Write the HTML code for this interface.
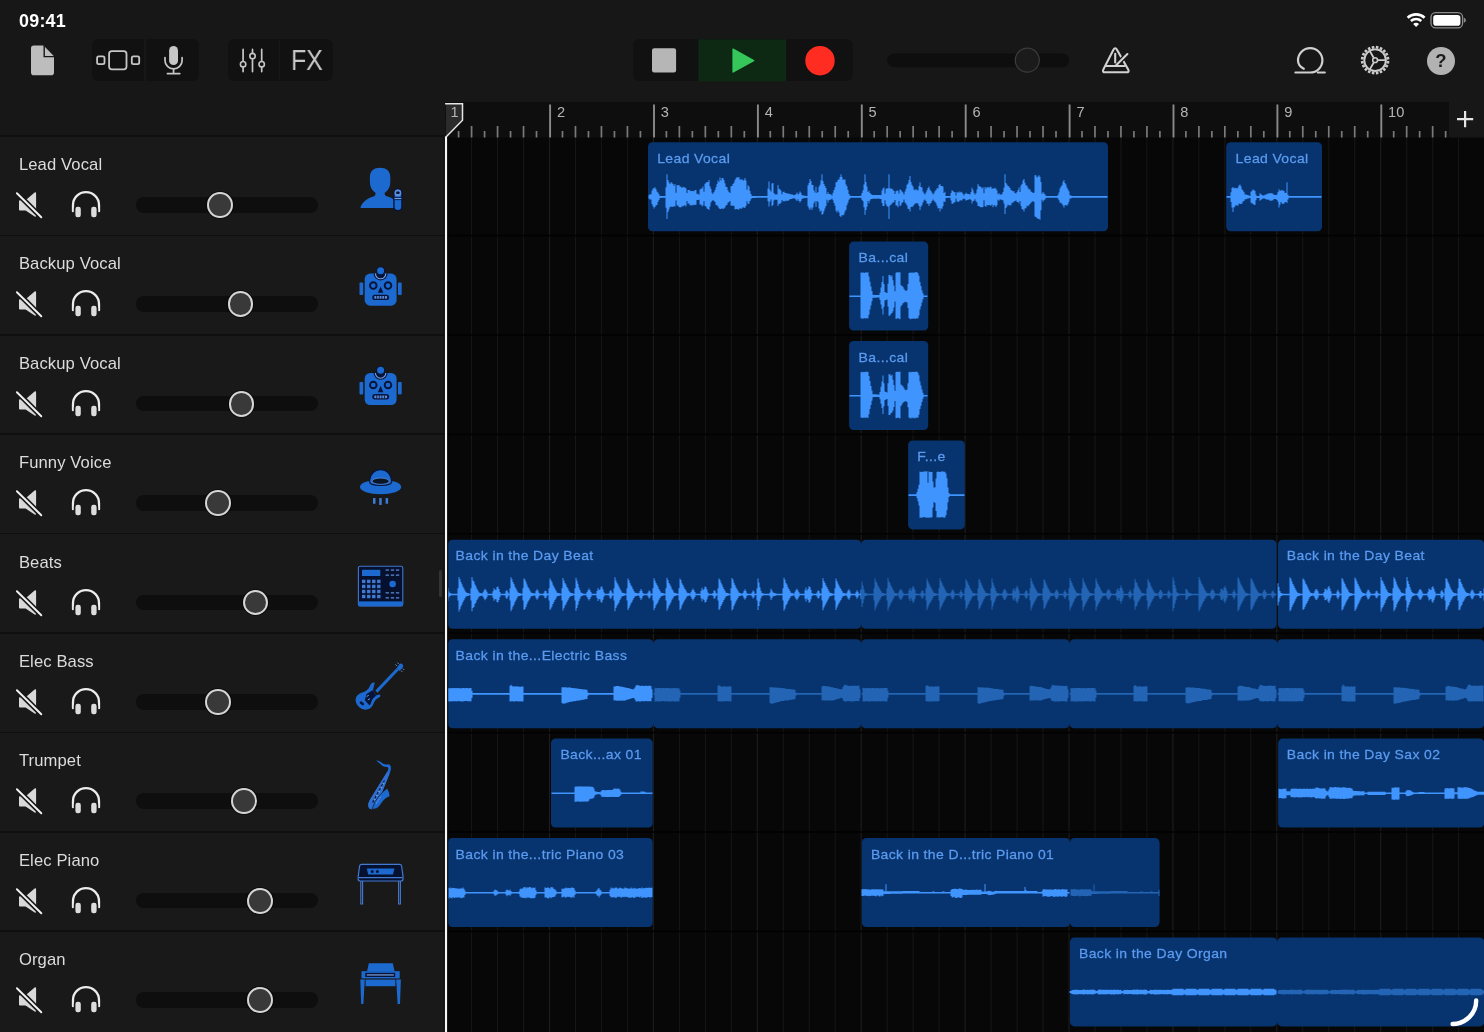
<!DOCTYPE html>
<html lang="en"><head><meta charset="utf-8"><title>GarageBand Tracks</title>
<style>
*{margin:0;padding:0;box-sizing:border-box}
html,body{width:1484px;height:1032px;overflow:hidden;background:#171717;font-family:"Liberation Sans",sans-serif;}
#app{position:relative;width:1484px;height:1032px;overflow:hidden;background:#171717}
.abs{position:absolute}
svg{position:absolute;left:0;top:0;overflow:visible}
#timeline,#chrome,#sidebar,#time,#fx,#help{will-change:transform}
#time{position:absolute;left:19.3px;top:11px;font-size:17.9px;line-height:20px;font-weight:bold;color:#fff;letter-spacing:.25px}
.grp{position:absolute;background:#111111;border-radius:6px;top:39.4px;height:42px}
.div{position:absolute;top:0;width:1.5px;height:42px;background:#171717}
#fx{position:absolute;left:290.6px;top:44.2px;font-size:28.6px;line-height:32px;color:#c6c6c6;transform:scaleX(.875);transform-origin:0 0;letter-spacing:-.3px}
#help{position:absolute;left:1427px;top:46.6px;width:27.8px;height:27.8px;border-radius:50%;background:#b2b2b2;color:#1b1b1b;font-weight:bold;font-size:18.5px;line-height:27.8px;text-align:center}
#sidebar{position:absolute;left:0;top:137.4px;width:444px;height:895px;background:#19191a}
.trk{position:absolute;left:0;width:444px;height:99.4px}
.sep{position:absolute;left:0;top:-1.75px;width:444px;height:1.5px;background:#0f0f10}
.nm{position:absolute;left:18.9px;top:18.1px;letter-spacing:.12px;font-size:16.6px;line-height:19px;color:#dcdcdc;white-space:nowrap}
.sl{position:absolute;left:136.4px;top:60px;width:181.4px;height:15.6px;border-radius:8px;background:#0e0e0f}
.th{position:absolute;top:55px;width:25.8px;height:25.8px;border-radius:50%;background:#393939;border:2px solid #d6d6d6;box-shadow:0 0 0 1px rgba(0,0,0,.45)}
.rl{font-family:"Liberation Sans",sans-serif;font-size:13.2px;fill:#5b9bf0;letter-spacing:.35px;stroke:#5b9bf0;stroke-width:.25px}
.rn{font-family:"Liberation Sans",sans-serif;font-size:14.6px;fill:#b4b4b4}
</style></head>
<body><div id="app">
<div id="time">09:41</div>
<div class="grp" style="left:92px;width:107.2px"><div class="div" style="left:52.4px"></div></div>
<div class="grp" style="left:227.6px;width:105.8px"><div class="div" style="left:51px"></div></div>
<div class="grp" style="left:633.1px;width:219.8px"></div>
<div id="sidebar">
<div class="trk" style="top:0px"><div class="sep"></div><div class="nm">Lead Vocal</div><svg width="444" height="99.5">
<path d="M19.9,63.2 H25.6 L34.6,55.6 Q36.1,54.6 36.1,56.4 V78.6 Q36.1,80.4 34.6,79.4 L25.6,73.4 H19.9 Q19,73.4 19,72.5 V64.1 Q19,63.2 19.9,63.2Z" fill="#d9d9d9"/>
<path d="M16.9,56.2 L41.3,80.3" stroke="#19191a" stroke-width="5.2"/>
<path d="M16.9,56.2 L41.3,80.3" stroke="#f2f2f2" stroke-width="1.9" stroke-linecap="round"/>
<path d="M73,74.2 V68.1 a13,13 0 0 1 26,0 V74.2" fill="none" stroke="#ececec" stroke-width="2.3" stroke-linecap="round"/>
<rect x="74.6" y="68.9" width="7" height="12.2" rx="3" fill="#dcdcdc" stroke="#19191a" stroke-width="1.6"/>
<rect x="90.4" y="68.9" width="7" height="12.2" rx="3" fill="#dcdcdc" stroke="#19191a" stroke-width="1.6"/>
</svg><div class="sl"></div><div class="th" style="left:207.1px"></div></div>
<div class="trk" style="top:99.4px"><div class="sep"></div><div class="nm">Backup Vocal</div><svg width="444" height="99.5">
<path d="M19.9,63.2 H25.6 L34.6,55.6 Q36.1,54.6 36.1,56.4 V78.6 Q36.1,80.4 34.6,79.4 L25.6,73.4 H19.9 Q19,73.4 19,72.5 V64.1 Q19,63.2 19.9,63.2Z" fill="#d9d9d9"/>
<path d="M16.9,56.2 L41.3,80.3" stroke="#19191a" stroke-width="5.2"/>
<path d="M16.9,56.2 L41.3,80.3" stroke="#f2f2f2" stroke-width="1.9" stroke-linecap="round"/>
<path d="M73,74.2 V68.1 a13,13 0 0 1 26,0 V74.2" fill="none" stroke="#ececec" stroke-width="2.3" stroke-linecap="round"/>
<rect x="74.6" y="68.9" width="7" height="12.2" rx="3" fill="#dcdcdc" stroke="#19191a" stroke-width="1.6"/>
<rect x="90.4" y="68.9" width="7" height="12.2" rx="3" fill="#dcdcdc" stroke="#19191a" stroke-width="1.6"/>
</svg><div class="sl"></div><div class="th" style="left:227.6px"></div></div>
<div class="trk" style="top:198.8px"><div class="sep"></div><div class="nm">Backup Vocal</div><svg width="444" height="99.5">
<path d="M19.9,63.2 H25.6 L34.6,55.6 Q36.1,54.6 36.1,56.4 V78.6 Q36.1,80.4 34.6,79.4 L25.6,73.4 H19.9 Q19,73.4 19,72.5 V64.1 Q19,63.2 19.9,63.2Z" fill="#d9d9d9"/>
<path d="M16.9,56.2 L41.3,80.3" stroke="#19191a" stroke-width="5.2"/>
<path d="M16.9,56.2 L41.3,80.3" stroke="#f2f2f2" stroke-width="1.9" stroke-linecap="round"/>
<path d="M73,74.2 V68.1 a13,13 0 0 1 26,0 V74.2" fill="none" stroke="#ececec" stroke-width="2.3" stroke-linecap="round"/>
<rect x="74.6" y="68.9" width="7" height="12.2" rx="3" fill="#dcdcdc" stroke="#19191a" stroke-width="1.6"/>
<rect x="90.4" y="68.9" width="7" height="12.2" rx="3" fill="#dcdcdc" stroke="#19191a" stroke-width="1.6"/>
</svg><div class="sl"></div><div class="th" style="left:228.5px"></div></div>
<div class="trk" style="top:298.2px"><div class="sep"></div><div class="nm">Funny Voice</div><svg width="444" height="99.5">
<path d="M19.9,63.2 H25.6 L34.6,55.6 Q36.1,54.6 36.1,56.4 V78.6 Q36.1,80.4 34.6,79.4 L25.6,73.4 H19.9 Q19,73.4 19,72.5 V64.1 Q19,63.2 19.9,63.2Z" fill="#d9d9d9"/>
<path d="M16.9,56.2 L41.3,80.3" stroke="#19191a" stroke-width="5.2"/>
<path d="M16.9,56.2 L41.3,80.3" stroke="#f2f2f2" stroke-width="1.9" stroke-linecap="round"/>
<path d="M73,74.2 V68.1 a13,13 0 0 1 26,0 V74.2" fill="none" stroke="#ececec" stroke-width="2.3" stroke-linecap="round"/>
<rect x="74.6" y="68.9" width="7" height="12.2" rx="3" fill="#dcdcdc" stroke="#19191a" stroke-width="1.6"/>
<rect x="90.4" y="68.9" width="7" height="12.2" rx="3" fill="#dcdcdc" stroke="#19191a" stroke-width="1.6"/>
</svg><div class="sl"></div><div class="th" style="left:204.8px"></div></div>
<div class="trk" style="top:397.6px"><div class="sep"></div><div class="nm">Beats</div><svg width="444" height="99.5">
<path d="M19.9,63.2 H25.6 L34.6,55.6 Q36.1,54.6 36.1,56.4 V78.6 Q36.1,80.4 34.6,79.4 L25.6,73.4 H19.9 Q19,73.4 19,72.5 V64.1 Q19,63.2 19.9,63.2Z" fill="#d9d9d9"/>
<path d="M16.9,56.2 L41.3,80.3" stroke="#19191a" stroke-width="5.2"/>
<path d="M16.9,56.2 L41.3,80.3" stroke="#f2f2f2" stroke-width="1.9" stroke-linecap="round"/>
<path d="M73,74.2 V68.1 a13,13 0 0 1 26,0 V74.2" fill="none" stroke="#ececec" stroke-width="2.3" stroke-linecap="round"/>
<rect x="74.6" y="68.9" width="7" height="12.2" rx="3" fill="#dcdcdc" stroke="#19191a" stroke-width="1.6"/>
<rect x="90.4" y="68.9" width="7" height="12.2" rx="3" fill="#dcdcdc" stroke="#19191a" stroke-width="1.6"/>
</svg><div class="sl"></div><div class="th" style="left:242.5px"></div></div>
<div class="trk" style="top:497px"><div class="sep"></div><div class="nm">Elec Bass</div><svg width="444" height="99.5">
<path d="M19.9,63.2 H25.6 L34.6,55.6 Q36.1,54.6 36.1,56.4 V78.6 Q36.1,80.4 34.6,79.4 L25.6,73.4 H19.9 Q19,73.4 19,72.5 V64.1 Q19,63.2 19.9,63.2Z" fill="#d9d9d9"/>
<path d="M16.9,56.2 L41.3,80.3" stroke="#19191a" stroke-width="5.2"/>
<path d="M16.9,56.2 L41.3,80.3" stroke="#f2f2f2" stroke-width="1.9" stroke-linecap="round"/>
<path d="M73,74.2 V68.1 a13,13 0 0 1 26,0 V74.2" fill="none" stroke="#ececec" stroke-width="2.3" stroke-linecap="round"/>
<rect x="74.6" y="68.9" width="7" height="12.2" rx="3" fill="#dcdcdc" stroke="#19191a" stroke-width="1.6"/>
<rect x="90.4" y="68.9" width="7" height="12.2" rx="3" fill="#dcdcdc" stroke="#19191a" stroke-width="1.6"/>
</svg><div class="sl"></div><div class="th" style="left:204.8px"></div></div>
<div class="trk" style="top:596.4px"><div class="sep"></div><div class="nm">Trumpet</div><svg width="444" height="99.5">
<path d="M19.9,63.2 H25.6 L34.6,55.6 Q36.1,54.6 36.1,56.4 V78.6 Q36.1,80.4 34.6,79.4 L25.6,73.4 H19.9 Q19,73.4 19,72.5 V64.1 Q19,63.2 19.9,63.2Z" fill="#d9d9d9"/>
<path d="M16.9,56.2 L41.3,80.3" stroke="#19191a" stroke-width="5.2"/>
<path d="M16.9,56.2 L41.3,80.3" stroke="#f2f2f2" stroke-width="1.9" stroke-linecap="round"/>
<path d="M73,74.2 V68.1 a13,13 0 0 1 26,0 V74.2" fill="none" stroke="#ececec" stroke-width="2.3" stroke-linecap="round"/>
<rect x="74.6" y="68.9" width="7" height="12.2" rx="3" fill="#dcdcdc" stroke="#19191a" stroke-width="1.6"/>
<rect x="90.4" y="68.9" width="7" height="12.2" rx="3" fill="#dcdcdc" stroke="#19191a" stroke-width="1.6"/>
</svg><div class="sl"></div><div class="th" style="left:231px"></div></div>
<div class="trk" style="top:695.8px"><div class="sep"></div><div class="nm">Elec Piano</div><svg width="444" height="99.5">
<path d="M19.9,63.2 H25.6 L34.6,55.6 Q36.1,54.6 36.1,56.4 V78.6 Q36.1,80.4 34.6,79.4 L25.6,73.4 H19.9 Q19,73.4 19,72.5 V64.1 Q19,63.2 19.9,63.2Z" fill="#d9d9d9"/>
<path d="M16.9,56.2 L41.3,80.3" stroke="#19191a" stroke-width="5.2"/>
<path d="M16.9,56.2 L41.3,80.3" stroke="#f2f2f2" stroke-width="1.9" stroke-linecap="round"/>
<path d="M73,74.2 V68.1 a13,13 0 0 1 26,0 V74.2" fill="none" stroke="#ececec" stroke-width="2.3" stroke-linecap="round"/>
<rect x="74.6" y="68.9" width="7" height="12.2" rx="3" fill="#dcdcdc" stroke="#19191a" stroke-width="1.6"/>
<rect x="90.4" y="68.9" width="7" height="12.2" rx="3" fill="#dcdcdc" stroke="#19191a" stroke-width="1.6"/>
</svg><div class="sl"></div><div class="th" style="left:247.4px"></div></div>
<div class="trk" style="top:795.2px"><div class="sep"></div><div class="nm">Organ</div><svg width="444" height="99.5">
<path d="M19.9,63.2 H25.6 L34.6,55.6 Q36.1,54.6 36.1,56.4 V78.6 Q36.1,80.4 34.6,79.4 L25.6,73.4 H19.9 Q19,73.4 19,72.5 V64.1 Q19,63.2 19.9,63.2Z" fill="#d9d9d9"/>
<path d="M16.9,56.2 L41.3,80.3" stroke="#19191a" stroke-width="5.2"/>
<path d="M16.9,56.2 L41.3,80.3" stroke="#f2f2f2" stroke-width="1.9" stroke-linecap="round"/>
<path d="M73,74.2 V68.1 a13,13 0 0 1 26,0 V74.2" fill="none" stroke="#ececec" stroke-width="2.3" stroke-linecap="round"/>
<rect x="74.6" y="68.9" width="7" height="12.2" rx="3" fill="#dcdcdc" stroke="#19191a" stroke-width="1.6"/>
<rect x="90.4" y="68.9" width="7" height="12.2" rx="3" fill="#dcdcdc" stroke="#19191a" stroke-width="1.6"/>
</svg><div class="sl"></div><div class="th" style="left:247.4px"></div></div>
<div class="abs" style="left:438.6px;top:432.6px;width:3.6px;height:27px;border-radius:2px;background:#343434"></div>
</div>
<svg id="timeline" width="1484" height="1032">
<rect x="445" y="102" width="1039" height="930" fill="#070707"/>
<rect x="445" y="102" width="1004" height="35.6" fill="#0e0e0e"/>
<rect x="1449" y="100" width="40" height="37.6" fill="#171717"/>
<path d="M471.6,138 V1032 M497.5,138 V1032 M523.5,138 V1032 M575.5,138 V1032 M601.4,138 V1032 M627.4,138 V1032 M679.4,138 V1032 M705.4,138 V1032 M731.3,138 V1032 M783.3,138 V1032 M809.2,138 V1032 M835.2,138 V1032 M887.2,138 V1032 M913.1,138 V1032 M939.1,138 V1032 M991.1,138 V1032 M1017.1,138 V1032 M1043.0,138 V1032 M1095.0,138 V1032 M1121.0,138 V1032 M1146.9,138 V1032 M1198.9,138 V1032 M1224.9,138 V1032 M1250.8,138 V1032 M1302.8,138 V1032 M1328.8,138 V1032 M1354.7,138 V1032 M1406.7,138 V1032 M1432.7,138 V1032 M1458.6,138 V1032" stroke="#161616" stroke-width="1.1" fill="none"/>
<path d="M549.5,138 V1032 M653.4,138 V1032 M757.3,138 V1032 M861.2,138 V1032 M965.1,138 V1032 M1069.0,138 V1032 M1172.9,138 V1032 M1276.8,138 V1032 M1380.7,138 V1032" stroke="#1c1c1c" stroke-width="1.2" fill="none"/>
<path d="M447,235.6 H1484 M447,335 H1484 M447,434.4 H1484 M447,533.8 H1484 M447,633.2 H1484 M447,732.6 H1484 M447,832 H1484 M447,931.4 H1484" stroke="#020202" stroke-width="1.6" fill="none"/>
<path d="M458.588,131 V137.4 M471.575,126 V137.4 M484.562,131 V137.4 M497.55,126 V137.4 M510.538,131 V137.4 M523.525,126 V137.4 M536.513,131 V137.4 M562.488,131 V137.4 M575.475,126 V137.4 M588.463,131 V137.4 M601.45,126 V137.4 M614.438,131 V137.4 M627.425,126 V137.4 M640.413,131 V137.4 M666.388,131 V137.4 M679.375,126 V137.4 M692.363,131 V137.4 M705.35,126 V137.4 M718.338,131 V137.4 M731.325,126 V137.4 M744.312,131 V137.4 M770.288,131 V137.4 M783.275,126 V137.4 M796.263,131 V137.4 M809.25,126 V137.4 M822.238,131 V137.4 M835.225,126 V137.4 M848.213,131 V137.4 M874.188,131 V137.4 M887.175,126 V137.4 M900.163,131 V137.4 M913.15,126 V137.4 M926.138,131 V137.4 M939.125,126 V137.4 M952.113,131 V137.4 M978.088,131 V137.4 M991.075,126 V137.4 M1004.06,131 V137.4 M1017.05,126 V137.4 M1030.04,131 V137.4 M1043.03,126 V137.4 M1056.01,131 V137.4 M1081.99,131 V137.4 M1094.97,126 V137.4 M1107.96,131 V137.4 M1120.95,126 V137.4 M1133.94,131 V137.4 M1146.93,126 V137.4 M1159.91,131 V137.4 M1185.89,131 V137.4 M1198.88,126 V137.4 M1211.86,131 V137.4 M1224.85,126 V137.4 M1237.84,131 V137.4 M1250.83,126 V137.4 M1263.81,131 V137.4 M1289.79,131 V137.4 M1302.78,126 V137.4 M1315.76,131 V137.4 M1328.75,126 V137.4 M1341.74,131 V137.4 M1354.72,126 V137.4 M1367.71,131 V137.4 M1393.69,131 V137.4 M1406.68,126 V137.4 M1419.66,131 V137.4 M1432.65,126 V137.4 M1445.64,131 V137.4" stroke="#7a7a7a" stroke-width="1.7" fill="none"/>
<path d="M550.1,104.6 V137.4 M654,104.6 V137.4 M757.9,104.6 V137.4 M861.8,104.6 V137.4 M965.7,104.6 V137.4 M1069.6,104.6 V137.4 M1173.5,104.6 V137.4 M1277.4,104.6 V137.4 M1381.3,104.6 V137.4" stroke="#8a8a8a" stroke-width="1.9" fill="none"/>
<text x="556.9" y="116.9" class="rn">2</text>
<text x="660.8" y="116.9" class="rn">3</text>
<text x="764.7" y="116.9" class="rn">4</text>
<text x="868.6" y="116.9" class="rn">5</text>
<text x="972.5" y="116.9" class="rn">6</text>
<text x="1076.4" y="116.9" class="rn">7</text>
<text x="1180.3" y="116.9" class="rn">8</text>
<text x="1284.2" y="116.9" class="rn">9</text>
<text x="1388.1" y="116.9" class="rn">10</text>
<rect x="648" y="142.2" width="460" height="89" rx="4.5" fill="#07346f"/>
<path d="M648.5,195.3 649.5,195.3 649.5,194.2 650.5,194.2 650.5,194.3 651.5,194.3 651.5,190.7 652.5,190.7 652.5,188.5 653.5,188.5 653.5,188.2 654.5,188.2 654.5,187.2 655.5,187.2 655.5,188.9 656.5,188.9 656.5,191.4 657.5,191.4 657.5,192.5 658.5,192.5 658.5,194.2 659.5,194.2 659.5,195.9 661.5,195.9 661.5,196 663.5,196 663.5,196.1 665.5,196.1 665.5,187.3 666.5,187.3 666.5,174.3 667.5,174.3 667.5,179.9 668.5,179.9 668.5,182.2 669.5,182.2 669.5,183.9 670.5,183.9 670.5,182.2 671.5,182.2 671.5,182.7 672.5,182.7 672.5,184.1 673.5,184.1 673.5,185.7 674.5,185.7 674.5,184.1 675.5,184.1 675.5,192.8 676.5,192.8 676.5,185.2 677.5,185.2 677.5,185.3 678.5,185.3 678.5,185.1 679.5,185.1 679.5,186.5 680.5,186.5 680.5,186.8 681.5,186.8 681.5,187.9 682.5,187.9 682.5,186.8 683.5,186.8 683.5,187.3 684.5,187.3 684.5,187.4 685.5,187.4 685.5,188.2 686.5,188.2 686.5,193 687.5,193 687.5,189.9 688.5,189.9 688.5,190.1 689.5,190.1 689.5,190.5 690.5,190.5 690.5,191.3 691.5,191.3 691.5,191.1 692.5,191.1 692.5,190.9 693.5,190.9 693.5,191.3 694.5,191.3 694.5,189.9 695.5,189.9 695.5,190 696.5,190 696.5,193.9 697.5,193.9 697.5,193.4 698.5,193.4 698.5,194.7 699.5,194.7 699.5,189.4 700.5,189.4 700.5,188.5 702.5,188.5 702.5,186.4 703.5,186.4 703.5,191.8 704.5,191.8 704.5,183.8 705.5,183.8 705.5,182.8 706.5,182.8 706.5,182 707.5,182 707.5,181.9 708.5,181.9 708.5,179.9 709.5,179.9 709.5,186.3 710.5,186.3 710.5,188.8 711.5,188.8 711.5,192.8 712.5,192.8 712.5,193.9 713.5,193.9 713.5,192.1 714.5,192.1 714.5,190.1 715.5,190.1 715.5,187.2 716.5,187.2 716.5,183.9 717.5,183.9 717.5,180.5 718.5,180.5 718.5,182.1 719.5,182.1 719.5,177.5 720.5,177.5 720.5,180.4 721.5,180.4 721.5,178 722.5,178 722.5,177.9 723.5,177.9 723.5,180 724.5,180 724.5,183.2 725.5,183.2 725.5,186.8 726.5,186.8 726.5,187.1 727.5,187.1 727.5,190.2 728.5,190.2 728.5,192 729.5,192 729.5,192.9 730.5,192.9 730.5,186.3 731.5,186.3 731.5,186 732.5,186 732.5,184.1 733.5,184.1 733.5,182.7 734.5,182.7 734.5,179.9 735.5,179.9 735.5,178.2 736.5,178.2 736.5,176.9 737.5,176.9 737.5,177.7 738.5,177.7 738.5,176.9 739.5,176.9 739.5,179.5 740.5,179.5 740.5,179.7 741.5,179.7 741.5,178.9 742.5,178.9 742.5,180.7 743.5,180.7 743.5,179.9 744.5,179.9 744.5,178 745.5,178 745.5,180.5 746.5,180.5 746.5,189.8 747.5,189.8 747.5,185.2 748.5,185.2 748.5,186.4 749.5,186.4 749.5,191 750.5,191 750.5,194 751.5,194 751.5,195.9 755.5,195.9 755.5,196 763.5,196 763.5,196.1 767.5,196.1 767.5,188.6 768.5,188.6 768.5,181.5 769.5,181.5 769.5,189.8 770.5,189.8 770.5,191.4 771.5,191.4 771.5,183.5 772.5,183.5 772.5,182.9 773.5,182.9 773.5,192.9 774.5,192.9 774.5,194.4 775.5,194.4 775.5,194.2 776.5,194.2 776.5,194.5 777.5,194.5 777.5,184.9 778.5,184.9 778.5,188.7 779.5,188.7 779.5,189.3 780.5,189.3 780.5,190.4 781.5,190.4 781.5,194.3 782.5,194.3 782.5,191.9 783.5,191.9 783.5,191.4 784.5,191.4 784.5,192.8 785.5,192.8 785.5,193 786.5,193 786.5,193.3 787.5,193.3 787.5,193.7 788.5,193.7 788.5,193.5 789.5,193.5 789.5,194.1 790.5,194.1 790.5,194.5 791.5,194.5 791.5,194.3 792.5,194.3 792.5,194.7 793.5,194.7 793.5,195.2 794.5,195.2 794.5,195.1 795.5,195.1 795.5,194.1 796.5,194.1 796.5,192.5 797.5,192.5 797.5,194.6 798.5,194.6 798.5,193.5 799.5,193.5 799.5,191.5 800.5,191.5 800.5,192.7 801.5,192.7 801.5,195 802.5,195 802.5,195.5 803.5,195.5 803.5,195.6 804.5,195.6 804.5,195.8 805.5,195.8 805.5,195.9 806.5,195.9 806.5,196.1 807.5,196.1 807.5,185.2 808.5,185.2 808.5,182.9 809.5,182.9 809.5,179.1 810.5,179.1 810.5,181.1 811.5,181.1 811.5,184.7 812.5,184.7 812.5,185 813.5,185 813.5,190.2 814.5,190.2 814.5,192.6 815.5,192.6 815.5,186.7 816.5,186.7 816.5,192.9 817.5,192.9 817.5,191.9 818.5,191.9 818.5,186.7 819.5,186.7 819.5,184.8 820.5,184.8 820.5,180.2 821.5,180.2 821.5,174.3 822.5,174.3 822.5,180.9 823.5,180.9 823.5,184.1 824.5,184.1 824.5,186.1 825.5,186.1 825.5,188 826.5,188 826.5,194 827.5,194 827.5,192.1 828.5,192.1 828.5,194.1 829.5,194.1 829.5,193.9 830.5,193.9 830.5,194.4 831.5,194.4 831.5,195.4 832.5,195.4 832.5,192.7 833.5,192.7 833.5,189.9 834.5,189.9 834.5,187.3 835.5,187.3 835.5,182.3 836.5,182.3 836.5,182.1 837.5,182.1 837.5,179.8 838.5,179.8 838.5,179.6 839.5,179.6 839.5,176.9 840.5,176.9 840.5,174.3 841.5,174.3 841.5,176.9 842.5,176.9 842.5,179.7 843.5,179.7 843.5,179.5 844.5,179.5 844.5,179.4 845.5,179.4 845.5,184.5 846.5,184.5 846.5,186.2 847.5,186.2 847.5,190.1 848.5,190.1 848.5,194 849.5,194 849.5,195.4 850.5,195.4 850.5,196.1 860.5,196.1 860.5,195.6 861.5,195.6 861.5,193 862.5,193 862.5,190.2 863.5,190.2 863.5,184.5 864.5,184.5 864.5,174.3 865.5,174.3 865.5,181.9 866.5,181.9 866.5,186.6 867.5,186.6 867.5,191.9 868.5,191.9 868.5,190.8 869.5,190.8 869.5,193.1 870.5,193.1 870.5,194.1 871.5,194.1 871.5,195 873.5,195 873.5,195.1 874.5,195.1 874.5,195 875.5,195 875.5,195.1 879.5,195.1 879.5,194.9 881.5,194.9 881.5,190.6 882.5,190.6 882.5,188.6 883.5,188.6 883.5,187.5 884.5,187.5 884.5,193.6 885.5,193.6 885.5,189.1 886.5,189.1 886.5,188.2 887.5,188.2 887.5,188.3 888.5,188.3 888.5,174.3 889.5,174.3 889.5,188.6 891.5,188.6 891.5,188.8 892.5,188.8 892.5,189.8 893.5,189.8 893.5,191.1 894.5,191.1 894.5,194.1 895.5,194.1 895.5,191.2 896.5,191.2 896.5,190.5 897.5,190.5 897.5,190.7 898.5,190.7 898.5,193.6 899.5,193.6 899.5,189.6 900.5,189.6 900.5,189.9 901.5,189.9 901.5,191.5 902.5,191.5 902.5,192.5 903.5,192.5 903.5,194.4 904.5,194.4 904.5,191.6 905.5,191.6 905.5,188.8 906.5,188.8 906.5,184.7 907.5,184.7 907.5,183.5 908.5,183.5 908.5,179.9 909.5,179.9 909.5,175.9 910.5,175.9 910.5,182.1 911.5,182.1 911.5,184.7 912.5,184.7 912.5,186.6 913.5,186.6 913.5,189.5 914.5,189.5 914.5,190.2 915.5,190.2 915.5,189 916.5,189 916.5,190.2 918.5,190.2 918.5,186.1 919.5,186.1 919.5,182.4 920.5,182.4 920.5,186.9 921.5,186.9 921.5,187.4 922.5,187.4 922.5,191.6 923.5,191.6 923.5,193.3 924.5,193.3 924.5,194.4 925.5,194.4 925.5,192.4 926.5,192.4 926.5,190.2 927.5,190.2 927.5,188 928.5,188 928.5,186.4 929.5,186.4 929.5,189.6 930.5,189.6 930.5,191.1 931.5,191.1 931.5,192.5 932.5,192.5 932.5,194.4 933.5,194.4 933.5,193.2 934.5,193.2 934.5,191.2 935.5,191.2 935.5,190 936.5,190 936.5,188.2 937.5,188.2 937.5,188.3 938.5,188.3 938.5,185.1 939.5,185.1 939.5,183.9 940.5,183.9 940.5,186 941.5,186 941.5,185.9 942.5,185.9 942.5,186.6 943.5,186.6 943.5,193 944.5,193 944.5,191.8 945.5,191.8 945.5,195.9 947.5,195.9 947.5,196 949.5,196 949.5,196.1 950.5,196.1 950.5,193 951.5,193 951.5,190.3 952.5,190.3 952.5,191.1 953.5,191.1 953.5,192 954.5,192 954.5,192.2 955.5,192.2 955.5,195.4 956.5,195.4 956.5,191.9 957.5,191.9 957.5,192.7 958.5,192.7 958.5,191.6 959.5,191.6 959.5,192.6 960.5,192.6 960.5,191.8 961.5,191.8 961.5,192.5 962.5,192.5 962.5,193.7 963.5,193.7 963.5,195.4 964.5,195.4 964.5,194.1 965.5,194.1 965.5,192.8 966.5,192.8 966.5,193.8 967.5,193.8 967.5,193.9 968.5,193.9 968.5,194 969.5,194 969.5,194.5 970.5,194.5 970.5,192 971.5,192 971.5,187.7 972.5,187.7 972.5,189.8 973.5,189.8 973.5,192.7 974.5,192.7 974.5,194.4 975.5,194.4 975.5,193.2 976.5,193.2 976.5,189.4 977.5,189.4 977.5,183.9 978.5,183.9 978.5,185.9 979.5,185.9 979.5,186.4 980.5,186.4 980.5,187 981.5,187 981.5,188.6 982.5,188.6 982.5,187.3 983.5,187.3 983.5,193.3 984.5,193.3 984.5,186.9 985.5,186.9 985.5,188.5 986.5,188.5 986.5,187.3 987.5,187.3 987.5,187 988.5,187 988.5,188.1 989.5,188.1 989.5,186.8 991.5,186.8 991.5,188.7 992.5,188.7 992.5,188.6 993.5,188.6 993.5,188.4 994.5,188.4 994.5,187.7 995.5,187.7 995.5,188.8 996.5,188.8 996.5,190.4 997.5,190.4 997.5,194.2 998.5,194.2 998.5,193 999.5,193 999.5,194.4 1001.5,194.4 1001.5,194.3 1002.5,194.3 1002.5,191.9 1003.5,191.9 1003.5,187.8 1004.5,187.8 1004.5,174.3 1005.5,174.3 1005.5,182.9 1006.5,182.9 1006.5,184.6 1007.5,184.6 1007.5,185.9 1008.5,185.9 1008.5,186.5 1009.5,186.5 1009.5,188 1010.5,188 1010.5,189.9 1011.5,189.9 1011.5,190.4 1012.5,190.4 1012.5,191.3 1013.5,191.3 1013.5,191.2 1014.5,191.2 1014.5,192.9 1015.5,192.9 1015.5,193.4 1016.5,193.4 1016.5,192 1017.5,192 1017.5,189.9 1018.5,189.9 1018.5,187.5 1019.5,187.5 1019.5,192.1 1020.5,192.1 1020.5,185.5 1021.5,185.5 1021.5,184 1022.5,184 1022.5,180.4 1023.5,180.4 1023.5,179.1 1024.5,179.1 1024.5,182.8 1025.5,182.8 1025.5,185.3 1026.5,185.3 1026.5,185.8 1027.5,185.8 1027.5,187.8 1028.5,187.8 1028.5,189.4 1029.5,189.4 1029.5,189.3 1030.5,189.3 1030.5,191.4 1031.5,191.4 1031.5,192.1 1032.5,192.1 1032.5,192.9 1033.5,192.9 1033.5,192.8 1034.5,192.8 1034.5,175.2 1036.5,175.2 1036.5,177.4 1037.5,177.4 1037.5,176.6 1038.5,176.6 1038.5,175.2 1039.5,175.2 1039.5,176.8 1040.5,176.8 1040.5,181.9 1041.5,181.9 1041.5,193.7 1042.5,193.7 1042.5,192.1 1043.5,192.1 1043.5,193.2 1044.5,193.2 1044.5,194.4 1045.5,194.4 1045.5,195.7 1046.5,195.7 1046.5,196.1 1057.5,196.1 1057.5,194.9 1058.5,194.9 1058.5,192.4 1059.5,192.4 1059.5,188.6 1060.5,188.6 1060.5,186.6 1061.5,186.6 1061.5,185.3 1062.5,185.3 1062.5,181.8 1063.5,181.8 1063.5,179.9 1064.5,179.9 1064.5,183.1 1065.5,183.1 1065.5,184.6 1066.5,184.6 1066.5,187.4 1067.5,187.4 1067.5,189.5 1068.5,189.5 1068.5,191.2 1069.5,191.2 1069.5,195.3 1070.5,195.3 1070.5,195.4 1071.5,195.4 1071.5,196.1 1107.5,196.1 L1107.5,197.7 1071.5,197.7 1071.5,198.5 1069.5,198.5 1069.5,201.8 1068.5,201.8 1068.5,204.3 1067.5,204.3 1067.5,205.8 1066.5,205.8 1066.5,204.9 1065.5,204.9 1065.5,205.3 1064.5,205.3 1064.5,207.4 1063.5,207.4 1063.5,205.5 1062.5,205.5 1062.5,203.9 1061.5,203.9 1061.5,202.8 1060.5,202.8 1060.5,202.7 1059.5,202.7 1059.5,200.2 1058.5,200.2 1058.5,198.4 1057.5,198.4 1057.5,197.7 1046.5,197.7 1046.5,198.1 1045.5,198.1 1045.5,199.5 1044.5,199.5 1044.5,200.2 1043.5,200.2 1043.5,201.7 1042.5,201.7 1042.5,199.7 1041.5,199.7 1041.5,210.3 1040.5,210.3 1040.5,219.8 1039.5,219.8 1039.5,218.8 1038.5,218.8 1038.5,218.9 1037.5,218.9 1037.5,218.1 1036.5,218.1 1036.5,217.1 1035.5,217.1 1035.5,216.5 1034.5,216.5 1034.5,202.1 1033.5,202.1 1033.5,200.9 1032.5,200.9 1032.5,201.7 1031.5,201.7 1031.5,202.8 1030.5,202.8 1030.5,204.1 1029.5,204.1 1029.5,205.2 1028.5,205.2 1028.5,206.3 1027.5,206.3 1027.5,205.7 1026.5,205.7 1026.5,208.2 1025.5,208.2 1025.5,208.4 1024.5,208.4 1024.5,211.4 1023.5,211.4 1023.5,209.4 1022.5,209.4 1022.5,209.1 1021.5,209.1 1021.5,205.9 1020.5,205.9 1020.5,201.1 1019.5,201.1 1019.5,203.4 1018.5,203.4 1018.5,202.1 1017.5,202.1 1017.5,202 1016.5,202 1016.5,200.4 1015.5,200.4 1015.5,201 1014.5,201 1014.5,201.6 1013.5,201.6 1013.5,202.8 1012.5,202.8 1012.5,202.7 1011.5,202.7 1011.5,205.3 1009.5,205.3 1009.5,205.5 1008.5,205.5 1008.5,204.6 1007.5,204.6 1007.5,206.6 1006.5,206.6 1006.5,207.9 1005.5,207.9 1005.5,213.9 1004.5,213.9 1004.5,203.6 1003.5,203.6 1003.5,200.6 1002.5,200.6 1002.5,199.9 1001.5,199.9 1001.5,199.4 1000.5,199.4 1000.5,199.5 999.5,199.5 999.5,200.8 998.5,200.8 998.5,199.7 997.5,199.7 997.5,205.2 996.5,205.2 996.5,207 995.5,207 995.5,205.4 994.5,205.4 994.5,205.2 993.5,205.2 993.5,207.2 992.5,207.2 992.5,204.6 991.5,204.6 991.5,205.8 990.5,205.8 990.5,205.3 989.5,205.3 989.5,204.9 988.5,204.9 988.5,205.5 987.5,205.5 987.5,205.1 986.5,205.1 986.5,206.9 985.5,206.9 985.5,206.1 984.5,206.1 984.5,200.2 983.5,200.2 983.5,207.1 982.5,207.1 982.5,207.2 980.5,207.2 980.5,206.9 979.5,206.9 979.5,205.9 977.5,205.9 977.5,202.6 976.5,202.6 976.5,201.3 975.5,201.3 975.5,199.3 974.5,199.3 974.5,200.7 973.5,200.7 973.5,201.3 972.5,201.3 972.5,203.4 971.5,203.4 971.5,200.1 970.5,200.1 970.5,199 969.5,199 969.5,199.4 968.5,199.4 968.5,199.8 967.5,199.8 967.5,200.1 966.5,200.1 966.5,200.8 965.5,200.8 965.5,199.2 964.5,199.2 964.5,198.4 963.5,198.4 963.5,199.1 962.5,199.1 962.5,200.5 961.5,200.5 961.5,200.3 960.5,200.3 960.5,200.6 959.5,200.6 959.5,201.5 958.5,201.5 958.5,201.9 957.5,201.9 957.5,201.2 956.5,201.2 956.5,198.4 955.5,198.4 955.5,202 954.5,202 954.5,202.7 953.5,202.7 953.5,203.4 952.5,203.4 952.5,204.1 951.5,204.1 951.5,200.6 950.5,200.6 950.5,197.7 949.5,197.7 949.5,197.8 947.5,197.8 947.5,197.9 945.5,197.9 945.5,201.9 944.5,201.9 944.5,201.4 943.5,201.4 943.5,206.3 942.5,206.3 942.5,209 941.5,209 941.5,208.2 940.5,208.2 940.5,211.4 939.5,211.4 939.5,208.1 938.5,208.1 938.5,208.6 937.5,208.6 937.5,205.7 936.5,205.7 936.5,203.3 935.5,203.3 935.5,201.8 934.5,201.8 934.5,200.8 933.5,200.8 933.5,199.4 932.5,199.4 932.5,200.9 931.5,200.9 931.5,202.9 930.5,202.9 930.5,203.7 929.5,203.7 929.5,205.9 928.5,205.9 928.5,203.7 927.5,203.7 927.5,203.5 926.5,203.5 926.5,201 925.5,201 925.5,199.4 924.5,199.4 924.5,200.4 923.5,200.4 923.5,202.6 922.5,202.6 922.5,205.3 921.5,205.3 921.5,206.7 920.5,206.7 920.5,209.9 919.5,209.9 919.5,206 918.5,206 918.5,203.7 917.5,203.7 917.5,202.9 916.5,202.9 916.5,203.5 915.5,203.5 915.5,203.4 914.5,203.4 914.5,204.9 913.5,204.9 913.5,206.4 912.5,206.4 912.5,206.8 911.5,206.8 911.5,207 910.5,207 910.5,211.4 909.5,211.4 909.5,208.9 908.5,208.9 908.5,208.8 907.5,208.8 907.5,205.5 906.5,205.5 906.5,203.7 905.5,203.7 905.5,202.5 904.5,202.5 904.5,199.4 903.5,199.4 903.5,201.9 902.5,201.9 902.5,203.1 901.5,203.1 901.5,205.2 900.5,205.2 900.5,206.1 899.5,206.1 899.5,201 898.5,201 898.5,207.2 897.5,207.2 897.5,205.5 895.5,205.5 895.5,199.9 894.5,199.9 894.5,202.3 893.5,202.3 893.5,202.6 892.5,202.6 892.5,203.5 891.5,203.5 891.5,204.7 890.5,204.7 890.5,205.6 889.5,205.6 889.5,218.9 888.5,218.9 888.5,206.7 887.5,206.7 887.5,206.2 886.5,206.2 886.5,204.2 885.5,204.2 885.5,200.2 884.5,200.2 884.5,205.9 883.5,205.9 883.5,206 882.5,206 882.5,202.9 881.5,202.9 881.5,198.9 880.5,198.9 880.5,199 879.5,199 879.5,198.6 878.5,198.6 878.5,198.8 877.5,198.8 877.5,198.6 876.5,198.6 876.5,198.9 875.5,198.9 875.5,198.6 874.5,198.6 874.5,198.7 873.5,198.7 873.5,198.8 872.5,198.8 872.5,199 871.5,199 871.5,199.1 870.5,199.1 870.5,200.5 869.5,200.5 869.5,203.3 868.5,203.3 868.5,201.1 867.5,201.1 867.5,206.8 866.5,206.8 866.5,209.9 865.5,209.9 865.5,214.7 864.5,214.7 864.5,207.3 863.5,207.3 863.5,201.3 862.5,201.3 862.5,199.9 861.5,199.9 861.5,198.1 860.5,198.1 860.5,197.7 850.5,197.7 850.5,198.4 849.5,198.4 849.5,199.8 848.5,199.8 848.5,202.8 847.5,202.8 847.5,205.3 846.5,205.3 846.5,209.8 845.5,209.8 845.5,211.4 844.5,211.4 844.5,214.5 843.5,214.5 843.5,215.4 842.5,215.4 842.5,214.9 841.5,214.9 841.5,216.9 840.5,216.9 840.5,215.9 839.5,215.9 839.5,212.6 838.5,212.6 838.5,210.5 837.5,210.5 837.5,212.4 836.5,212.4 836.5,210.8 835.5,210.8 835.5,205.7 834.5,205.7 834.5,203.1 833.5,203.1 833.5,200.2 832.5,200.2 832.5,198.4 831.5,198.4 831.5,199.4 830.5,199.4 830.5,199.7 829.5,199.7 829.5,200.2 828.5,200.2 828.5,202.4 827.5,202.4 827.5,199.8 826.5,199.8 826.5,206.1 825.5,206.1 825.5,208.5 824.5,208.5 824.5,211.2 823.5,211.2 823.5,213.9 822.5,213.9 822.5,214.7 821.5,214.7 821.5,210.5 820.5,210.5 820.5,211.6 819.5,211.6 819.5,208.6 818.5,208.6 818.5,201.9 817.5,201.9 817.5,200.9 816.5,200.9 816.5,206.8 815.5,206.8 815.5,201.2 814.5,201.2 814.5,203.2 813.5,203.2 813.5,207.6 812.5,207.6 812.5,209.7 811.5,209.7 811.5,207.5 810.5,207.5 810.5,209.9 809.5,209.9 809.5,208.4 808.5,208.4 808.5,206.2 807.5,206.2 807.5,197.7 806.5,197.7 806.5,197.9 805.5,197.9 805.5,198 804.5,198 804.5,198.2 803.5,198.2 803.5,198.3 802.5,198.3 802.5,199 801.5,199 801.5,201.1 800.5,201.1 800.5,202.5 799.5,202.5 799.5,201.1 798.5,201.1 798.5,199.2 797.5,199.2 797.5,200.9 796.5,200.9 796.5,199.7 795.5,199.7 795.5,198.7 794.5,198.7 794.5,198.3 792.5,198.3 792.5,199 790.5,199 790.5,199.3 789.5,199.3 789.5,200.2 788.5,200.2 788.5,200.7 787.5,200.7 787.5,200.9 786.5,200.9 786.5,200.6 785.5,200.6 785.5,201.6 784.5,201.6 784.5,201 783.5,201 783.5,201.6 782.5,201.6 782.5,199.9 781.5,199.9 781.5,202.7 780.5,202.7 780.5,203.9 779.5,203.9 779.5,203.7 778.5,203.7 778.5,205.9 777.5,205.9 777.5,199.7 776.5,199.7 776.5,200 775.5,200 775.5,199.4 774.5,199.4 774.5,200.5 773.5,200.5 773.5,205 772.5,205 772.5,206.3 771.5,206.3 771.5,199.6 770.5,199.6 770.5,201.8 769.5,201.8 769.5,206.6 768.5,206.6 768.5,201.2 767.5,201.2 767.5,197.7 763.5,197.7 763.5,197.8 755.5,197.8 755.5,197.9 751.5,197.9 751.5,199.2 750.5,199.2 750.5,201.1 749.5,201.1 749.5,203.5 748.5,203.5 748.5,204 747.5,204 747.5,201.3 746.5,201.3 746.5,206 745.5,206 745.5,207.8 744.5,207.8 744.5,207.9 743.5,207.9 743.5,207.1 742.5,207.1 742.5,208.3 741.5,208.3 741.5,209.1 740.5,209.1 740.5,208 739.5,208 739.5,209.4 738.5,209.4 738.5,209.5 737.5,209.5 737.5,208.9 735.5,208.9 735.5,209.6 734.5,209.6 734.5,206 733.5,206 733.5,205.6 732.5,205.6 732.5,205.7 730.5,205.7 730.5,200.9 729.5,200.9 729.5,201.9 728.5,201.9 728.5,202.8 727.5,202.8 727.5,205.1 726.5,205.1 726.5,205.6 725.5,205.6 725.5,207.6 724.5,207.6 724.5,208.5 723.5,208.5 723.5,208.9 722.5,208.9 722.5,208.3 721.5,208.3 721.5,209.1 720.5,209.1 720.5,208.9 719.5,208.9 719.5,208.3 718.5,208.3 718.5,206.5 717.5,206.5 717.5,205.3 716.5,205.3 716.5,205.1 715.5,205.1 715.5,202 714.5,202 714.5,200.9 713.5,200.9 713.5,199.9 712.5,199.9 712.5,200.9 711.5,200.9 711.5,202.4 710.5,202.4 710.5,206.4 709.5,206.4 709.5,209.9 708.5,209.9 708.5,208.9 707.5,208.9 707.5,208.5 706.5,208.5 706.5,206.5 705.5,206.5 705.5,206.1 704.5,206.1 704.5,201.3 703.5,201.3 703.5,205.4 702.5,205.4 702.5,206.3 701.5,206.3 701.5,204.6 700.5,204.6 700.5,204.4 699.5,204.4 699.5,199.8 698.5,199.8 698.5,199.9 696.5,199.9 696.5,204.7 695.5,204.7 695.5,204.8 694.5,204.8 694.5,205.3 693.5,205.3 693.5,204.8 692.5,204.8 692.5,205.4 691.5,205.4 691.5,205.3 689.5,205.3 689.5,203.5 688.5,203.5 688.5,203.7 687.5,203.7 687.5,201 686.5,201 686.5,206.5 685.5,206.5 685.5,205.2 684.5,205.2 684.5,205.5 683.5,205.5 683.5,206.5 682.5,206.5 682.5,206.3 681.5,206.3 681.5,207.2 680.5,207.2 680.5,207.5 679.5,207.5 679.5,206.9 678.5,206.9 678.5,205.8 677.5,205.8 677.5,205.3 676.5,205.3 676.5,200.5 675.5,200.5 675.5,206.7 674.5,206.7 674.5,206.1 673.5,206.1 673.5,207 672.5,207 672.5,206.7 671.5,206.7 671.5,206.5 670.5,206.5 670.5,207.2 669.5,207.2 669.5,209.4 668.5,209.4 668.5,211.9 667.5,211.9 667.5,218.9 666.5,218.9 666.5,207.7 665.5,207.7 665.5,197.7 663.5,197.7 663.5,197.8 661.5,197.8 661.5,197.9 659.5,197.9 659.5,200.1 658.5,200.1 658.5,202 657.5,202 657.5,205 656.5,205 656.5,205.6 655.5,205.6 655.5,207 654.5,207 654.5,208.6 653.5,208.6 653.5,206.2 652.5,206.2 652.5,204.1 651.5,204.1 651.5,199.6 649.5,199.6 649.5,198.5 648.5,198.5Z" fill="#4094fd"/>
<text transform="translate(657.2,162.7) scale(1.06,1)" class="rl">Lead Vocal</text>
<rect x="1226.2" y="142.2" width="95.8" height="89" rx="4.5" fill="#07346f"/>
<path d="M1226.5,196.1 1230.5,196.1 1230.5,192.3 1231.5,192.3 1231.5,187.9 1232.5,187.9 1232.5,186.9 1233.5,186.9 1233.5,188.4 1234.5,188.4 1234.5,187.8 1235.5,187.8 1235.5,188.1 1236.5,188.1 1236.5,188.4 1237.5,188.4 1237.5,187.4 1238.5,187.4 1238.5,185.4 1239.5,185.4 1239.5,184.4 1240.5,184.4 1240.5,186.2 1241.5,186.2 1241.5,189.2 1242.5,189.2 1242.5,190.5 1243.5,190.5 1243.5,191.9 1244.5,191.9 1244.5,194.5 1245.5,194.5 1245.5,194.2 1246.5,194.2 1246.5,194.9 1247.5,194.9 1247.5,195 1248.5,195 1248.5,195.5 1249.5,195.5 1249.5,195.9 1250.5,195.9 1250.5,191.8 1251.5,191.8 1251.5,190.7 1252.5,190.7 1252.5,189.4 1253.5,189.4 1253.5,189.9 1254.5,189.9 1254.5,190.9 1255.5,190.9 1255.5,194.4 1256.5,194.4 1256.5,195.9 1259.5,195.9 1259.5,193.2 1260.5,193.2 1260.5,194.2 1261.5,194.2 1261.5,195 1262.5,195 1262.5,195.5 1263.5,195.5 1263.5,195.4 1264.5,195.4 1264.5,194.8 1265.5,194.8 1265.5,194.6 1266.5,194.6 1266.5,194.3 1267.5,194.3 1267.5,193.3 1268.5,193.3 1268.5,193.7 1269.5,193.7 1269.5,193.1 1270.5,193.1 1270.5,193.3 1271.5,193.3 1271.5,193.2 1272.5,193.2 1272.5,193.8 1273.5,193.8 1273.5,194.7 1274.5,194.7 1274.5,195.1 1275.5,195.1 1275.5,195 1276.5,195 1276.5,194.4 1277.5,194.4 1277.5,192.1 1278.5,192.1 1278.5,189.3 1279.5,189.3 1279.5,190.9 1280.5,190.9 1280.5,190.3 1281.5,190.3 1281.5,189.9 1282.5,189.9 1282.5,190.7 1284.5,190.7 1284.5,192.7 1285.5,192.7 1285.5,193.1 1286.5,193.1 1286.5,182.3 1287.5,182.3 1287.5,194.7 1288.5,194.7 1288.5,196.1 1321.5,196.1 L1321.5,197.7 1288.5,197.7 1288.5,199.6 1287.5,199.6 1287.5,203.1 1286.5,203.1 1286.5,202.1 1285.5,202.1 1285.5,202.2 1284.5,202.2 1284.5,203.6 1283.5,203.6 1283.5,203.9 1282.5,203.9 1282.5,203.4 1281.5,203.4 1281.5,202 1280.5,202 1280.5,204.8 1279.5,204.8 1279.5,207.4 1278.5,207.4 1278.5,201.8 1277.5,201.8 1277.5,200 1276.5,200 1276.5,199.2 1275.5,199.2 1275.5,198.9 1274.5,198.9 1274.5,199 1273.5,199 1273.5,200.3 1272.5,200.3 1272.5,200.4 1271.5,200.4 1271.5,200.7 1270.5,200.7 1270.5,200.8 1269.5,200.8 1269.5,199.7 1267.5,199.7 1267.5,199.6 1266.5,199.6 1266.5,199.2 1265.5,199.2 1265.5,198.8 1264.5,198.8 1264.5,198.4 1263.5,198.4 1263.5,198.6 1262.5,198.6 1262.5,199 1261.5,199 1261.5,199.9 1260.5,199.9 1260.5,200.8 1259.5,200.8 1259.5,197.9 1256.5,197.9 1256.5,200.3 1255.5,200.3 1255.5,204.9 1254.5,204.9 1254.5,204.8 1253.5,204.8 1253.5,203.7 1252.5,203.7 1252.5,203.5 1251.5,203.5 1251.5,202.4 1250.5,202.4 1250.5,197.9 1249.5,197.9 1249.5,198.3 1248.5,198.3 1248.5,198.5 1247.5,198.5 1247.5,198.7 1246.5,198.7 1246.5,199.2 1245.5,199.2 1245.5,199.6 1244.5,199.6 1244.5,201.1 1243.5,201.1 1243.5,201.6 1242.5,201.6 1242.5,203.4 1241.5,203.4 1241.5,203.9 1240.5,203.9 1240.5,204 1239.5,204 1239.5,203.6 1238.5,203.6 1238.5,205.8 1237.5,205.8 1237.5,205.4 1236.5,205.4 1236.5,205.1 1235.5,205.1 1235.5,206.6 1234.5,206.6 1234.5,207.6 1233.5,207.6 1233.5,211.9 1232.5,211.9 1232.5,207.6 1231.5,207.6 1231.5,202 1230.5,202 1230.5,197.7 1226.5,197.7Z" fill="#4094fd"/>
<text transform="translate(1235.6,162.7) scale(1.06,1)" class="rl">Lead Vocal</text>
<rect x="849.1" y="241.6" width="79.1" height="89" rx="4.5" fill="#07346f"/>
<path d="M849.5,295.5 860.5,295.5 860.5,272.6 861.5,272.6 861.5,272.8 862.5,272.8 862.5,272.3 863.5,272.3 863.5,272.9 864.5,272.9 864.5,272.7 865.5,272.7 865.5,272 866.5,272 866.5,272.7 867.5,272.7 867.5,272.3 868.5,272.3 868.5,276.6 869.5,276.6 869.5,281.7 870.5,281.7 870.5,286.6 871.5,286.6 871.5,291.1 872.5,291.1 872.5,294.8 873.5,294.8 873.5,294.9 876.5,294.9 876.5,295 878.5,295 878.5,295.1 879.5,295.1 879.5,292.7 880.5,292.7 880.5,287.4 881.5,287.4 881.5,282 882.5,282 882.5,276 883.5,276 883.5,283.9 884.5,283.9 884.5,292.1 885.5,292.1 885.5,292.6 886.5,292.6 886.5,293 887.5,293 887.5,283.8 888.5,283.8 888.5,274.9 890.5,274.9 890.5,276.4 891.5,276.4 891.5,275.4 892.5,275.4 892.5,280.3 893.5,280.3 893.5,285.6 894.5,285.6 894.5,291.3 895.5,291.3 895.5,272.7 896.5,272.7 896.5,272.3 898.5,272.3 898.5,272.5 899.5,272.5 899.5,272.2 900.5,272.2 900.5,285 901.5,285 901.5,286.1 902.5,286.1 902.5,286.8 903.5,286.8 903.5,288.7 904.5,288.7 904.5,290.3 905.5,290.3 905.5,290.9 906.5,290.9 906.5,290.2 907.5,290.2 907.5,283.9 908.5,283.9 908.5,272.9 909.5,272.9 909.5,272.4 910.5,272.4 910.5,272.8 911.5,272.8 911.5,272.4 912.5,272.4 912.5,272.7 913.5,272.7 913.5,272.4 914.5,272.4 914.5,272.5 915.5,272.5 915.5,272 916.5,272 916.5,272.3 917.5,272.3 917.5,273.3 918.5,273.3 918.5,275.8 919.5,275.8 919.5,282 920.5,282 920.5,286.1 921.5,286.1 921.5,290.2 922.5,290.2 922.5,293.3 923.5,293.3 923.5,295.5 927.5,295.5 L927.5,297.1 923.5,297.1 923.5,299.3 922.5,299.3 922.5,302.5 921.5,302.5 921.5,306.3 920.5,306.3 920.5,309.5 919.5,309.5 919.5,315.4 918.5,315.4 918.5,318.4 917.5,318.4 917.5,318.2 916.5,318.2 916.5,318.4 915.5,318.4 915.5,319.1 914.5,319.1 914.5,318.3 913.5,318.3 913.5,318.9 912.5,318.9 912.5,318.2 911.5,318.2 911.5,319.2 910.5,319.2 910.5,318.9 909.5,318.9 909.5,318.1 908.5,318.1 908.5,307.9 907.5,307.9 907.5,302.6 906.5,302.6 906.5,301.9 905.5,301.9 905.5,301.8 904.5,301.8 904.5,302.7 903.5,302.7 903.5,303.3 902.5,303.3 902.5,305.1 901.5,305.1 901.5,306.6 900.5,306.6 900.5,319.2 899.5,319.2 899.5,318.7 898.5,318.7 898.5,318.1 897.5,318.1 897.5,318.5 896.5,318.5 896.5,318.9 895.5,318.9 895.5,301.5 894.5,301.5 894.5,307.5 893.5,307.5 893.5,311.2 892.5,311.2 892.5,313.1 891.5,313.1 891.5,313.9 890.5,313.9 890.5,315.6 889.5,315.6 889.5,315.7 888.5,315.7 888.5,306.5 887.5,306.5 887.5,299.5 886.5,299.5 886.5,300.1 885.5,300.1 885.5,300.5 884.5,300.5 884.5,306.8 883.5,306.8 883.5,314.6 882.5,314.6 882.5,308.7 881.5,308.7 881.5,304.4 880.5,304.4 880.5,299.9 879.5,299.9 879.5,297.5 878.5,297.5 878.5,297.6 876.5,297.6 876.5,297.7 873.5,297.7 873.5,297.8 872.5,297.8 872.5,301.3 871.5,301.3 871.5,305.6 870.5,305.6 870.5,309.6 869.5,309.6 869.5,314.8 868.5,314.8 868.5,318.5 867.5,318.5 867.5,318.1 866.5,318.1 866.5,318.4 865.5,318.4 865.5,318.3 864.5,318.3 864.5,318.2 863.5,318.2 863.5,318.7 862.5,318.7 862.5,318.4 861.5,318.4 861.5,318.2 860.5,318.2 860.5,297.1 849.5,297.1Z" fill="#4094fd"/>
<text transform="translate(858.6,262.1) scale(1.06,1)" class="rl">Ba...cal</text>
<rect x="849.1" y="341" width="79.1" height="89" rx="4.5" fill="#07346f"/>
<path d="M849.5,394.9 860.5,394.9 860.5,372 861.5,372 861.5,372.2 862.5,372.2 862.5,371.7 863.5,371.7 863.5,372.3 864.5,372.3 864.5,372.1 865.5,372.1 865.5,371.4 866.5,371.4 866.5,372.1 867.5,372.1 867.5,371.7 868.5,371.7 868.5,376 869.5,376 869.5,381.1 870.5,381.1 870.5,386 871.5,386 871.5,390.5 872.5,390.5 872.5,394.2 873.5,394.2 873.5,394.3 876.5,394.3 876.5,394.4 878.5,394.4 878.5,394.5 879.5,394.5 879.5,392.1 880.5,392.1 880.5,386.8 881.5,386.8 881.5,381.4 882.5,381.4 882.5,375.4 883.5,375.4 883.5,383.3 884.5,383.3 884.5,391.5 885.5,391.5 885.5,392 886.5,392 886.5,392.4 887.5,392.4 887.5,383.2 888.5,383.2 888.5,374.3 890.5,374.3 890.5,375.8 891.5,375.8 891.5,374.8 892.5,374.8 892.5,379.7 893.5,379.7 893.5,385 894.5,385 894.5,390.7 895.5,390.7 895.5,372.1 896.5,372.1 896.5,371.7 898.5,371.7 898.5,371.9 899.5,371.9 899.5,371.6 900.5,371.6 900.5,384.4 901.5,384.4 901.5,385.5 902.5,385.5 902.5,386.2 903.5,386.2 903.5,388.1 904.5,388.1 904.5,389.7 905.5,389.7 905.5,390.3 906.5,390.3 906.5,389.6 907.5,389.6 907.5,383.3 908.5,383.3 908.5,372.3 909.5,372.3 909.5,371.8 910.5,371.8 910.5,372.2 911.5,372.2 911.5,371.8 912.5,371.8 912.5,372.1 913.5,372.1 913.5,371.8 914.5,371.8 914.5,371.9 915.5,371.9 915.5,371.4 916.5,371.4 916.5,371.7 917.5,371.7 917.5,372.7 918.5,372.7 918.5,375.2 919.5,375.2 919.5,381.4 920.5,381.4 920.5,385.5 921.5,385.5 921.5,389.6 922.5,389.6 922.5,392.7 923.5,392.7 923.5,394.9 927.5,394.9 L927.5,396.5 923.5,396.5 923.5,398.7 922.5,398.7 922.5,401.9 921.5,401.9 921.5,405.7 920.5,405.7 920.5,408.9 919.5,408.9 919.5,414.8 918.5,414.8 918.5,417.8 917.5,417.8 917.5,417.6 916.5,417.6 916.5,417.8 915.5,417.8 915.5,418.5 914.5,418.5 914.5,417.7 913.5,417.7 913.5,418.3 912.5,418.3 912.5,417.6 911.5,417.6 911.5,418.6 910.5,418.6 910.5,418.3 909.5,418.3 909.5,417.5 908.5,417.5 908.5,407.3 907.5,407.3 907.5,402 906.5,402 906.5,401.3 905.5,401.3 905.5,401.2 904.5,401.2 904.5,402.1 903.5,402.1 903.5,402.7 902.5,402.7 902.5,404.5 901.5,404.5 901.5,406 900.5,406 900.5,418.6 899.5,418.6 899.5,418.1 898.5,418.1 898.5,417.5 897.5,417.5 897.5,417.9 896.5,417.9 896.5,418.3 895.5,418.3 895.5,400.9 894.5,400.9 894.5,406.9 893.5,406.9 893.5,410.6 892.5,410.6 892.5,412.5 891.5,412.5 891.5,413.3 890.5,413.3 890.5,415 889.5,415 889.5,415.1 888.5,415.1 888.5,405.9 887.5,405.9 887.5,398.9 886.5,398.9 886.5,399.5 885.5,399.5 885.5,399.9 884.5,399.9 884.5,406.2 883.5,406.2 883.5,414 882.5,414 882.5,408.1 881.5,408.1 881.5,403.8 880.5,403.8 880.5,399.3 879.5,399.3 879.5,396.9 878.5,396.9 878.5,397 876.5,397 876.5,397.1 873.5,397.1 873.5,397.2 872.5,397.2 872.5,400.7 871.5,400.7 871.5,405 870.5,405 870.5,409 869.5,409 869.5,414.2 868.5,414.2 868.5,417.9 867.5,417.9 867.5,417.5 866.5,417.5 866.5,417.8 865.5,417.8 865.5,417.7 864.5,417.7 864.5,417.6 863.5,417.6 863.5,418.1 862.5,418.1 862.5,417.8 861.5,417.8 861.5,417.6 860.5,417.6 860.5,396.5 849.5,396.5Z" fill="#4094fd"/>
<text transform="translate(858.6,361.5) scale(1.06,1)" class="rl">Ba...cal</text>
<rect x="908.1" y="440.4" width="56.7" height="89" rx="4.5" fill="#07346f"/>
<path d="M908.5,494.3 916.5,494.3 916.5,492 917.5,492 917.5,488.8 918.5,488.8 918.5,484.8 919.5,484.8 919.5,471.4 920.5,471.4 920.5,472 921.5,472 921.5,472.1 922.5,472.1 922.5,471.4 923.5,471.4 923.5,471.8 924.5,471.8 924.5,471.3 925.5,471.3 925.5,471.6 926.5,471.6 926.5,471.3 927.5,471.3 927.5,482.8 928.5,482.8 928.5,471.6 929.5,471.6 929.5,472.1 930.5,472.1 930.5,472 932.5,472 932.5,481.6 933.5,481.6 933.5,487.5 934.5,487.5 934.5,487.2 935.5,487.2 935.5,478.4 936.5,478.4 936.5,471.9 937.5,471.9 937.5,471.6 938.5,471.6 938.5,471.7 939.5,471.7 939.5,472.1 940.5,472.1 940.5,471.7 941.5,471.7 941.5,471.3 942.5,471.3 942.5,471.4 943.5,471.4 943.5,471.7 945.5,471.7 945.5,473.4 946.5,473.4 946.5,478.2 947.5,478.2 947.5,487.4 948.5,487.4 948.5,493.1 949.5,493.1 949.5,494.2 957.5,494.2 957.5,494.3 964.5,494.3 L964.5,495.9 957.5,495.9 957.5,496 949.5,496 949.5,497.1 948.5,497.1 948.5,502.3 947.5,502.3 947.5,510.2 946.5,510.2 946.5,515.3 945.5,515.3 945.5,517.6 944.5,517.6 944.5,517.8 943.5,517.8 943.5,517.3 942.5,517.3 942.5,517.1 941.5,517.1 941.5,517.5 940.5,517.5 940.5,517.2 939.5,517.2 939.5,517.5 938.5,517.5 938.5,517.2 937.5,517.2 937.5,517.4 936.5,517.4 936.5,511 935.5,511 935.5,502.9 934.5,502.9 934.5,502.1 933.5,502.1 933.5,507.6 932.5,507.6 932.5,517.2 931.5,517.2 931.5,517.6 930.5,517.6 930.5,517.4 929.5,517.4 929.5,517.8 928.5,517.8 928.5,517.4 927.5,517.4 927.5,517.8 926.5,517.8 926.5,517.4 924.5,517.4 924.5,517.1 923.5,517.1 923.5,517.3 922.5,517.3 922.5,517.7 921.5,517.7 921.5,517.4 920.5,517.4 920.5,517.8 919.5,517.8 919.5,505.5 918.5,505.5 918.5,501.3 917.5,501.3 917.5,498.1 916.5,498.1 916.5,495.9 908.5,495.9Z" fill="#4094fd"/>
<text transform="translate(917.3,460.9) scale(1.06,1)" class="rl">F...e</text>
<rect x="448" y="544.3" width="828.4" height="80" fill="#07346f"/>
<rect x="448" y="539.8" width="413.2" height="89" rx="4.5" fill="#07346f"/>
<rect x="861.2" y="539.8" width="415.2" height="89" rx="4.5" fill="#07346f"/>
<rect x="1278" y="539.8" width="206.3" height="89" rx="4.5" fill="#07346f"/>
<path d="M447.5,588 448.5,588 448.5,591.4 449.5,591.4 449.5,592.9 450.5,592.9 450.5,593.3 451.5,593.3 451.5,593.7 457.5,593.7 457.5,588.3 458.5,588.3 458.5,577.1 459.5,577.1 459.5,579.3 460.5,579.3 460.5,582 461.5,582 461.5,584.3 462.5,584.3 462.5,586.8 463.5,586.8 463.5,588.5 464.5,588.5 464.5,590.5 465.5,590.5 465.5,592.1 466.5,592.1 466.5,592.9 467.5,592.9 467.5,593 468.5,593 468.5,593.5 469.5,593.5 469.5,593.7 470.5,593.7 470.5,588.3 471.5,588.3 471.5,577.1 472.5,577.1 472.5,580.5 473.5,580.5 473.5,581.6 474.5,581.6 474.5,584.6 475.5,584.6 475.5,586.2 476.5,586.2 476.5,588.8 477.5,588.8 477.5,590.5 478.5,590.5 478.5,592.3 479.5,592.3 479.5,592.9 480.5,592.9 480.5,593 481.5,593 481.5,593.6 482.5,593.6 482.5,592.3 483.5,592.3 483.5,590.4 484.5,590.4 484.5,588.8 485.5,588.8 485.5,589.9 486.5,589.9 486.5,591.7 487.5,591.7 487.5,593.7 492.5,593.7 492.5,591.3 493.5,591.3 493.5,588.2 494.5,588.2 494.5,589.7 496.5,589.7 496.5,587 497.5,587 497.5,586.4 498.5,586.4 498.5,589 499.5,589 499.5,591.9 500.5,591.9 500.5,593.7 504.5,593.7 504.5,593.5 505.5,593.5 505.5,591 506.5,591 506.5,590.1 507.5,590.1 507.5,592.3 508.5,592.3 508.5,593.7 509.5,593.7 509.5,588.3 510.5,588.3 510.5,577.3 511.5,577.3 511.5,579.3 512.5,579.3 512.5,582.1 513.5,582.1 513.5,583.9 514.5,583.9 514.5,586.8 515.5,586.8 515.5,588.6 516.5,588.6 516.5,590.6 517.5,590.6 517.5,592.3 518.5,592.3 518.5,592.9 519.5,592.9 519.5,593 520.5,593 520.5,593.6 521.5,593.6 521.5,593.7 522.5,593.7 522.5,588.3 523.5,588.3 523.5,578.6 524.5,578.6 524.5,579.5 525.5,579.5 525.5,581.7 526.5,581.7 526.5,584.5 527.5,584.5 527.5,586.9 528.5,586.9 528.5,588.6 529.5,588.6 529.5,590.5 530.5,590.5 530.5,592.3 531.5,592.3 531.5,592.9 532.5,592.9 532.5,593 533.5,593 533.5,593.6 534.5,593.6 534.5,593.3 535.5,593.3 535.5,591.1 536.5,591.1 536.5,589.2 537.5,589.2 537.5,590.6 538.5,590.6 538.5,592.7 539.5,592.7 539.5,593.7 543.5,593.7 543.5,592.8 544.5,592.8 544.5,590.8 545.5,590.8 545.5,591.1 546.5,591.1 546.5,593.2 547.5,593.2 547.5,593.7 548.5,593.7 548.5,588.3 549.5,588.3 549.5,578.4 550.5,578.4 550.5,580.2 551.5,580.2 551.5,582 552.5,582 552.5,584.8 553.5,584.8 553.5,586.7 554.5,586.7 554.5,588.7 555.5,588.7 555.5,590.5 556.5,590.5 556.5,592.4 557.5,592.4 557.5,592.9 558.5,592.9 558.5,593.1 559.5,593.1 559.5,593.6 560.5,593.6 560.5,593.7 561.5,593.7 561.5,588.3 562.5,588.3 562.5,578 563.5,578 563.5,580.4 564.5,580.4 564.5,582.9 565.5,582.9 565.5,584.5 566.5,584.5 566.5,586.9 567.5,586.9 567.5,588.5 568.5,588.5 568.5,590.7 569.5,590.7 569.5,592.2 570.5,592.2 570.5,592.9 571.5,592.9 571.5,593.1 572.5,593.1 572.5,593.6 573.5,593.6 573.5,593.7 574.5,593.7 574.5,588.3 575.5,588.3 575.5,577.8 576.5,577.8 576.5,580.6 577.5,580.6 577.5,583.8 578.5,583.8 578.5,587.6 579.5,587.6 579.5,590.1 580.5,590.1 580.5,592.5 581.5,592.5 581.5,592.9 582.5,592.9 582.5,593.4 583.5,593.4 583.5,593.7 586.5,593.7 586.5,592.1 587.5,592.1 587.5,590.3 588.5,590.3 588.5,588.6 589.5,588.6 589.5,590.1 590.5,590.1 590.5,591.9 591.5,591.9 591.5,593.7 596.5,593.7 596.5,591 597.5,591 597.5,587.9 598.5,587.9 598.5,590 599.5,590 599.5,589.4 600.5,589.4 600.5,586.8 601.5,586.8 601.5,586.6 602.5,586.6 602.5,589.2 603.5,589.2 603.5,592.2 604.5,592.2 604.5,593.7 608.5,593.7 608.5,593.2 609.5,593.2 609.5,590.8 610.5,590.8 610.5,590.3 611.5,590.3 611.5,592.5 612.5,592.5 612.5,593.7 613.5,593.7 613.5,588.3 614.5,588.3 614.5,577.3 615.5,577.3 615.5,580.4 616.5,580.4 616.5,582.8 617.5,582.8 617.5,584.5 618.5,584.5 618.5,586.4 619.5,586.4 619.5,588.8 620.5,588.8 620.5,590.6 621.5,590.6 621.5,592.4 622.5,592.4 622.5,592.9 623.5,592.9 623.5,593.1 624.5,593.1 624.5,593.6 625.5,593.6 625.5,593.7 626.5,593.7 626.5,588.3 627.5,588.3 627.5,578.5 628.5,578.5 628.5,580.3 629.5,580.3 629.5,583 630.5,583 630.5,585.2 631.5,585.2 631.5,586.8 632.5,586.8 632.5,589.1 633.5,589.1 633.5,590.9 634.5,590.9 634.5,592.5 635.5,592.5 635.5,592.9 636.5,592.9 636.5,593.1 637.5,593.1 637.5,593.6 638.5,593.6 638.5,593 639.5,593 639.5,590.9 640.5,590.9 640.5,589 641.5,589 641.5,590.8 642.5,590.8 642.5,593 643.5,593 643.5,593.7 647.5,593.7 647.5,592.6 648.5,592.6 648.5,590.6 649.5,590.6 649.5,591.3 650.5,591.3 650.5,593.4 651.5,593.4 651.5,593.7 652.5,593.7 652.5,588.3 653.5,588.3 653.5,578.2 654.5,578.2 654.5,580.5 655.5,580.5 655.5,583.1 656.5,583.1 656.5,584.8 657.5,584.8 657.5,586.5 658.5,586.5 658.5,589.1 659.5,589.1 659.5,590.8 660.5,590.8 660.5,592.4 661.5,592.4 661.5,592.9 662.5,592.9 662.5,593.1 663.5,593.1 663.5,593.6 664.5,593.6 664.5,593.7 665.5,593.7 665.5,588.3 666.5,588.3 666.5,577.8 667.5,577.8 667.5,580 668.5,580 668.5,583 669.5,583 669.5,584.4 670.5,584.4 670.5,586.5 671.5,586.5 671.5,589.1 672.5,589.1 672.5,590.6 673.5,590.6 673.5,592.6 674.5,592.6 674.5,592.9 675.5,592.9 675.5,593.1 676.5,593.1 676.5,593.7 678.5,593.7 678.5,588.3 679.5,588.3 679.5,578.4 680.5,578.4 680.5,580.1 681.5,580.1 681.5,583.2 682.5,583.2 682.5,585.1 683.5,585.1 683.5,587.2 684.5,587.2 684.5,589 685.5,589 685.5,590.6 686.5,590.6 686.5,592.5 687.5,592.5 687.5,592.9 688.5,592.9 688.5,593.1 689.5,593.1 689.5,593.7 690.5,593.7 690.5,591.9 691.5,591.9 691.5,590.1 692.5,590.1 692.5,588.6 693.5,588.6 693.5,590.2 694.5,590.2 694.5,592.1 695.5,592.1 695.5,593.7 700.5,593.7 700.5,590.7 701.5,590.7 701.5,587.7 702.5,587.7 702.5,590.3 703.5,590.3 703.5,589.1 704.5,589.1 704.5,586.5 705.5,586.5 705.5,586.9 706.5,586.9 706.5,589.5 707.5,589.5 707.5,592.6 708.5,592.6 708.5,593.7 712.5,593.7 712.5,592.9 713.5,592.9 713.5,590.6 714.5,590.6 714.5,590.5 715.5,590.5 715.5,592.8 716.5,592.8 716.5,593.7 717.5,593.7 717.5,588.3 718.5,588.3 718.5,578.5 719.5,578.5 719.5,579.8 720.5,579.8 720.5,582.6 721.5,582.6 721.5,584.4 722.5,584.4 722.5,586.9 723.5,586.9 723.5,588.9 724.5,588.9 724.5,590.7 725.5,590.7 725.5,592.5 726.5,592.5 726.5,592.9 727.5,592.9 727.5,593.1 728.5,593.1 728.5,593.7 730.5,593.7 730.5,588.3 731.5,588.3 731.5,577.9 732.5,577.9 732.5,579.6 733.5,579.6 733.5,582.8 734.5,582.8 734.5,584.9 735.5,584.9 735.5,587.3 736.5,587.3 736.5,589 737.5,589 737.5,590.8 738.5,590.8 738.5,592.6 739.5,592.6 739.5,592.9 740.5,592.9 740.5,593.2 741.5,593.2 741.5,593.7 742.5,593.7 742.5,592.8 743.5,592.8 743.5,590.7 744.5,590.7 744.5,589.2 745.5,589.2 745.5,591 746.5,591 746.5,593.2 747.5,593.2 747.5,593.7 751.5,593.7 751.5,592.4 752.5,592.4 752.5,590.4 753.5,590.4 753.5,591.5 754.5,591.5 754.5,593.7 756.5,593.7 756.5,588.3 757.5,588.3 757.5,578.6 758.5,578.6 758.5,582.6 759.5,582.6 759.5,587.3 760.5,587.3 760.5,590.7 761.5,590.7 761.5,592.9 762.5,592.9 762.5,593.3 763.5,593.3 763.5,593.7 769.5,593.7 769.5,592.4 770.5,592.4 770.5,588.7 771.5,588.7 771.5,590.6 772.5,590.6 772.5,592.3 773.5,592.3 773.5,592.9 774.5,592.9 774.5,593 775.5,593 775.5,593.5 776.5,593.5 776.5,593.7 782.5,593.7 782.5,588.3 783.5,588.3 783.5,577.7 784.5,577.7 784.5,579.8 785.5,579.8 785.5,583 786.5,583 786.5,584.6 787.5,584.6 787.5,587.3 788.5,587.3 788.5,589.1 789.5,589.1 789.5,590.9 790.5,590.9 790.5,592.7 791.5,592.7 791.5,592.9 792.5,592.9 792.5,593.2 793.5,593.2 793.5,593.7 794.5,593.7 794.5,591.7 795.5,591.7 795.5,589.9 796.5,589.9 796.5,588.7 797.5,588.7 797.5,590.4 798.5,590.4 798.5,592.3 799.5,592.3 799.5,593.7 804.5,593.7 804.5,590.3 805.5,590.3 805.5,587.6 806.5,587.6 806.5,590.6 807.5,590.6 807.5,588.9 808.5,588.9 808.5,586.3 809.5,586.3 809.5,587.1 810.5,587.1 810.5,589.8 811.5,589.8 811.5,593 812.5,593 812.5,593.7 816.5,593.7 816.5,592.6 817.5,592.6 817.5,590.4 818.5,590.4 818.5,590.7 819.5,590.7 819.5,593.1 820.5,593.1 820.5,593.7 821.5,593.7 821.5,588.3 822.5,588.3 822.5,578.2 823.5,578.2 823.5,581.1 824.5,581.1 824.5,583.1 825.5,583.1 825.5,585.2 826.5,585.2 826.5,587 827.5,587 827.5,589.1 828.5,589.1 828.5,591.2 829.5,591.2 829.5,592.8 830.5,592.8 830.5,592.9 831.5,592.9 831.5,593.2 832.5,593.2 832.5,593.7 834.5,593.7 834.5,588.3 835.5,588.3 835.5,578.6 836.5,578.6 836.5,581.1 837.5,581.1 837.5,583.4 838.5,583.4 838.5,585.5 839.5,585.5 839.5,587.4 840.5,587.4 840.5,589 841.5,589 841.5,591.1 842.5,591.1 842.5,592.7 843.5,592.7 843.5,592.9 844.5,592.9 844.5,593.2 845.5,593.2 845.5,593.7 846.5,593.7 846.5,592.5 847.5,592.5 847.5,590.5 848.5,590.5 848.5,589.3 849.5,589.3 849.5,591.2 850.5,591.2 850.5,593.5 851.5,593.5 851.5,593.7 855.5,593.7 855.5,592.2 856.5,592.2 856.5,590.2 857.5,590.2 857.5,591.7 858.5,591.7 858.5,593.7 860.5,593.7 860.5,589.6 861.5,589.6 L861.5,599.3 860.5,599.3 860.5,595.3 858.5,595.3 858.5,597.3 857.5,597.3 857.5,598.8 856.5,598.8 856.5,596.8 855.5,596.8 855.5,595.3 851.5,595.3 851.5,595.5 850.5,595.5 850.5,597.8 849.5,597.8 849.5,599.7 848.5,599.7 848.5,598.5 847.5,598.5 847.5,596.5 846.5,596.5 846.5,595.3 845.5,595.3 845.5,595.8 844.5,595.8 844.5,596.1 843.5,596.1 843.5,596.2 842.5,596.2 842.5,597.8 841.5,597.8 841.5,599.9 840.5,599.9 840.5,601.4 839.5,601.4 839.5,603.3 838.5,603.3 838.5,605.3 837.5,605.3 837.5,607.5 836.5,607.5 836.5,609.9 835.5,609.9 835.5,600.5 834.5,600.5 834.5,595.3 832.5,595.3 832.5,595.8 831.5,595.8 831.5,596.1 830.5,596.1 830.5,596.2 829.5,596.2 829.5,597.7 828.5,597.7 828.5,599.7 827.5,599.7 827.5,601.8 826.5,601.8 826.5,603.5 825.5,603.5 825.5,605.6 824.5,605.6 824.5,607.5 823.5,607.5 823.5,610.3 822.5,610.3 822.5,600.5 821.5,600.5 821.5,595.3 820.5,595.3 820.5,595.9 819.5,595.9 819.5,598.3 818.5,598.3 818.5,598.6 817.5,598.6 817.5,596.4 816.5,596.4 816.5,595.3 812.5,595.3 812.5,596 811.5,596 811.5,599.2 810.5,599.2 810.5,601.9 809.5,601.9 809.5,602.7 808.5,602.7 808.5,600.1 807.5,600.1 807.5,598.4 806.5,598.4 806.5,601.4 805.5,601.4 805.5,598.7 804.5,598.7 804.5,595.3 799.5,595.3 799.5,596.7 798.5,596.7 798.5,598.6 797.5,598.6 797.5,600.3 796.5,600.3 796.5,599.1 795.5,599.1 795.5,597.3 794.5,597.3 794.5,595.3 793.5,595.3 793.5,595.8 792.5,595.8 792.5,596.1 791.5,596.1 791.5,596.2 790.5,596.2 790.5,598 789.5,598 789.5,599.7 788.5,599.7 788.5,601.5 787.5,601.5 787.5,604.1 786.5,604.1 786.5,605.6 785.5,605.6 785.5,608.7 784.5,608.7 784.5,610.8 783.5,610.8 783.5,600.5 782.5,600.5 782.5,595.3 776.5,595.3 776.5,595.5 775.5,595.5 775.5,596 774.5,596 774.5,596.1 773.5,596.1 773.5,596.6 772.5,596.6 772.5,598.2 771.5,598.2 771.5,600.1 770.5,600.1 770.5,596.5 769.5,596.5 769.5,595.3 763.5,595.3 763.5,595.7 762.5,595.7 762.5,596.1 761.5,596.1 761.5,598.2 760.5,598.2 760.5,601.5 759.5,601.5 759.5,606 758.5,606 758.5,609.9 757.5,609.9 757.5,600.5 756.5,600.5 756.5,595.3 754.5,595.3 754.5,597.5 753.5,597.5 753.5,598.6 752.5,598.6 752.5,596.6 751.5,596.6 751.5,595.3 747.5,595.3 747.5,595.8 746.5,595.8 746.5,598 745.5,598 745.5,599.8 744.5,599.8 744.5,598.3 743.5,598.3 743.5,596.2 742.5,596.2 742.5,595.3 741.5,595.3 741.5,595.8 740.5,595.8 740.5,596.1 739.5,596.1 739.5,596.3 738.5,596.3 738.5,598.1 737.5,598.1 737.5,599.8 736.5,599.8 736.5,601.5 735.5,601.5 735.5,603.8 734.5,603.8 734.5,605.9 733.5,605.9 733.5,608.9 732.5,608.9 732.5,610.6 731.5,610.6 731.5,600.5 730.5,600.5 730.5,595.3 728.5,595.3 728.5,595.8 727.5,595.8 727.5,596.1 726.5,596.1 726.5,596.4 725.5,596.4 725.5,598.2 724.5,598.2 724.5,599.9 723.5,599.9 723.5,601.9 722.5,601.9 722.5,604.3 721.5,604.3 721.5,606 720.5,606 720.5,608.7 719.5,608.7 719.5,610 718.5,610 718.5,600.5 717.5,600.5 717.5,595.3 716.5,595.3 716.5,596.2 715.5,596.2 715.5,598.5 714.5,598.5 714.5,598.4 713.5,598.4 713.5,596.1 712.5,596.1 712.5,595.3 708.5,595.3 708.5,596.4 707.5,596.4 707.5,599.5 706.5,599.5 706.5,602.1 705.5,602.1 705.5,602.5 704.5,602.5 704.5,599.9 703.5,599.9 703.5,598.7 702.5,598.7 702.5,601.3 701.5,601.3 701.5,598.3 700.5,598.3 700.5,595.3 695.5,595.3 695.5,596.9 694.5,596.9 694.5,598.8 693.5,598.8 693.5,600.4 692.5,600.4 692.5,598.9 691.5,598.9 691.5,597.1 690.5,597.1 690.5,595.3 689.5,595.3 689.5,595.8 688.5,595.8 688.5,596.1 687.5,596.1 687.5,596.5 686.5,596.5 686.5,598.3 685.5,598.3 685.5,599.8 684.5,599.8 684.5,601.6 683.5,601.6 683.5,603.6 682.5,603.6 682.5,605.5 681.5,605.5 681.5,608.4 680.5,608.4 680.5,610.1 679.5,610.1 679.5,600.5 678.5,600.5 678.5,595.3 676.5,595.3 676.5,595.8 675.5,595.8 675.5,596.1 674.5,596.1 674.5,596.4 673.5,596.4 673.5,598.3 672.5,598.3 672.5,599.7 671.5,599.7 671.5,602.3 670.5,602.3 670.5,604.3 669.5,604.3 669.5,605.7 668.5,605.7 668.5,608.6 667.5,608.6 667.5,610.7 666.5,610.7 666.5,600.5 665.5,600.5 665.5,595.3 663.5,595.3 663.5,595.8 662.5,595.8 662.5,596.1 661.5,596.1 661.5,596.6 660.5,596.6 660.5,598.1 659.5,598.1 659.5,599.7 658.5,599.7 658.5,602.3 657.5,602.3 657.5,603.9 656.5,603.9 656.5,605.6 655.5,605.6 655.5,608 654.5,608 654.5,610.3 653.5,610.3 653.5,600.5 652.5,600.5 652.5,595.3 651.5,595.3 651.5,595.6 650.5,595.6 650.5,597.7 649.5,597.7 649.5,598.4 648.5,598.4 648.5,596.4 647.5,596.4 647.5,595.3 643.5,595.3 643.5,596 642.5,596 642.5,598.2 641.5,598.2 641.5,600 640.5,600 640.5,598.1 639.5,598.1 639.5,596 638.5,596 638.5,595.3 637.5,595.3 637.5,595.9 636.5,595.9 636.5,596.1 635.5,596.1 635.5,596.5 634.5,596.5 634.5,598 633.5,598 633.5,599.7 632.5,599.7 632.5,602 631.5,602 631.5,603.5 630.5,603.5 630.5,605.7 629.5,605.7 629.5,608.3 628.5,608.3 628.5,610.1 627.5,610.1 627.5,600.5 626.5,600.5 626.5,595.3 624.5,595.3 624.5,595.9 623.5,595.9 623.5,596.1 622.5,596.1 622.5,596.6 621.5,596.6 621.5,598.2 620.5,598.2 620.5,600 619.5,600 619.5,602.4 618.5,602.4 618.5,604.2 617.5,604.2 617.5,605.8 616.5,605.8 616.5,608.1 615.5,608.1 615.5,611.2 614.5,611.2 614.5,600.5 613.5,600.5 613.5,595.3 612.5,595.3 612.5,596.5 611.5,596.5 611.5,598.7 610.5,598.7 610.5,598.2 609.5,598.2 609.5,595.8 608.5,595.8 608.5,595.3 604.5,595.3 604.5,596.8 603.5,596.8 603.5,599.8 602.5,599.8 602.5,602.4 601.5,602.4 601.5,602.2 600.5,602.2 600.5,599.6 599.5,599.6 599.5,599 598.5,599 598.5,601.1 597.5,601.1 597.5,598 596.5,598 596.5,595.3 591.5,595.3 591.5,597.1 590.5,597.1 590.5,598.9 589.5,598.9 589.5,600.4 588.5,600.4 588.5,598.7 587.5,598.7 587.5,596.9 586.5,596.9 586.5,595.3 583.5,595.3 583.5,595.6 582.5,595.6 582.5,596.1 581.5,596.1 581.5,596.4 580.5,596.4 580.5,598.7 579.5,598.7 579.5,601.2 578.5,601.2 578.5,604.8 577.5,604.8 577.5,608 576.5,608 576.5,610.7 575.5,610.7 575.5,600.5 574.5,600.5 574.5,595.3 573.5,595.3 573.5,595.4 572.5,595.4 572.5,595.9 571.5,595.9 571.5,596.1 570.5,596.1 570.5,596.7 569.5,596.7 569.5,598.2 568.5,598.2 568.5,600.3 567.5,600.3 567.5,601.9 566.5,601.9 566.5,604.2 565.5,604.2 565.5,605.8 564.5,605.8 564.5,608.2 563.5,608.2 563.5,610.5 562.5,610.5 562.5,600.5 561.5,600.5 561.5,595.3 560.5,595.3 560.5,595.4 559.5,595.4 559.5,595.9 558.5,595.9 558.5,596.1 557.5,596.1 557.5,596.6 556.5,596.6 556.5,598.4 555.5,598.4 555.5,600.1 554.5,600.1 554.5,602.1 553.5,602.1 553.5,603.9 552.5,603.9 552.5,606.6 551.5,606.6 551.5,608.4 550.5,608.4 550.5,610.1 549.5,610.1 549.5,600.5 548.5,600.5 548.5,595.3 547.5,595.3 547.5,595.8 546.5,595.8 546.5,597.9 545.5,597.9 545.5,598.2 544.5,598.2 544.5,596.2 543.5,596.2 543.5,595.3 539.5,595.3 539.5,596.3 538.5,596.3 538.5,598.4 537.5,598.4 537.5,599.8 536.5,599.8 536.5,597.9 535.5,597.9 535.5,595.7 534.5,595.7 534.5,595.4 533.5,595.4 533.5,595.9 532.5,595.9 532.5,596.1 531.5,596.1 531.5,596.6 530.5,596.6 530.5,598.4 529.5,598.4 529.5,600.2 528.5,600.2 528.5,601.8 527.5,601.8 527.5,604.2 526.5,604.2 526.5,606.9 525.5,606.9 525.5,609 524.5,609 524.5,609.9 523.5,609.9 523.5,600.5 522.5,600.5 522.5,595.3 521.5,595.3 521.5,595.4 520.5,595.4 520.5,595.9 519.5,595.9 519.5,596.1 518.5,596.1 518.5,596.6 517.5,596.6 517.5,598.3 516.5,598.3 516.5,600.2 515.5,600.2 515.5,602 514.5,602 514.5,604.8 513.5,604.8 513.5,606.6 512.5,606.6 512.5,609.3 511.5,609.3 511.5,611.2 510.5,611.2 510.5,600.5 509.5,600.5 509.5,595.3 508.5,595.3 508.5,596.7 507.5,596.7 507.5,598.9 506.5,598.9 506.5,598 505.5,598 505.5,595.5 504.5,595.5 504.5,595.3 500.5,595.3 500.5,597.1 499.5,597.1 499.5,600 498.5,600 498.5,602.6 497.5,602.6 497.5,602 496.5,602 496.5,599.3 494.5,599.3 494.5,600.8 493.5,600.8 493.5,597.7 492.5,597.7 492.5,595.3 487.5,595.3 487.5,597.3 486.5,597.3 486.5,599.1 485.5,599.1 485.5,600.2 484.5,600.2 484.5,598.6 483.5,598.6 483.5,596.7 482.5,596.7 482.5,595.4 481.5,595.4 481.5,595.9 480.5,595.9 480.5,596.1 479.5,596.1 479.5,596.7 478.5,596.7 478.5,598.4 477.5,598.4 477.5,600.1 476.5,600.1 476.5,602.5 475.5,602.5 475.5,604.1 474.5,604.1 474.5,607 473.5,607 473.5,608.1 472.5,608.1 472.5,611.3 471.5,611.3 471.5,600.5 470.5,600.5 470.5,595.3 469.5,595.3 469.5,595.4 468.5,595.4 468.5,595.9 467.5,595.9 467.5,596.1 466.5,596.1 466.5,596.8 465.5,596.8 465.5,598.3 464.5,598.3 464.5,600.3 463.5,600.3 463.5,602 462.5,602 462.5,604.4 461.5,604.4 461.5,606.6 460.5,606.6 460.5,609.3 459.5,609.3 459.5,611.4 458.5,611.4 458.5,600.5 457.5,600.5 457.5,595.3 451.5,595.3 451.5,595.6 450.5,595.6 450.5,596.1 449.5,596.1 449.5,597.5 448.5,597.5 448.5,600.8 447.5,600.8Z" fill="#4094fd"/>
<path d="M861.5,581.6 862.5,581.6 862.5,585.6 863.5,585.6 863.5,589.6 864.5,589.6 864.5,592.8 865.5,592.8 865.5,593 866.5,593 866.5,593.5 867.5,593.5 867.5,593.7 873.5,593.7 873.5,588.3 874.5,588.3 874.5,578.3 875.5,578.3 875.5,581.2 876.5,581.2 876.5,583.1 877.5,583.1 877.5,585.5 878.5,585.5 878.5,587.2 879.5,587.2 879.5,589.1 880.5,589.1 880.5,591.1 881.5,591.1 881.5,592.7 882.5,592.7 882.5,592.9 883.5,592.9 883.5,593.2 884.5,593.2 884.5,593.7 886.5,593.7 886.5,588.3 887.5,588.3 887.5,577.8 888.5,577.8 888.5,581.2 889.5,581.2 889.5,583.1 890.5,583.1 890.5,585.6 891.5,585.6 891.5,587.4 892.5,587.4 892.5,589.5 893.5,589.5 893.5,591.2 894.5,591.2 894.5,592.9 896.5,592.9 896.5,593.2 897.5,593.2 897.5,593.7 898.5,593.7 898.5,591.5 899.5,591.5 899.5,589.8 900.5,589.8 900.5,588.9 901.5,588.9 901.5,590.6 902.5,590.6 902.5,592.5 903.5,592.5 903.5,593.7 907.5,593.7 907.5,593.6 908.5,593.6 908.5,590 909.5,590 909.5,587.9 910.5,587.9 910.5,591 911.5,591 911.5,588.6 912.5,588.6 912.5,586.1 913.5,586.1 913.5,587.4 914.5,587.4 914.5,590.1 915.5,590.1 915.5,593.3 916.5,593.3 916.5,593.7 920.5,593.7 920.5,592.4 921.5,592.4 921.5,590.2 922.5,590.2 922.5,590.9 923.5,590.9 923.5,593.3 924.5,593.3 924.5,593.7 925.5,593.7 925.5,588.3 926.5,588.3 926.5,578.5 927.5,578.5 927.5,581.2 928.5,581.2 928.5,583.6 929.5,583.6 929.5,585.7 930.5,585.7 930.5,587.2 931.5,587.2 931.5,589.2 932.5,589.2 932.5,591.2 933.5,591.2 933.5,592.9 935.5,592.9 935.5,593.3 936.5,593.3 936.5,593.7 938.5,593.7 938.5,588.3 939.5,588.3 939.5,578.3 940.5,578.3 940.5,581 941.5,581 941.5,583 942.5,583 942.5,585.4 943.5,585.4 943.5,587.3 944.5,587.3 944.5,589.2 945.5,589.2 945.5,591.3 946.5,591.3 946.5,592.9 948.5,592.9 948.5,593.3 949.5,593.3 949.5,593.7 950.5,593.7 950.5,592.3 951.5,592.3 951.5,590.3 952.5,590.3 952.5,589.5 953.5,589.5 953.5,591.4 954.5,591.4 954.5,593.7 959.5,593.7 959.5,592 960.5,592 960.5,590 961.5,590 961.5,591.9 962.5,591.9 962.5,593.7 964.5,593.7 964.5,588.3 965.5,588.3 965.5,578.9 966.5,578.9 966.5,580.9 967.5,580.9 967.5,583.3 968.5,583.3 968.5,585.3 969.5,585.3 969.5,587.7 970.5,587.7 970.5,589.5 971.5,589.5 971.5,591.3 972.5,591.3 972.5,592.9 974.5,592.9 974.5,593.3 975.5,593.3 975.5,593.7 977.5,593.7 977.5,588.3 978.5,588.3 978.5,579 979.5,579 979.5,580.4 980.5,580.4 980.5,582.9 981.5,582.9 981.5,585.2 982.5,585.2 982.5,587.6 983.5,587.6 983.5,589.6 984.5,589.6 984.5,591.3 985.5,591.3 985.5,592.9 987.5,592.9 987.5,593.3 988.5,593.3 988.5,593.7 990.5,593.7 990.5,588.3 991.5,588.3 991.5,578.5 992.5,578.5 992.5,582.4 993.5,582.4 993.5,585.6 994.5,585.6 994.5,588.1 995.5,588.1 995.5,590.9 996.5,590.9 996.5,592.9 997.5,592.9 997.5,593.1 998.5,593.1 998.5,593.6 999.5,593.6 999.5,593.7 1001.5,593.7 1001.5,593.5 1002.5,593.5 1002.5,591.4 1003.5,591.4 1003.5,589.6 1004.5,589.6 1004.5,589 1005.5,589 1005.5,590.8 1006.5,590.8 1006.5,592.7 1007.5,592.7 1007.5,593.7 1011.5,593.7 1011.5,593.2 1012.5,593.2 1012.5,589.7 1013.5,589.7 1013.5,588.2 1014.5,588.2 1014.5,591.2 1015.5,591.2 1015.5,588.3 1016.5,588.3 1016.5,585.8 1017.5,585.8 1017.5,587.7 1018.5,587.7 1018.5,590.4 1019.5,590.4 1019.5,593.7 1024.5,593.7 1024.5,592.2 1025.5,592.2 1025.5,589.9 1026.5,589.9 1026.5,591.1 1027.5,591.1 1027.5,593.6 1028.5,593.6 1028.5,593.7 1029.5,593.7 1029.5,588.3 1030.5,588.3 1030.5,577.9 1031.5,577.9 1031.5,581.1 1032.5,581.1 1032.5,583.6 1033.5,583.6 1033.5,585.6 1034.5,585.6 1034.5,587.7 1035.5,587.7 1035.5,589.4 1036.5,589.4 1036.5,591.5 1037.5,591.5 1037.5,592.9 1039.5,592.9 1039.5,593.3 1040.5,593.3 1040.5,593.7 1042.5,593.7 1042.5,588.3 1043.5,588.3 1043.5,579.3 1044.5,579.3 1044.5,580.6 1045.5,580.6 1045.5,583.3 1046.5,583.3 1046.5,585.6 1047.5,585.6 1047.5,588 1048.5,588 1048.5,589.4 1049.5,589.4 1049.5,591.4 1050.5,591.4 1050.5,592.9 1052.5,592.9 1052.5,593.3 1053.5,593.3 1053.5,593.7 1054.5,593.7 1054.5,592.1 1055.5,592.1 1055.5,590.1 1056.5,590.1 1056.5,589.7 1057.5,589.7 1057.5,591.6 1058.5,591.6 1058.5,593.7 1063.5,593.7 1063.5,591.8 1064.5,591.8 1064.5,590.1 1065.5,590.1 1065.5,592.1 1066.5,592.1 1066.5,593.7 1068.5,593.7 1068.5,588.3 1069.5,588.3 1069.5,578.1 1070.5,578.1 1070.5,581 1071.5,581 1071.5,583 1072.5,583 1072.5,585.6 1073.5,585.6 1073.5,587.8 1074.5,587.8 1074.5,589.8 1075.5,589.8 1075.5,591.5 1076.5,591.5 1076.5,592.9 1078.5,592.9 1078.5,593.3 1079.5,593.3 1079.5,593.7 1081.5,593.7 1081.5,588.3 1082.5,588.3 1082.5,578 1083.5,578 1083.5,581.6 1084.5,581.6 1084.5,583.6 1085.5,583.6 1085.5,585.7 1086.5,585.7 1086.5,587.9 1087.5,587.9 1087.5,589.7 1088.5,589.7 1088.5,591.4 1089.5,591.4 1089.5,592.9 1091.5,592.9 1091.5,593.3 1092.5,593.3 1092.5,593.7 1094.5,593.7 1094.5,588.3 1095.5,588.3 1095.5,578.2 1096.5,578.2 1096.5,581.6 1097.5,581.6 1097.5,584 1098.5,584 1098.5,585.8 1099.5,585.8 1099.5,587.6 1100.5,587.6 1100.5,589.9 1101.5,589.9 1101.5,591.5 1102.5,591.5 1102.5,592.9 1104.5,592.9 1104.5,593.3 1105.5,593.3 1105.5,593.2 1106.5,593.2 1106.5,591.2 1107.5,591.2 1107.5,589.4 1108.5,589.4 1108.5,589.2 1109.5,589.2 1109.5,590.9 1110.5,590.9 1110.5,592.9 1111.5,592.9 1111.5,593.7 1115.5,593.7 1115.5,592.8 1116.5,592.8 1116.5,589.4 1117.5,589.4 1117.5,588.5 1118.5,588.5 1118.5,590.9 1119.5,590.9 1119.5,588.1 1120.5,588.1 1120.5,585.6 1121.5,585.6 1121.5,587.9 1122.5,587.9 1122.5,590.7 1123.5,590.7 1123.5,593.7 1128.5,593.7 1128.5,591.9 1129.5,591.9 1129.5,589.7 1130.5,589.7 1130.5,591.4 1131.5,591.4 1131.5,593.7 1133.5,593.7 1133.5,588.3 1134.5,588.3 1134.5,578.7 1135.5,578.7 1135.5,581.9 1136.5,581.9 1136.5,583.1 1137.5,583.1 1137.5,586.1 1138.5,586.1 1138.5,588 1139.5,588 1139.5,589.6 1140.5,589.6 1140.5,591.6 1141.5,591.6 1141.5,592.9 1143.5,592.9 1143.5,593.4 1144.5,593.4 1144.5,593.7 1146.5,593.7 1146.5,588.3 1147.5,588.3 1147.5,578.9 1148.5,578.9 1148.5,581.3 1149.5,581.3 1149.5,583 1150.5,583 1150.5,585.7 1151.5,585.7 1151.5,587.8 1152.5,587.8 1152.5,589.7 1153.5,589.7 1153.5,591.5 1154.5,591.5 1154.5,592.9 1156.5,592.9 1156.5,593.4 1157.5,593.4 1157.5,593.7 1158.5,593.7 1158.5,591.9 1159.5,591.9 1159.5,589.9 1161.5,589.9 1161.5,591.8 1162.5,591.8 1162.5,593.7 1167.5,593.7 1167.5,591.6 1168.5,591.6 1168.5,590.3 1169.5,590.3 1169.5,592.3 1170.5,592.3 1170.5,593.7 1172.5,593.7 1172.5,577.2 1173.5,577.2 1173.5,580.6 1174.5,580.6 1174.5,585 1175.5,585 1175.5,588.6 1176.5,588.6 1176.5,592.2 1177.5,592.2 1177.5,593 1178.5,593 1178.5,593.5 1179.5,593.5 1179.5,593.7 1185.5,593.7 1185.5,588.8 1186.5,588.8 1186.5,589.6 1187.5,589.6 1187.5,591.5 1188.5,591.5 1188.5,592.9 1190.5,592.9 1190.5,593.2 1191.5,593.2 1191.5,593.7 1198.5,593.7 1198.5,577 1199.5,577 1199.5,579.2 1200.5,579.2 1200.5,581.7 1201.5,581.7 1201.5,583.9 1202.5,583.9 1202.5,586.1 1203.5,586.1 1203.5,587.8 1204.5,587.8 1204.5,589.9 1205.5,589.9 1205.5,591.5 1206.5,591.5 1206.5,592.9 1208.5,592.9 1208.5,593.4 1209.5,593.4 1209.5,593 1210.5,593 1210.5,591 1211.5,591 1211.5,589.3 1212.5,589.3 1212.5,589.4 1213.5,589.4 1213.5,591.1 1214.5,591.1 1214.5,593.2 1215.5,593.2 1215.5,593.7 1219.5,593.7 1219.5,592.4 1220.5,592.4 1220.5,589.1 1221.5,589.1 1221.5,588.8 1222.5,588.8 1222.5,590.6 1223.5,590.6 1223.5,587.8 1224.5,587.8 1224.5,585.7 1225.5,585.7 1225.5,588.2 1226.5,588.2 1226.5,591 1227.5,591 1227.5,593.7 1232.5,593.7 1232.5,591.7 1233.5,591.7 1233.5,589.5 1234.5,589.5 1234.5,591.6 1235.5,591.6 1235.5,593.7 1237.5,593.7 1237.5,577.3 1238.5,577.3 1238.5,578.8 1239.5,578.8 1239.5,581.7 1240.5,581.7 1240.5,584.3 1241.5,584.3 1241.5,586 1242.5,586 1242.5,588.1 1243.5,588.1 1243.5,590.1 1244.5,590.1 1244.5,591.6 1245.5,591.6 1245.5,592.9 1247.5,592.9 1247.5,593.4 1248.5,593.4 1248.5,593.7 1250.5,593.7 1250.5,578.3 1251.5,578.3 1251.5,579.3 1252.5,579.3 1252.5,581.4 1253.5,581.4 1253.5,583.5 1254.5,583.5 1254.5,586.3 1255.5,586.3 1255.5,588.2 1256.5,588.2 1256.5,589.9 1257.5,589.9 1257.5,591.8 1258.5,591.8 1258.5,592.9 1260.5,592.9 1260.5,593.4 1261.5,593.4 1261.5,593.7 1262.5,593.7 1262.5,591.7 1263.5,591.7 1263.5,589.7 1264.5,589.7 1264.5,590.1 1265.5,590.1 1265.5,592 1266.5,592 1266.5,593.7 1270.5,593.7 1270.5,593.6 1271.5,593.6 1271.5,591.4 1272.5,591.4 1272.5,590.5 1273.5,590.5 1273.5,592.5 1274.5,592.5 1274.5,593.7 1276.5,593.7 L1276.5,595.3 1274.5,595.3 1274.5,596.5 1273.5,596.5 1273.5,598.5 1272.5,598.5 1272.5,597.6 1271.5,597.6 1271.5,595.4 1270.5,595.4 1270.5,595.3 1266.5,595.3 1266.5,597 1265.5,597 1265.5,598.9 1264.5,598.9 1264.5,599.3 1263.5,599.3 1263.5,597.3 1262.5,597.3 1262.5,595.3 1261.5,595.3 1261.5,595.5 1260.5,595.5 1260.5,596.1 1258.5,596.1 1258.5,597.2 1257.5,597.2 1257.5,599 1256.5,599 1256.5,600.7 1255.5,600.7 1255.5,602.4 1254.5,602.4 1254.5,605.1 1253.5,605.1 1253.5,607.2 1252.5,607.2 1252.5,609.2 1251.5,609.2 1251.5,610.2 1250.5,610.2 1250.5,595.3 1248.5,595.3 1248.5,595.6 1247.5,595.6 1247.5,596.1 1245.5,596.1 1245.5,597.3 1244.5,597.3 1244.5,598.7 1243.5,598.7 1243.5,600.7 1242.5,600.7 1242.5,602.8 1241.5,602.8 1241.5,604.4 1240.5,604.4 1240.5,606.9 1239.5,606.9 1239.5,609.8 1238.5,609.8 1238.5,611.2 1237.5,611.2 1237.5,595.3 1235.5,595.3 1235.5,597.4 1234.5,597.4 1234.5,599.5 1233.5,599.5 1233.5,597.3 1232.5,597.3 1232.5,595.3 1227.5,595.3 1227.5,598 1226.5,598 1226.5,600.8 1225.5,600.8 1225.5,603.3 1224.5,603.3 1224.5,601.2 1223.5,601.2 1223.5,598.4 1222.5,598.4 1222.5,600.2 1221.5,600.2 1221.5,599.9 1220.5,599.9 1220.5,596.6 1219.5,596.6 1219.5,595.3 1215.5,595.3 1215.5,595.8 1214.5,595.8 1214.5,597.9 1213.5,597.9 1213.5,599.6 1212.5,599.6 1212.5,599.7 1211.5,599.7 1211.5,598 1210.5,598 1210.5,596 1209.5,596 1209.5,595.6 1208.5,595.6 1208.5,596.1 1206.5,596.1 1206.5,597.4 1205.5,597.4 1205.5,598.9 1204.5,598.9 1204.5,601 1203.5,601 1203.5,602.6 1202.5,602.6 1202.5,604.8 1201.5,604.8 1201.5,606.9 1200.5,606.9 1200.5,609.3 1199.5,609.3 1199.5,611.4 1198.5,611.4 1198.5,595.3 1191.5,595.3 1191.5,595.8 1190.5,595.8 1190.5,596.1 1188.5,596.1 1188.5,597.4 1187.5,597.4 1187.5,599.3 1186.5,599.3 1186.5,600.1 1185.5,600.1 1185.5,595.3 1179.5,595.3 1179.5,595.5 1178.5,595.5 1178.5,596 1177.5,596 1177.5,596.7 1176.5,596.7 1176.5,600.3 1175.5,600.3 1175.5,603.7 1174.5,603.7 1174.5,607.9 1173.5,607.9 1173.5,611.3 1172.5,611.3 1172.5,595.3 1170.5,595.3 1170.5,596.7 1169.5,596.7 1169.5,598.7 1168.5,598.7 1168.5,597.4 1167.5,597.4 1167.5,595.3 1162.5,595.3 1162.5,597.2 1161.5,597.2 1161.5,599.1 1159.5,599.1 1159.5,597.1 1158.5,597.1 1158.5,595.3 1157.5,595.3 1157.5,595.6 1156.5,595.6 1156.5,596.1 1154.5,596.1 1154.5,597.4 1153.5,597.4 1153.5,599.2 1152.5,599.2 1152.5,601 1151.5,601 1151.5,603.1 1150.5,603.1 1150.5,605.6 1149.5,605.6 1149.5,607.3 1148.5,607.3 1148.5,609.6 1147.5,609.6 1147.5,600.5 1146.5,600.5 1146.5,595.3 1144.5,595.3 1144.5,595.6 1143.5,595.6 1143.5,596.1 1141.5,596.1 1141.5,597.3 1140.5,597.3 1140.5,599.2 1139.5,599.2 1139.5,600.8 1138.5,600.8 1138.5,602.6 1137.5,602.6 1137.5,605.6 1136.5,605.6 1136.5,606.7 1135.5,606.7 1135.5,609.8 1134.5,609.8 1134.5,600.5 1133.5,600.5 1133.5,595.3 1131.5,595.3 1131.5,597.6 1130.5,597.6 1130.5,599.3 1129.5,599.3 1129.5,597.1 1128.5,597.1 1128.5,595.3 1123.5,595.3 1123.5,598.3 1122.5,598.3 1122.5,601.1 1121.5,601.1 1121.5,603.4 1120.5,603.4 1120.5,600.9 1119.5,600.9 1119.5,598.1 1118.5,598.1 1118.5,600.5 1117.5,600.5 1117.5,599.6 1116.5,599.6 1116.5,596.2 1115.5,596.2 1115.5,595.3 1111.5,595.3 1111.5,596.1 1110.5,596.1 1110.5,598.1 1109.5,598.1 1109.5,599.8 1108.5,599.8 1108.5,599.6 1107.5,599.6 1107.5,597.8 1106.5,597.8 1106.5,595.8 1105.5,595.8 1105.5,595.6 1104.5,595.6 1104.5,596.1 1102.5,596.1 1102.5,597.5 1101.5,597.5 1101.5,599 1100.5,599 1100.5,601.2 1099.5,601.2 1099.5,603 1098.5,603 1098.5,604.7 1097.5,604.7 1097.5,607 1096.5,607 1096.5,610.4 1095.5,610.4 1095.5,600.5 1094.5,600.5 1094.5,595.3 1092.5,595.3 1092.5,595.6 1091.5,595.6 1091.5,596.1 1089.5,596.1 1089.5,597.5 1088.5,597.5 1088.5,599.2 1087.5,599.2 1087.5,600.9 1086.5,600.9 1086.5,603 1085.5,603 1085.5,605 1084.5,605 1084.5,607 1083.5,607 1083.5,610.5 1082.5,610.5 1082.5,600.5 1081.5,600.5 1081.5,595.3 1079.5,595.3 1079.5,595.6 1078.5,595.6 1078.5,596.1 1076.5,596.1 1076.5,597.4 1075.5,597.4 1075.5,599.1 1074.5,599.1 1074.5,601 1073.5,601 1073.5,603.2 1072.5,603.2 1072.5,605.7 1071.5,605.7 1071.5,607.5 1070.5,607.5 1070.5,610.4 1069.5,610.4 1069.5,600.5 1068.5,600.5 1068.5,595.3 1066.5,595.3 1066.5,596.9 1065.5,596.9 1065.5,598.9 1064.5,598.9 1064.5,597.2 1063.5,597.2 1063.5,595.3 1058.5,595.3 1058.5,597.4 1057.5,597.4 1057.5,599.3 1056.5,599.3 1056.5,598.9 1055.5,598.9 1055.5,596.9 1054.5,596.9 1054.5,595.3 1053.5,595.3 1053.5,595.7 1052.5,595.7 1052.5,596.1 1050.5,596.1 1050.5,597.5 1049.5,597.5 1049.5,599.5 1048.5,599.5 1048.5,600.8 1047.5,600.8 1047.5,603.1 1046.5,603.1 1046.5,605.4 1045.5,605.4 1045.5,608 1044.5,608 1044.5,609.2 1043.5,609.2 1043.5,600.5 1042.5,600.5 1042.5,595.3 1040.5,595.3 1040.5,595.7 1039.5,595.7 1039.5,596.1 1037.5,596.1 1037.5,597.4 1036.5,597.4 1036.5,599.4 1035.5,599.4 1035.5,601.1 1034.5,601.1 1034.5,603.1 1033.5,603.1 1033.5,605 1032.5,605 1032.5,607.5 1031.5,607.5 1031.5,610.6 1030.5,610.6 1030.5,600.5 1029.5,600.5 1029.5,595.3 1028.5,595.3 1028.5,595.4 1027.5,595.4 1027.5,597.9 1026.5,597.9 1026.5,599.1 1025.5,599.1 1025.5,596.8 1024.5,596.8 1024.5,595.3 1019.5,595.3 1019.5,598.6 1018.5,598.6 1018.5,601.3 1017.5,601.3 1017.5,603.2 1016.5,603.2 1016.5,600.7 1015.5,600.7 1015.5,597.8 1014.5,597.8 1014.5,600.8 1013.5,600.8 1013.5,599.3 1012.5,599.3 1012.5,595.8 1011.5,595.8 1011.5,595.3 1007.5,595.3 1007.5,596.3 1006.5,596.3 1006.5,598.2 1005.5,598.2 1005.5,600 1004.5,600 1004.5,599.4 1003.5,599.4 1003.5,597.6 1002.5,597.6 1002.5,595.5 1001.5,595.5 1001.5,595.3 999.5,595.3 999.5,595.4 998.5,595.4 998.5,595.9 997.5,595.9 997.5,596.1 996.5,596.1 996.5,597.9 995.5,597.9 995.5,600.7 994.5,600.7 994.5,603.1 993.5,603.1 993.5,606.2 992.5,606.2 992.5,610 991.5,610 991.5,600.5 990.5,600.5 990.5,595.3 988.5,595.3 988.5,595.7 987.5,595.7 987.5,596.1 985.5,596.1 985.5,597.6 984.5,597.6 984.5,599.2 983.5,599.2 983.5,601.2 982.5,601.2 982.5,603.6 981.5,603.6 981.5,605.8 980.5,605.8 980.5,608.1 979.5,608.1 979.5,609.5 978.5,609.5 978.5,600.5 977.5,600.5 977.5,595.3 975.5,595.3 975.5,595.7 974.5,595.7 974.5,596.1 972.5,596.1 972.5,597.6 971.5,597.6 971.5,599.4 970.5,599.4 970.5,601.1 969.5,601.1 969.5,603.4 968.5,603.4 968.5,605.3 967.5,605.3 967.5,607.7 966.5,607.7 966.5,609.6 965.5,609.6 965.5,600.5 964.5,600.5 964.5,595.3 962.5,595.3 962.5,597.1 961.5,597.1 961.5,599 960.5,599 960.5,597 959.5,597 959.5,595.3 954.5,595.3 954.5,597.6 953.5,597.6 953.5,599.5 952.5,599.5 952.5,598.7 951.5,598.7 951.5,596.7 950.5,596.7 950.5,595.3 949.5,595.3 949.5,595.7 948.5,595.7 948.5,596.1 946.5,596.1 946.5,597.6 945.5,597.6 945.5,599.6 944.5,599.6 944.5,601.5 943.5,601.5 943.5,603.3 942.5,603.3 942.5,605.7 941.5,605.7 941.5,607.6 940.5,607.6 940.5,610.2 939.5,610.2 939.5,600.5 938.5,600.5 938.5,595.3 936.5,595.3 936.5,595.7 935.5,595.7 935.5,596.1 933.5,596.1 933.5,597.7 932.5,597.7 932.5,599.7 931.5,599.7 931.5,601.5 930.5,601.5 930.5,603.1 929.5,603.1 929.5,605.1 928.5,605.1 928.5,607.4 927.5,607.4 927.5,610 926.5,610 926.5,600.5 925.5,600.5 925.5,595.3 924.5,595.3 924.5,595.7 923.5,595.7 923.5,598.1 922.5,598.1 922.5,598.8 921.5,598.8 921.5,596.6 920.5,596.6 920.5,595.3 916.5,595.3 916.5,595.7 915.5,595.7 915.5,598.9 914.5,598.9 914.5,601.6 913.5,601.6 913.5,602.9 912.5,602.9 912.5,600.4 911.5,600.4 911.5,598 910.5,598 910.5,601.1 909.5,601.1 909.5,599 908.5,599 908.5,595.4 907.5,595.4 907.5,595.3 903.5,595.3 903.5,596.5 902.5,596.5 902.5,598.4 901.5,598.4 901.5,600.1 900.5,600.1 900.5,599.2 899.5,599.2 899.5,597.5 898.5,597.5 898.5,595.3 897.5,595.3 897.5,595.7 896.5,595.7 896.5,596.1 894.5,596.1 894.5,597.7 893.5,597.7 893.5,599.4 892.5,599.4 892.5,601.4 891.5,601.4 891.5,603.1 890.5,603.1 890.5,605.5 889.5,605.5 889.5,607.4 888.5,607.4 888.5,610.7 887.5,610.7 887.5,600.5 886.5,600.5 886.5,595.3 884.5,595.3 884.5,595.7 883.5,595.7 883.5,596.1 882.5,596.1 882.5,596.2 881.5,596.2 881.5,597.8 880.5,597.8 880.5,599.7 879.5,599.7 879.5,601.6 878.5,601.6 878.5,603.2 877.5,603.2 877.5,605.6 876.5,605.6 876.5,607.4 875.5,607.4 875.5,610.2 874.5,610.2 874.5,600.5 873.5,600.5 873.5,595.3 867.5,595.3 867.5,595.4 866.5,595.4 866.5,595.9 865.5,595.9 865.5,596.2 864.5,596.2 864.5,599.3 863.5,599.3 863.5,603.2 862.5,603.2 862.5,607 861.5,607Z" fill="#2364b4"/>
<path d="M1277.5,583.3 1278.5,583.3 1278.5,587.1 1279.5,587.1 1279.5,590.9 1280.5,590.9 1280.5,592.9 1281.5,592.9 1281.5,593.2 1282.5,593.2 1282.5,593.7 1289.5,593.7 1289.5,577.3 1290.5,577.3 1290.5,578.8 1291.5,578.8 1291.5,581.6 1292.5,581.6 1292.5,583.9 1293.5,583.9 1293.5,585.8 1294.5,585.8 1294.5,588 1295.5,588 1295.5,590.1 1296.5,590.1 1296.5,591.8 1297.5,591.8 1297.5,592.9 1299.5,592.9 1299.5,593.4 1300.5,593.4 1300.5,593.7 1302.5,593.7 1302.5,578.6 1303.5,578.6 1303.5,579.4 1304.5,579.4 1304.5,581.6 1305.5,581.6 1305.5,583.9 1306.5,583.9 1306.5,585.6 1307.5,585.6 1307.5,587.8 1308.5,587.8 1308.5,590.1 1309.5,590.1 1309.5,591.8 1310.5,591.8 1310.5,592.9 1312.5,592.9 1312.5,593.4 1313.5,593.4 1313.5,592.8 1314.5,592.8 1314.5,590.8 1315.5,590.8 1315.5,589.1 1316.5,589.1 1316.5,589.5 1317.5,589.5 1317.5,591.3 1318.5,591.3 1318.5,593.4 1319.5,593.4 1319.5,593.7 1323.5,593.7 1323.5,592 1324.5,592 1324.5,588.8 1325.5,588.8 1325.5,589.1 1326.5,589.1 1326.5,590.3 1327.5,590.3 1327.5,587.6 1328.5,587.6 1328.5,585.9 1329.5,585.9 1329.5,588.4 1330.5,588.4 1330.5,591.3 1331.5,591.3 1331.5,593.7 1336.5,593.7 1336.5,591.4 1337.5,591.4 1337.5,589.7 1338.5,589.7 1338.5,591.8 1339.5,591.8 1339.5,593.7 1341.5,593.7 1341.5,578.1 1342.5,578.1 1342.5,579.4 1343.5,579.4 1343.5,581.9 1344.5,581.9 1344.5,584 1345.5,584 1345.5,586.4 1346.5,586.4 1346.5,588.3 1347.5,588.3 1347.5,590 1348.5,590 1348.5,591.9 1349.5,591.9 1349.5,592.9 1351.5,592.9 1351.5,593.5 1352.5,593.5 1352.5,593.7 1354.5,593.7 1354.5,577.4 1355.5,577.4 1355.5,579.3 1356.5,579.3 1356.5,581.4 1357.5,581.4 1357.5,583.9 1358.5,583.9 1358.5,586 1359.5,586 1359.5,588.2 1360.5,588.2 1360.5,590.3 1361.5,590.3 1361.5,592 1362.5,592 1362.5,592.9 1364.5,592.9 1364.5,593.5 1365.5,593.5 1365.5,593.7 1366.5,593.7 1366.5,591.5 1367.5,591.5 1367.5,589.6 1368.5,589.6 1368.5,590.2 1369.5,590.2 1369.5,592.3 1370.5,592.3 1370.5,593.7 1374.5,593.7 1374.5,593.3 1375.5,593.3 1375.5,591.2 1376.5,591.2 1376.5,590.7 1377.5,590.7 1377.5,592.7 1378.5,592.7 1378.5,593.7 1380.5,593.7 1380.5,577 1381.5,577 1381.5,580.2 1382.5,580.2 1382.5,581.5 1383.5,581.5 1383.5,583.7 1384.5,583.7 1384.5,585.9 1385.5,585.9 1385.5,588.5 1386.5,588.5 1386.5,590.2 1387.5,590.2 1387.5,592.1 1388.5,592.1 1388.5,592.9 1389.5,592.9 1389.5,593 1390.5,593 1390.5,593.5 1391.5,593.5 1391.5,593.7 1392.5,593.7 1392.5,588.3 1393.5,588.3 1393.5,577.3 1394.5,577.3 1394.5,578.9 1395.5,578.9 1395.5,581.4 1396.5,581.4 1396.5,584.4 1397.5,584.4 1397.5,586.7 1398.5,586.7 1398.5,588.4 1399.5,588.4 1399.5,590.1 1400.5,590.1 1400.5,592.1 1401.5,592.1 1401.5,592.9 1402.5,592.9 1402.5,593 1403.5,593 1403.5,593.5 1404.5,593.5 1404.5,593.7 1405.5,593.7 1405.5,588.3 1406.5,588.3 1406.5,577 1407.5,577 1407.5,581 1408.5,581 1408.5,583.9 1409.5,583.9 1409.5,586.9 1410.5,586.9 1410.5,589.7 1411.5,589.7 1411.5,592 1412.5,592 1412.5,592.9 1413.5,592.9 1413.5,593.3 1414.5,593.3 1414.5,593.7 1417.5,593.7 1417.5,592.5 1418.5,592.5 1418.5,590.6 1419.5,590.6 1419.5,588.9 1420.5,588.9 1420.5,589.7 1421.5,589.7 1421.5,591.5 1422.5,591.5 1422.5,593.6 1423.5,593.6 1423.5,593.7 1427.5,593.7 1427.5,591.7 1428.5,591.7 1428.5,588.5 1429.5,588.5 1429.5,589.4 1430.5,589.4 1430.5,590 1431.5,590 1431.5,587.3 1432.5,587.3 1432.5,586.2 1433.5,586.2 1433.5,588.7 1434.5,588.7 1434.5,591.6 1435.5,591.6 1435.5,593.7 1440.5,593.7 1440.5,591.2 1441.5,591.2 1441.5,589.9 1442.5,589.9 1442.5,592 1443.5,592 1443.5,593.7 1444.5,593.7 1444.5,588.3 1445.5,588.3 1445.5,578.1 1446.5,578.1 1446.5,579 1447.5,579 1447.5,581.8 1448.5,581.8 1448.5,583.8 1449.5,583.8 1449.5,586.6 1450.5,586.6 1450.5,588.7 1451.5,588.7 1451.5,590.5 1452.5,590.5 1452.5,592.1 1453.5,592.1 1453.5,592.9 1454.5,592.9 1454.5,593 1455.5,593 1455.5,593.5 1456.5,593.5 1456.5,593.7 1457.5,593.7 1457.5,588.3 1458.5,588.3 1458.5,578.4 1459.5,578.4 1459.5,579 1460.5,579 1460.5,582.1 1461.5,582.1 1461.5,584 1462.5,584 1462.5,586.7 1463.5,586.7 1463.5,588.4 1464.5,588.4 1464.5,590.5 1465.5,590.5 1465.5,592.1 1466.5,592.1 1466.5,592.9 1467.5,592.9 1467.5,593 1468.5,593 1468.5,593.5 1470.5,593.5 1470.5,591.3 1471.5,591.3 1471.5,589.4 1472.5,589.4 1472.5,590.4 1473.5,590.4 1473.5,592.5 1474.5,592.5 1474.5,593.7 1478.5,593.7 1478.5,593.1 1479.5,593.1 1479.5,591 1480.5,591 1480.5,590.9 1481.5,590.9 1481.5,593 1482.5,593 1482.5,593.7 1483.5,593.7 1483.5,588.3 1484.5,588.3 1484.5,577.3 1485.5,577.3 1485.5,579.6 1486.5,579.6 L1486.5,609 1485.5,609 1485.5,611.2 1484.5,611.2 1484.5,600.5 1483.5,600.5 1483.5,595.3 1482.5,595.3 1482.5,596 1481.5,596 1481.5,598.1 1480.5,598.1 1480.5,598 1479.5,598 1479.5,595.9 1478.5,595.9 1478.5,595.3 1474.5,595.3 1474.5,596.5 1473.5,596.5 1473.5,598.6 1472.5,598.6 1472.5,599.6 1471.5,599.6 1471.5,597.7 1470.5,597.7 1470.5,595.5 1469.5,595.5 1469.5,595.4 1468.5,595.4 1468.5,596 1467.5,596 1467.5,596.1 1466.5,596.1 1466.5,596.9 1465.5,596.9 1465.5,598.4 1464.5,598.4 1464.5,600.4 1463.5,600.4 1463.5,602.1 1462.5,602.1 1462.5,604.7 1461.5,604.7 1461.5,606.5 1460.5,606.5 1460.5,609.5 1459.5,609.5 1459.5,610.2 1458.5,610.2 1458.5,600.5 1457.5,600.5 1457.5,595.3 1456.5,595.3 1456.5,595.5 1455.5,595.5 1455.5,596 1454.5,596 1454.5,596.1 1453.5,596.1 1453.5,596.8 1452.5,596.8 1452.5,598.4 1451.5,598.4 1451.5,600.2 1450.5,600.2 1450.5,602.2 1449.5,602.2 1449.5,604.9 1448.5,604.9 1448.5,606.8 1447.5,606.8 1447.5,609.6 1446.5,609.6 1446.5,610.4 1445.5,610.4 1445.5,600.5 1444.5,600.5 1444.5,595.3 1443.5,595.3 1443.5,597 1442.5,597 1442.5,599.1 1441.5,599.1 1441.5,597.8 1440.5,597.8 1440.5,595.3 1435.5,595.3 1435.5,597.4 1434.5,597.4 1434.5,600.3 1433.5,600.3 1433.5,602.8 1432.5,602.8 1432.5,601.7 1431.5,601.7 1431.5,599 1430.5,599 1430.5,599.6 1429.5,599.6 1429.5,600.5 1428.5,600.5 1428.5,597.3 1427.5,597.3 1427.5,595.3 1423.5,595.3 1423.5,595.4 1422.5,595.4 1422.5,597.5 1421.5,597.5 1421.5,599.3 1420.5,599.3 1420.5,600.1 1419.5,600.1 1419.5,598.4 1418.5,598.4 1418.5,596.5 1417.5,596.5 1417.5,595.3 1414.5,595.3 1414.5,595.7 1413.5,595.7 1413.5,596.1 1412.5,596.1 1412.5,596.9 1411.5,596.9 1411.5,599.2 1410.5,599.2 1410.5,601.9 1409.5,601.9 1409.5,604.8 1408.5,604.8 1408.5,607.6 1407.5,607.6 1407.5,611.5 1406.5,611.5 1406.5,600.5 1405.5,600.5 1405.5,595.3 1404.5,595.3 1404.5,595.5 1403.5,595.5 1403.5,596 1402.5,596 1402.5,596.1 1401.5,596.1 1401.5,596.9 1400.5,596.9 1400.5,598.8 1399.5,598.8 1399.5,600.4 1398.5,600.4 1398.5,602.1 1397.5,602.1 1397.5,604.3 1396.5,604.3 1396.5,607.2 1395.5,607.2 1395.5,609.6 1394.5,609.6 1394.5,611.2 1393.5,611.2 1393.5,600.5 1392.5,600.5 1392.5,595.3 1391.5,595.3 1391.5,595.5 1390.5,595.5 1390.5,596 1389.5,596 1389.5,596.1 1388.5,596.1 1388.5,596.9 1387.5,596.9 1387.5,598.6 1386.5,598.6 1386.5,600.3 1385.5,600.3 1385.5,602.9 1384.5,602.9 1384.5,605 1383.5,605 1383.5,607.1 1382.5,607.1 1382.5,608.4 1381.5,608.4 1381.5,611.4 1380.5,611.4 1380.5,595.3 1378.5,595.3 1378.5,596.3 1377.5,596.3 1377.5,598.3 1376.5,598.3 1376.5,597.8 1375.5,597.8 1375.5,595.7 1374.5,595.7 1374.5,595.3 1370.5,595.3 1370.5,596.7 1369.5,596.7 1369.5,598.8 1368.5,598.8 1368.5,599.4 1367.5,599.4 1367.5,597.5 1366.5,597.5 1366.5,595.3 1365.5,595.3 1365.5,595.5 1364.5,595.5 1364.5,596 1363.5,596 1363.5,596.1 1362.5,596.1 1362.5,596.9 1361.5,596.9 1361.5,598.6 1360.5,598.6 1360.5,600.6 1359.5,600.6 1359.5,602.7 1358.5,602.7 1358.5,604.8 1357.5,604.8 1357.5,607.2 1356.5,607.2 1356.5,609.3 1355.5,609.3 1355.5,611.1 1354.5,611.1 1354.5,595.3 1352.5,595.3 1352.5,595.5 1351.5,595.5 1351.5,596 1350.5,596 1350.5,596.1 1349.5,596.1 1349.5,597.1 1348.5,597.1 1348.5,598.9 1347.5,598.9 1347.5,600.5 1346.5,600.5 1346.5,602.4 1345.5,602.4 1345.5,604.7 1344.5,604.7 1344.5,606.7 1343.5,606.7 1343.5,609.2 1342.5,609.2 1342.5,610.4 1341.5,610.4 1341.5,595.3 1339.5,595.3 1339.5,597.2 1338.5,597.2 1338.5,599.3 1337.5,599.3 1337.5,597.6 1336.5,597.6 1336.5,595.3 1331.5,595.3 1331.5,597.7 1330.5,597.7 1330.5,600.6 1329.5,600.6 1329.5,603.1 1328.5,603.1 1328.5,601.4 1327.5,601.4 1327.5,598.7 1326.5,598.7 1326.5,599.9 1325.5,599.9 1325.5,600.2 1324.5,600.2 1324.5,597 1323.5,597 1323.5,595.3 1319.5,595.3 1319.5,595.6 1318.5,595.6 1318.5,597.7 1317.5,597.7 1317.5,599.5 1316.5,599.5 1316.5,599.9 1315.5,599.9 1315.5,598.2 1314.5,598.2 1314.5,596.2 1313.5,596.2 1313.5,595.5 1312.5,595.5 1312.5,596 1311.5,596 1311.5,596.1 1310.5,596.1 1310.5,597.1 1309.5,597.1 1309.5,598.8 1308.5,598.8 1308.5,601 1307.5,601 1307.5,603.1 1306.5,603.1 1306.5,604.7 1305.5,604.7 1305.5,607.1 1304.5,607.1 1304.5,609.1 1303.5,609.1 1303.5,609.9 1302.5,609.9 1302.5,595.3 1300.5,595.3 1300.5,595.5 1299.5,595.5 1299.5,596 1298.5,596 1298.5,596.1 1297.5,596.1 1297.5,597.1 1296.5,597.1 1296.5,598.7 1295.5,598.7 1295.5,600.8 1294.5,600.8 1294.5,603 1293.5,603 1293.5,604.8 1292.5,604.8 1292.5,607 1291.5,607 1291.5,609.7 1290.5,609.7 1290.5,611.2 1289.5,611.2 1289.5,595.3 1282.5,595.3 1282.5,595.7 1281.5,595.7 1281.5,596.1 1280.5,596.1 1280.5,598 1279.5,598 1279.5,601.7 1278.5,601.7 1278.5,605.4 1277.5,605.4Z" fill="#4094fd"/>
<text transform="translate(455.6,560.3) scale(1.06,1)" class="rl">Back in the Day Beat</text>
<text transform="translate(1286.8,560.3) scale(1.06,1)" class="rl">Back in the Day Beat</text>
<rect x="448" y="643.7" width="1036.3" height="80" fill="#07346f"/>
<rect x="448" y="639.2" width="205.5" height="89" rx="4.5" fill="#07346f"/>
<rect x="653.5" y="639.2" width="207.7" height="89" rx="4.5" fill="#07346f"/>
<rect x="861.2" y="639.2" width="208.3" height="89" rx="4.5" fill="#07346f"/>
<rect x="1069.5" y="639.2" width="207.7" height="89" rx="4.5" fill="#07346f"/>
<rect x="1277.2" y="639.2" width="207.1" height="89" rx="4.5" fill="#07346f"/>
<path d="M447.5,688.1 448.5,688.1 448.5,688.3 450.5,688.3 450.5,688.2 451.5,688.2 451.5,687.9 452.5,687.9 452.5,688.2 453.5,688.2 453.5,688 454.5,688 454.5,688.1 455.5,688.1 455.5,688.2 456.5,688.2 456.5,687.9 457.5,687.9 457.5,688 458.5,688 458.5,688.2 462.5,688.2 462.5,687.9 464.5,687.9 464.5,688.2 465.5,688.2 465.5,688 467.5,688 467.5,688.2 468.5,688.2 468.5,688.3 469.5,688.3 469.5,688.1 470.5,688.1 470.5,687.9 471.5,687.9 471.5,690.7 472.5,690.7 472.5,693.1 509.5,693.1 509.5,686 510.5,686 510.5,684.8 511.5,684.8 511.5,685.8 512.5,685.8 512.5,686.4 514.5,686.4 514.5,686.3 515.5,686.3 515.5,686.5 516.5,686.5 516.5,686.2 517.5,686.2 517.5,686.5 518.5,686.5 518.5,686.7 521.5,686.7 521.5,686.4 522.5,686.4 522.5,686.6 523.5,686.6 523.5,693.1 561.5,693.1 561.5,687.5 562.5,687.5 562.5,687.1 563.5,687.1 563.5,687.4 564.5,687.4 564.5,687.3 565.5,687.3 565.5,687.2 566.5,687.2 566.5,687.6 567.5,687.6 567.5,687.8 568.5,687.8 568.5,687.3 569.5,687.3 569.5,687.5 570.5,687.5 570.5,687.7 571.5,687.7 571.5,687.9 572.5,687.9 572.5,688.1 573.5,688.1 573.5,688.2 575.5,688.2 575.5,688.3 576.5,688.3 576.5,688.4 577.5,688.4 577.5,688.7 578.5,688.7 578.5,688.8 579.5,688.8 579.5,689 581.5,689 581.5,689.3 582.5,689.3 582.5,689.4 583.5,689.4 583.5,689.3 584.5,689.3 584.5,689.6 585.5,689.6 585.5,689.8 586.5,689.8 586.5,689.7 587.5,689.7 587.5,692.4 588.5,692.4 588.5,693.1 613.5,693.1 613.5,686.5 614.5,686.5 614.5,686.4 615.5,686.4 615.5,686 616.5,686 616.5,686.1 617.5,686.1 617.5,686 618.5,686 618.5,686.1 619.5,686.1 619.5,686.7 620.5,686.7 620.5,686.6 621.5,686.6 621.5,686.7 622.5,686.7 622.5,687 623.5,687 623.5,687.2 624.5,687.2 624.5,687.4 625.5,687.4 625.5,687.5 626.5,687.5 626.5,688 627.5,688 627.5,688.1 628.5,688.1 628.5,688.2 629.5,688.2 629.5,688.4 630.5,688.4 630.5,689 632.5,689 632.5,689.4 633.5,689.4 633.5,688.8 634.5,688.8 634.5,687.4 635.5,687.4 635.5,685.5 636.5,685.5 636.5,684.9 637.5,684.9 637.5,685.3 638.5,685.3 638.5,685.6 639.5,685.6 639.5,685.7 640.5,685.7 640.5,686 641.5,686 641.5,685.4 642.5,685.4 642.5,685.9 643.5,685.9 643.5,686 644.5,686 644.5,685.8 646.5,685.8 646.5,686 647.5,686 647.5,685.7 650.5,685.7 650.5,685.9 651.5,685.9 651.5,689.2 652.5,689.2 L652.5,698.1 651.5,698.1 651.5,701.6 650.5,701.6 650.5,701.1 649.5,701.1 649.5,701.2 647.5,701.2 647.5,701.3 646.5,701.3 646.5,701.1 645.5,701.1 645.5,701.3 642.5,701.3 642.5,701.1 641.5,701.1 641.5,701.5 640.5,701.5 640.5,701.6 639.5,701.6 639.5,701.5 638.5,701.5 638.5,701.1 637.5,701.1 637.5,701.5 636.5,701.5 636.5,701.6 635.5,701.6 635.5,699.7 634.5,699.7 634.5,697.9 633.5,697.9 633.5,698.1 632.5,698.1 632.5,698.2 631.5,698.2 631.5,698.4 630.5,698.4 630.5,699.1 629.5,699.1 629.5,699.3 628.5,699.3 628.5,699.5 627.5,699.5 627.5,699.8 626.5,699.8 626.5,700.3 625.5,700.3 625.5,700.4 624.5,700.4 624.5,700.7 623.5,700.7 623.5,700.6 622.5,700.6 622.5,700.7 621.5,700.7 621.5,700.4 620.5,700.4 620.5,700.8 619.5,700.8 619.5,700.5 618.5,700.5 618.5,700.7 616.5,700.7 616.5,700.6 615.5,700.6 615.5,700.3 614.5,700.3 614.5,700.6 613.5,700.6 613.5,694.7 588.5,694.7 588.5,695.7 587.5,695.7 587.5,699.1 586.5,699.1 586.5,699.2 585.5,699.2 585.5,699.3 584.5,699.3 584.5,699.6 583.5,699.6 583.5,699.9 582.5,699.9 582.5,699.8 581.5,699.8 581.5,700.2 580.5,700.2 580.5,700.3 579.5,700.3 579.5,700.5 578.5,700.5 578.5,700.8 577.5,700.8 577.5,700.5 576.5,700.5 576.5,701 575.5,701 575.5,701.2 574.5,701.2 574.5,701.1 573.5,701.1 573.5,701.4 571.5,701.4 571.5,701.7 570.5,701.7 570.5,702 569.5,702 569.5,702.1 568.5,702.1 568.5,702.7 567.5,702.7 567.5,702.5 566.5,702.5 566.5,703.3 565.5,703.3 565.5,703.6 564.5,703.6 564.5,703.4 563.5,703.4 563.5,703.7 562.5,703.7 562.5,703 561.5,703 561.5,694.7 523.5,694.7 523.5,701.5 522.5,701.5 522.5,701.4 521.5,701.4 521.5,701.2 520.5,701.2 520.5,701.4 519.5,701.4 519.5,701.2 518.5,701.2 518.5,701.5 517.5,701.5 517.5,701.3 516.5,701.3 516.5,701.1 515.5,701.1 515.5,701.4 512.5,701.4 512.5,701.1 511.5,701.1 511.5,701.4 509.5,701.4 509.5,694.7 472.5,694.7 472.5,698 471.5,698 471.5,701.4 470.5,701.4 470.5,701.1 469.5,701.1 469.5,701.6 468.5,701.6 468.5,701.3 467.5,701.3 467.5,701.1 464.5,701.1 464.5,701.2 463.5,701.2 463.5,701.4 461.5,701.4 461.5,701.2 460.5,701.2 460.5,701.5 459.5,701.5 459.5,701.1 457.5,701.1 457.5,701.6 456.5,701.6 456.5,701.2 453.5,701.2 453.5,701.3 451.5,701.3 451.5,701.5 450.5,701.5 450.5,701.2 449.5,701.2 449.5,701.6 447.5,701.6Z" fill="#4094fd"/>
<path d="M653.5,693.1 654.5,693.1 654.5,687.7 655.5,687.7 655.5,688.2 656.5,688.2 656.5,687.9 657.5,687.9 657.5,688 658.5,688 658.5,687.9 659.5,687.9 659.5,688 660.5,688 660.5,688.2 661.5,688.2 661.5,688 662.5,688 662.5,688.1 663.5,688.1 663.5,687.9 664.5,687.9 664.5,688.3 665.5,688.3 665.5,687.9 667.5,687.9 667.5,688.1 668.5,688.1 668.5,688.3 669.5,688.3 669.5,688.2 670.5,688.2 670.5,688.3 671.5,688.3 671.5,688.2 672.5,688.2 672.5,688 674.5,688 674.5,688.2 675.5,688.2 675.5,688 676.5,688 676.5,688.2 677.5,688.2 677.5,688.3 678.5,688.3 678.5,688.2 679.5,688.2 679.5,690.6 680.5,690.6 680.5,693.1 717.5,693.1 717.5,686.1 718.5,686.1 718.5,684.7 719.5,684.7 719.5,685.7 720.5,685.7 720.5,686.4 721.5,686.4 721.5,686.7 722.5,686.7 722.5,686.6 723.5,686.6 723.5,686.3 725.5,686.3 725.5,686.7 726.5,686.7 726.5,686.4 728.5,686.4 728.5,686.2 729.5,686.2 729.5,686.5 730.5,686.5 730.5,686.6 731.5,686.6 731.5,693.1 769.5,693.1 769.5,687 770.5,687 770.5,687.4 771.5,687.4 771.5,687.3 773.5,687.3 773.5,687.4 776.5,687.4 776.5,687.7 777.5,687.7 777.5,687.8 778.5,687.8 778.5,687.6 779.5,687.6 779.5,687.9 780.5,687.9 780.5,688.1 781.5,688.1 781.5,688.2 782.5,688.2 782.5,688.1 783.5,688.1 783.5,688.2 784.5,688.2 784.5,688.4 785.5,688.4 785.5,688.8 786.5,688.8 786.5,688.9 789.5,688.9 789.5,689 790.5,689 790.5,689.2 791.5,689.2 791.5,689.3 792.5,689.3 792.5,689.6 794.5,689.6 794.5,689.7 795.5,689.7 795.5,692.4 796.5,692.4 796.5,693.1 821.5,693.1 821.5,686.5 822.5,686.5 822.5,685.9 823.5,685.9 823.5,686 824.5,686 824.5,686.1 825.5,686.1 825.5,686.2 826.5,686.2 826.5,686.1 827.5,686.1 827.5,686.7 828.5,686.7 828.5,686.3 829.5,686.3 829.5,686.7 830.5,686.7 830.5,687.2 831.5,687.2 831.5,687 832.5,687 832.5,687.4 833.5,687.4 833.5,687.8 834.5,687.8 834.5,687.9 836.5,687.9 836.5,688.5 838.5,688.5 838.5,689 839.5,689 839.5,688.9 840.5,688.9 840.5,689.5 841.5,689.5 841.5,689.1 842.5,689.1 842.5,687 843.5,687 843.5,685.5 844.5,685.5 844.5,684.5 845.5,684.5 845.5,685.1 846.5,685.1 846.5,685.4 847.5,685.4 847.5,685.5 848.5,685.5 848.5,685.9 849.5,685.9 849.5,686 850.5,686 850.5,685.8 851.5,685.8 851.5,685.7 852.5,685.7 852.5,685.8 853.5,685.8 853.5,685.7 854.5,685.7 854.5,685.8 855.5,685.8 855.5,685.7 856.5,685.7 856.5,685.5 857.5,685.5 857.5,686 858.5,686 858.5,685.6 859.5,685.6 859.5,689.3 860.5,689.3 L860.5,698.1 859.5,698.1 859.5,701.2 858.5,701.2 858.5,701.1 855.5,701.1 855.5,701.3 854.5,701.3 854.5,701.2 853.5,701.2 853.5,701.5 852.5,701.5 852.5,701.6 851.5,701.6 851.5,701.4 850.5,701.4 850.5,701.2 849.5,701.2 849.5,701.1 847.5,701.1 847.5,701.2 846.5,701.2 846.5,701.6 845.5,701.6 845.5,701.4 844.5,701.4 844.5,701.2 843.5,701.2 843.5,699.8 842.5,699.8 842.5,697.9 841.5,697.9 841.5,697.8 840.5,697.8 840.5,698.4 839.5,698.4 839.5,698.7 838.5,698.7 838.5,698.8 837.5,698.8 837.5,699.2 836.5,699.2 836.5,699.4 835.5,699.4 835.5,699.9 834.5,699.9 834.5,700 833.5,700 833.5,700.5 832.5,700.5 832.5,700.4 831.5,700.4 831.5,700.6 829.5,700.6 829.5,700.3 828.5,700.3 828.5,700.8 827.5,700.8 827.5,700.4 826.5,700.4 826.5,700.6 824.5,700.6 824.5,700.5 823.5,700.5 823.5,700.4 822.5,700.4 822.5,700.3 821.5,700.3 821.5,694.7 796.5,694.7 796.5,695.8 795.5,695.8 795.5,699.2 794.5,699.2 794.5,699.3 793.5,699.3 793.5,699.4 792.5,699.4 792.5,699.5 791.5,699.5 791.5,699.9 790.5,699.9 790.5,699.7 789.5,699.7 789.5,700.2 788.5,700.2 788.5,700.4 786.5,700.4 786.5,700.3 785.5,700.3 785.5,700.5 784.5,700.5 784.5,701.1 782.5,701.1 782.5,701 781.5,701 781.5,701.1 780.5,701.1 780.5,701.7 779.5,701.7 779.5,702.1 777.5,702.1 777.5,702.6 776.5,702.6 776.5,702.5 775.5,702.5 775.5,703.1 774.5,703.1 774.5,703.2 773.5,703.2 773.5,703.4 772.5,703.4 772.5,703.7 770.5,703.7 770.5,703.1 769.5,703.1 769.5,694.7 731.5,694.7 731.5,701.4 730.5,701.4 730.5,701.2 729.5,701.2 729.5,701.3 728.5,701.3 728.5,701.2 727.5,701.2 727.5,701.1 726.5,701.1 726.5,701.3 725.5,701.3 725.5,701.5 724.5,701.5 724.5,701.2 723.5,701.2 723.5,701.3 722.5,701.3 722.5,701.5 721.5,701.5 721.5,701.6 720.5,701.6 720.5,701.4 719.5,701.4 719.5,701.6 718.5,701.6 718.5,701.1 717.5,701.1 717.5,694.7 680.5,694.7 680.5,698.1 679.5,698.1 679.5,701.4 678.5,701.4 678.5,701.3 677.5,701.3 677.5,701.2 676.5,701.2 676.5,701.5 674.5,701.5 674.5,701.6 673.5,701.6 673.5,701.2 671.5,701.2 671.5,701.6 670.5,701.6 670.5,701.5 669.5,701.5 669.5,701.4 668.5,701.4 668.5,701.5 667.5,701.5 667.5,701.3 665.5,701.3 665.5,701.5 664.5,701.5 664.5,701.2 663.5,701.2 663.5,701.1 662.5,701.1 662.5,701.2 660.5,701.2 660.5,701.6 657.5,701.6 657.5,701.2 656.5,701.2 656.5,701.6 655.5,701.6 655.5,701.4 654.5,701.4 654.5,694.7 653.5,694.7Z" fill="#2364b4"/>
<path d="M861.5,693.1 862.5,693.1 862.5,687.8 863.5,687.8 863.5,688 864.5,688 864.5,688.2 865.5,688.2 865.5,687.9 866.5,687.9 866.5,688 868.5,688 868.5,688.2 869.5,688.2 869.5,688 870.5,688 870.5,688.2 871.5,688.2 871.5,687.9 872.5,687.9 872.5,688.1 873.5,688.1 873.5,688.2 875.5,688.2 875.5,687.9 877.5,687.9 877.5,688.2 878.5,688.2 878.5,688.3 879.5,688.3 879.5,688.2 880.5,688.2 880.5,688 881.5,688 881.5,688.2 883.5,688.2 883.5,688 884.5,688 884.5,688.1 887.5,688.1 887.5,690.6 888.5,690.6 888.5,693.1 925.5,693.1 925.5,686 926.5,686 926.5,685 927.5,685 927.5,685.7 928.5,685.7 928.5,686.3 929.5,686.3 929.5,686.7 930.5,686.7 930.5,686.2 931.5,686.2 931.5,686.4 932.5,686.4 932.5,686.7 934.5,686.7 934.5,686.2 935.5,686.2 935.5,686.6 936.5,686.6 936.5,686.3 937.5,686.3 937.5,686.5 938.5,686.5 938.5,686.3 939.5,686.3 939.5,693.1 977.5,693.1 977.5,687.1 978.5,687.1 978.5,687.4 979.5,687.4 979.5,687.2 980.5,687.2 980.5,687.3 981.5,687.3 981.5,687.4 982.5,687.4 982.5,687.2 983.5,687.2 983.5,687.7 984.5,687.7 984.5,687.5 985.5,687.5 985.5,687.7 986.5,687.7 986.5,687.5 987.5,687.5 987.5,687.6 988.5,687.6 988.5,688.1 989.5,688.1 989.5,687.9 990.5,687.9 990.5,688.3 992.5,688.3 992.5,688.6 993.5,688.6 993.5,688.7 994.5,688.7 994.5,688.9 996.5,688.9 996.5,688.8 997.5,688.8 997.5,689 998.5,689 998.5,689.4 1000.5,689.4 1000.5,689.6 1001.5,689.6 1001.5,689.8 1003.5,689.8 1003.5,692.4 1004.5,692.4 1004.5,693.1 1029.5,693.1 1029.5,686.3 1030.5,686.3 1030.5,685.8 1032.5,685.8 1032.5,685.9 1033.5,685.9 1033.5,686.3 1034.5,686.3 1034.5,686.2 1035.5,686.2 1035.5,686.3 1036.5,686.3 1036.5,686.9 1038.5,686.9 1038.5,686.7 1039.5,686.7 1039.5,687 1040.5,687 1040.5,687.1 1041.5,687.1 1041.5,687.6 1042.5,687.6 1042.5,687.7 1043.5,687.7 1043.5,688 1044.5,688 1044.5,688.4 1045.5,688.4 1045.5,688.7 1046.5,688.7 1046.5,688.9 1047.5,688.9 1047.5,689 1048.5,689 1048.5,689.4 1049.5,689.4 1049.5,688.9 1050.5,688.9 1050.5,687.4 1051.5,687.4 1051.5,685.2 1052.5,685.2 1052.5,685 1053.5,685 1053.5,685.3 1054.5,685.3 1054.5,685.4 1055.5,685.4 1055.5,685.6 1056.5,685.6 1056.5,685.4 1057.5,685.4 1057.5,685.8 1058.5,685.8 1058.5,685.7 1059.5,685.7 1059.5,685.4 1060.5,685.4 1060.5,685.8 1061.5,685.8 1061.5,686 1062.5,686 1062.5,685.9 1063.5,685.9 1063.5,685.8 1064.5,685.8 1064.5,685.9 1066.5,685.9 1066.5,685.7 1067.5,685.7 1067.5,689.4 1068.5,689.4 L1068.5,697.9 1067.5,697.9 1067.5,701.5 1066.5,701.5 1066.5,701.6 1065.5,701.6 1065.5,701.4 1064.5,701.4 1064.5,701.1 1063.5,701.1 1063.5,701.6 1062.5,701.6 1062.5,701.1 1061.5,701.1 1061.5,701.2 1060.5,701.2 1060.5,701.6 1059.5,701.6 1059.5,701.5 1058.5,701.5 1058.5,701.6 1057.5,701.6 1057.5,701.2 1056.5,701.2 1056.5,701.4 1055.5,701.4 1055.5,701.5 1054.5,701.5 1054.5,701.4 1053.5,701.4 1053.5,701.1 1051.5,701.1 1051.5,699.5 1050.5,699.5 1050.5,698 1049.5,698 1049.5,697.9 1048.5,697.9 1048.5,698.4 1046.5,698.4 1046.5,699 1045.5,699 1045.5,699.1 1044.5,699.1 1044.5,699.6 1043.5,699.6 1043.5,699.7 1042.5,699.7 1042.5,700.1 1041.5,700.1 1041.5,700.5 1040.5,700.5 1040.5,700.7 1039.5,700.7 1039.5,700.3 1038.5,700.3 1038.5,700.7 1037.5,700.7 1037.5,700.3 1036.5,700.3 1036.5,700.6 1035.5,700.6 1035.5,700.3 1034.5,700.3 1034.5,700.6 1033.5,700.6 1033.5,700.5 1032.5,700.5 1032.5,700.4 1031.5,700.4 1031.5,700.5 1030.5,700.5 1030.5,700.6 1029.5,700.6 1029.5,694.7 1004.5,694.7 1004.5,695.7 1003.5,695.7 1003.5,699.1 1002.5,699.1 1002.5,699.2 1001.5,699.2 1001.5,699.4 1000.5,699.4 1000.5,699.6 999.5,699.6 999.5,699.8 997.5,699.8 997.5,700 996.5,700 996.5,700.2 995.5,700.2 995.5,700.3 994.5,700.3 994.5,700.5 993.5,700.5 993.5,700.4 992.5,700.4 992.5,701.1 991.5,701.1 991.5,700.8 990.5,700.8 990.5,701.2 989.5,701.2 989.5,701.3 988.5,701.3 988.5,701.5 987.5,701.5 987.5,701.8 986.5,701.8 986.5,702.3 984.5,702.3 984.5,702.6 983.5,702.6 983.5,702.7 982.5,702.7 982.5,703.1 981.5,703.1 981.5,703.2 980.5,703.2 980.5,703.7 978.5,703.7 978.5,703.3 977.5,703.3 977.5,694.7 939.5,694.7 939.5,701.1 938.5,701.1 938.5,701.3 937.5,701.3 937.5,701.6 936.5,701.6 936.5,701.3 935.5,701.3 935.5,701.4 934.5,701.4 934.5,701.3 932.5,701.3 932.5,701.6 930.5,701.6 930.5,701.4 929.5,701.4 929.5,701.6 926.5,701.6 926.5,701.1 925.5,701.1 925.5,694.7 888.5,694.7 888.5,697.9 887.5,697.9 887.5,701.4 886.5,701.4 886.5,701.2 885.5,701.2 885.5,701.6 884.5,701.6 884.5,701.3 883.5,701.3 883.5,701.2 882.5,701.2 882.5,701.1 881.5,701.1 881.5,701.4 879.5,701.4 879.5,701.2 878.5,701.2 878.5,701.3 877.5,701.3 877.5,701.6 876.5,701.6 876.5,701.3 875.5,701.3 875.5,701.6 874.5,701.6 874.5,701.3 873.5,701.3 873.5,701.1 872.5,701.1 872.5,701.4 871.5,701.4 871.5,701.2 870.5,701.2 870.5,701.6 869.5,701.6 869.5,701.5 868.5,701.5 868.5,701.4 867.5,701.4 867.5,701.2 866.5,701.2 866.5,701.1 865.5,701.1 865.5,701.6 864.5,701.6 864.5,701.5 863.5,701.5 863.5,701.6 862.5,701.6 862.5,694.7 861.5,694.7Z" fill="#2364b4"/>
<path d="M1069.5,693.1 1070.5,693.1 1070.5,688 1071.5,688 1071.5,688.2 1072.5,688.2 1072.5,688 1074.5,688 1074.5,688.2 1075.5,688.2 1075.5,687.9 1076.5,687.9 1076.5,688 1077.5,688 1077.5,688.1 1078.5,688.1 1078.5,688 1079.5,688 1079.5,687.9 1080.5,687.9 1080.5,688.3 1082.5,688.3 1082.5,688 1083.5,688 1083.5,688.1 1084.5,688.1 1084.5,688.3 1085.5,688.3 1085.5,688.2 1086.5,688.2 1086.5,687.9 1087.5,687.9 1087.5,688 1089.5,688 1089.5,688.2 1090.5,688.2 1090.5,688.1 1091.5,688.1 1091.5,687.9 1093.5,687.9 1093.5,688.3 1094.5,688.3 1094.5,687.9 1095.5,687.9 1095.5,690.6 1096.5,690.6 1096.5,693.1 1133.5,693.1 1133.5,685.9 1134.5,685.9 1134.5,685 1135.5,685 1135.5,685.4 1136.5,685.4 1136.5,686.4 1137.5,686.4 1137.5,686.7 1138.5,686.7 1138.5,686.3 1140.5,686.3 1140.5,686.6 1141.5,686.6 1141.5,686.7 1142.5,686.7 1142.5,686.4 1143.5,686.4 1143.5,686.2 1144.5,686.2 1144.5,686.5 1145.5,686.5 1145.5,686.2 1147.5,686.2 1147.5,693.1 1185.5,693.1 1185.5,687.5 1187.5,687.5 1187.5,687.3 1188.5,687.3 1188.5,687.2 1189.5,687.2 1189.5,687.5 1190.5,687.5 1190.5,687.4 1191.5,687.4 1191.5,687.6 1192.5,687.6 1192.5,687.5 1193.5,687.5 1193.5,687.6 1194.5,687.6 1194.5,687.7 1195.5,687.7 1195.5,687.9 1196.5,687.9 1196.5,688.1 1197.5,688.1 1197.5,688 1198.5,688 1198.5,688.1 1199.5,688.1 1199.5,688.3 1200.5,688.3 1200.5,688.4 1201.5,688.4 1201.5,688.5 1202.5,688.5 1202.5,688.7 1204.5,688.7 1204.5,688.8 1205.5,688.8 1205.5,689 1206.5,689 1206.5,689.4 1207.5,689.4 1207.5,689.5 1208.5,689.5 1208.5,689.6 1210.5,689.6 1210.5,690 1211.5,690 1211.5,692.4 1212.5,692.4 1212.5,693.1 1237.5,693.1 1237.5,686.7 1238.5,686.7 1238.5,685.9 1239.5,685.9 1239.5,685.5 1240.5,685.5 1240.5,685.8 1241.5,685.8 1241.5,686 1242.5,686 1242.5,686.3 1243.5,686.3 1243.5,686.2 1244.5,686.2 1244.5,686.7 1245.5,686.7 1245.5,686.8 1246.5,686.8 1246.5,687.1 1247.5,687.1 1247.5,686.9 1248.5,686.9 1248.5,687.1 1249.5,687.1 1249.5,687.6 1250.5,687.6 1250.5,687.7 1251.5,687.7 1251.5,688.2 1252.5,688.2 1252.5,688.4 1254.5,688.4 1254.5,688.6 1255.5,688.6 1255.5,689 1256.5,689 1256.5,689.4 1257.5,689.4 1257.5,689 1258.5,689 1258.5,687.1 1259.5,687.1 1259.5,685.1 1260.5,685.1 1260.5,684.7 1261.5,684.7 1261.5,685.4 1262.5,685.4 1262.5,685.5 1263.5,685.5 1263.5,686 1264.5,686 1264.5,685.7 1265.5,685.7 1265.5,686.1 1266.5,686.1 1266.5,685.7 1267.5,685.7 1267.5,685.9 1268.5,685.9 1268.5,685.6 1269.5,685.6 1269.5,685.5 1270.5,685.5 1270.5,685.9 1271.5,685.9 1271.5,685.5 1272.5,685.5 1272.5,685.9 1273.5,685.9 1273.5,686 1274.5,686 1274.5,685.6 1275.5,685.6 1275.5,689.3 1276.5,689.3 L1276.5,698 1275.5,698 1275.5,701.6 1274.5,701.6 1274.5,701.3 1272.5,701.3 1272.5,701.5 1271.5,701.5 1271.5,701.1 1269.5,701.1 1269.5,701.2 1268.5,701.2 1268.5,701.5 1267.5,701.5 1267.5,701.4 1266.5,701.4 1266.5,701.2 1265.5,701.2 1265.5,701.1 1264.5,701.1 1264.5,701.5 1262.5,701.5 1262.5,701.4 1261.5,701.4 1261.5,701.1 1260.5,701.1 1260.5,701.2 1259.5,701.2 1259.5,699.5 1258.5,699.5 1258.5,698.1 1257.5,698.1 1257.5,697.9 1256.5,697.9 1256.5,698.3 1255.5,698.3 1255.5,698.7 1254.5,698.7 1254.5,698.8 1253.5,698.8 1253.5,699.2 1252.5,699.2 1252.5,699.8 1251.5,699.8 1251.5,699.9 1250.5,699.9 1250.5,700.2 1249.5,700.2 1249.5,700.6 1247.5,700.6 1247.5,700.5 1245.5,700.5 1245.5,700.7 1244.5,700.7 1244.5,700.5 1243.5,700.5 1243.5,700.6 1242.5,700.6 1242.5,700.8 1239.5,700.8 1239.5,700.5 1238.5,700.5 1238.5,700.7 1237.5,700.7 1237.5,694.7 1212.5,694.7 1212.5,695.7 1211.5,695.7 1211.5,699.1 1210.5,699.1 1210.5,699.3 1209.5,699.3 1209.5,699.2 1208.5,699.2 1208.5,699.6 1207.5,699.6 1207.5,699.9 1206.5,699.9 1206.5,700.1 1205.5,700.1 1205.5,699.9 1204.5,699.9 1204.5,700.1 1202.5,700.1 1202.5,700.7 1201.5,700.7 1201.5,700.9 1200.5,700.9 1200.5,701 1199.5,701 1199.5,701.1 1198.5,701.1 1198.5,701.2 1197.5,701.2 1197.5,701.3 1196.5,701.3 1196.5,701.6 1195.5,701.6 1195.5,702.1 1194.5,702.1 1194.5,701.9 1193.5,701.9 1193.5,702.1 1192.5,702.1 1192.5,702.8 1191.5,702.8 1191.5,702.6 1190.5,702.6 1190.5,703.2 1189.5,703.2 1189.5,703.3 1188.5,703.3 1188.5,703.5 1187.5,703.5 1187.5,703.3 1186.5,703.3 1186.5,702.8 1185.5,702.8 1185.5,694.7 1147.5,694.7 1147.5,701.3 1146.5,701.3 1146.5,701.5 1145.5,701.5 1145.5,701.6 1144.5,701.6 1144.5,701.4 1143.5,701.4 1143.5,701.5 1142.5,701.5 1142.5,701.4 1141.5,701.4 1141.5,701.1 1140.5,701.1 1140.5,701.6 1139.5,701.6 1139.5,701.4 1138.5,701.4 1138.5,701.1 1137.5,701.1 1137.5,701.6 1136.5,701.6 1136.5,701.4 1135.5,701.4 1135.5,701.1 1134.5,701.1 1134.5,701.6 1133.5,701.6 1133.5,694.7 1096.5,694.7 1096.5,697.9 1095.5,697.9 1095.5,701.4 1094.5,701.4 1094.5,701.5 1093.5,701.5 1093.5,701.1 1092.5,701.1 1092.5,701.3 1091.5,701.3 1091.5,701.6 1090.5,701.6 1090.5,701.5 1089.5,701.5 1089.5,701.4 1088.5,701.4 1088.5,701.1 1087.5,701.1 1087.5,701.3 1086.5,701.3 1086.5,701.2 1085.5,701.2 1085.5,701.4 1084.5,701.4 1084.5,701.2 1083.5,701.2 1083.5,701.3 1082.5,701.3 1082.5,701.4 1080.5,701.4 1080.5,701.3 1079.5,701.3 1079.5,701.2 1078.5,701.2 1078.5,701.4 1076.5,701.4 1076.5,701.5 1075.5,701.5 1075.5,701.6 1074.5,701.6 1074.5,701.5 1073.5,701.5 1073.5,701.3 1072.5,701.3 1072.5,701.6 1071.5,701.6 1071.5,701.2 1070.5,701.2 1070.5,694.7 1069.5,694.7Z" fill="#2364b4"/>
<path d="M1277.5,693.1 1278.5,693.1 1278.5,687.9 1279.5,687.9 1279.5,688.3 1280.5,688.3 1280.5,688 1282.5,688 1282.5,688.2 1283.5,688.2 1283.5,688.3 1284.5,688.3 1284.5,688 1285.5,688 1285.5,687.9 1286.5,687.9 1286.5,688 1289.5,688 1289.5,688.2 1290.5,688.2 1290.5,688.3 1291.5,688.3 1291.5,688.1 1292.5,688.1 1292.5,688 1293.5,688 1293.5,688.2 1294.5,688.2 1294.5,688.1 1296.5,688.1 1296.5,688.3 1297.5,688.3 1297.5,688.2 1298.5,688.2 1298.5,688 1299.5,688 1299.5,688.1 1300.5,688.1 1300.5,688.2 1301.5,688.2 1301.5,688.3 1303.5,688.3 1303.5,690.7 1304.5,690.7 1304.5,693.1 1341.5,693.1 1341.5,686.2 1342.5,686.2 1342.5,684.6 1343.5,684.6 1343.5,685.5 1344.5,685.5 1344.5,686.3 1345.5,686.3 1345.5,686.5 1347.5,686.5 1347.5,686.3 1348.5,686.3 1348.5,686.7 1350.5,686.7 1350.5,686.3 1351.5,686.3 1351.5,686.5 1352.5,686.5 1352.5,686.7 1353.5,686.7 1353.5,686.6 1354.5,686.6 1354.5,686.3 1355.5,686.3 1355.5,693.1 1393.5,693.1 1393.5,687.3 1394.5,687.3 1394.5,687 1395.5,687 1395.5,687.4 1396.5,687.4 1396.5,687.2 1397.5,687.2 1397.5,687.5 1398.5,687.5 1398.5,687.3 1399.5,687.3 1399.5,687.5 1400.5,687.5 1400.5,687.7 1401.5,687.7 1401.5,687.8 1404.5,687.8 1404.5,687.9 1405.5,687.9 1405.5,688.2 1406.5,688.2 1406.5,688 1407.5,688 1407.5,688.5 1408.5,688.5 1408.5,688.4 1409.5,688.4 1409.5,688.7 1410.5,688.7 1410.5,688.9 1411.5,688.9 1411.5,688.7 1412.5,688.7 1412.5,689 1413.5,689 1413.5,689.2 1414.5,689.2 1414.5,689.4 1415.5,689.4 1415.5,689.5 1416.5,689.5 1416.5,689.6 1417.5,689.6 1417.5,689.7 1418.5,689.7 1418.5,689.8 1419.5,689.8 1419.5,692.4 1420.5,692.4 1420.5,693.1 1445.5,693.1 1445.5,686.7 1446.5,686.7 1446.5,686.4 1447.5,686.4 1447.5,685.5 1448.5,685.5 1448.5,686.1 1449.5,686.1 1449.5,686.2 1450.5,686.2 1450.5,686.5 1452.5,686.5 1452.5,686.7 1453.5,686.7 1453.5,686.6 1454.5,686.6 1454.5,687.1 1456.5,687.1 1456.5,687.2 1457.5,687.2 1457.5,687.5 1458.5,687.5 1458.5,687.9 1459.5,687.9 1459.5,688.2 1460.5,688.2 1460.5,688.5 1461.5,688.5 1461.5,688.4 1462.5,688.4 1462.5,688.7 1463.5,688.7 1463.5,689.2 1465.5,689.2 1465.5,689.1 1466.5,689.1 1466.5,687.2 1467.5,687.2 1467.5,685.2 1468.5,685.2 1468.5,684.4 1469.5,684.4 1469.5,684.8 1470.5,684.8 1470.5,685.5 1471.5,685.5 1471.5,685.7 1472.5,685.7 1472.5,685.9 1473.5,685.9 1473.5,685.5 1475.5,685.5 1475.5,685.9 1476.5,685.9 1476.5,685.7 1477.5,685.7 1477.5,685.6 1478.5,685.6 1478.5,686 1479.5,686 1479.5,685.4 1481.5,685.4 1481.5,685.6 1482.5,685.6 1482.5,685.7 1483.5,685.7 L1483.5,701.6 1482.5,701.6 1482.5,701.5 1481.5,701.5 1481.5,701.1 1480.5,701.1 1480.5,701.4 1479.5,701.4 1479.5,701.3 1478.5,701.3 1478.5,701.5 1476.5,701.5 1476.5,701.2 1475.5,701.2 1475.5,701.3 1473.5,701.3 1473.5,701.6 1472.5,701.6 1472.5,701.2 1471.5,701.2 1471.5,701.6 1470.5,701.6 1470.5,701.4 1469.5,701.4 1469.5,701.3 1467.5,701.3 1467.5,699.5 1466.5,699.5 1466.5,697.9 1465.5,697.9 1465.5,697.8 1464.5,697.8 1464.5,698.2 1463.5,698.2 1463.5,698.7 1462.5,698.7 1462.5,699 1461.5,699 1461.5,699.3 1460.5,699.3 1460.5,699.4 1459.5,699.4 1459.5,699.9 1458.5,699.9 1458.5,700.2 1457.5,700.2 1457.5,700.5 1456.5,700.5 1456.5,700.6 1455.5,700.6 1455.5,700.4 1454.5,700.4 1454.5,700.5 1453.5,700.5 1453.5,700.7 1451.5,700.7 1451.5,700.3 1450.5,700.3 1450.5,700.6 1449.5,700.6 1449.5,700.4 1448.5,700.4 1448.5,700.6 1447.5,700.6 1447.5,700.3 1446.5,700.3 1446.5,700.4 1445.5,700.4 1445.5,694.7 1420.5,694.7 1420.5,695.7 1419.5,695.7 1419.5,699 1417.5,699 1417.5,699.4 1416.5,699.4 1416.5,699.7 1415.5,699.7 1415.5,699.9 1414.5,699.9 1414.5,699.7 1413.5,699.7 1413.5,699.9 1412.5,699.9 1412.5,700 1411.5,700 1411.5,700.5 1410.5,700.5 1410.5,700.6 1409.5,700.6 1409.5,700.8 1408.5,700.8 1408.5,701.1 1407.5,701.1 1407.5,700.9 1406.5,700.9 1406.5,701.4 1404.5,701.4 1404.5,701.5 1403.5,701.5 1403.5,702.1 1402.5,702.1 1402.5,701.9 1401.5,701.9 1401.5,702.6 1400.5,702.6 1400.5,702.5 1399.5,702.5 1399.5,703.2 1398.5,703.2 1398.5,703.1 1397.5,703.1 1397.5,703 1396.5,703 1396.5,703.7 1395.5,703.7 1395.5,703.4 1393.5,703.4 1393.5,694.7 1355.5,694.7 1355.5,701.4 1354.5,701.4 1354.5,701.5 1352.5,701.5 1352.5,701.4 1351.5,701.4 1351.5,701.5 1349.5,701.5 1349.5,701.4 1348.5,701.4 1348.5,701.6 1347.5,701.6 1347.5,701.4 1345.5,701.4 1345.5,701.1 1344.5,701.1 1344.5,701.4 1343.5,701.4 1343.5,701.1 1341.5,701.1 1341.5,694.7 1304.5,694.7 1304.5,698 1303.5,698 1303.5,701.1 1302.5,701.1 1302.5,701.6 1301.5,701.6 1301.5,701.2 1300.5,701.2 1300.5,701.3 1298.5,701.3 1298.5,701.2 1297.5,701.2 1297.5,701.4 1296.5,701.4 1296.5,701.2 1295.5,701.2 1295.5,701.4 1294.5,701.4 1294.5,701.6 1293.5,701.6 1293.5,701.2 1292.5,701.2 1292.5,701.6 1290.5,701.6 1290.5,701.2 1289.5,701.2 1289.5,701.6 1288.5,701.6 1288.5,701.3 1287.5,701.3 1287.5,701.5 1286.5,701.5 1286.5,701.1 1285.5,701.1 1285.5,701.6 1284.5,701.6 1284.5,701.4 1283.5,701.4 1283.5,701.5 1282.5,701.5 1282.5,701.2 1281.5,701.2 1281.5,701.5 1280.5,701.5 1280.5,701.3 1279.5,701.3 1279.5,701.2 1278.5,701.2 1278.5,694.7 1277.5,694.7Z" fill="#2364b4"/>
<text transform="translate(455.6,659.7) scale(1.06,1)" class="rl">Back in the...Electric Bass</text>
<rect x="551" y="738.6" width="101.7" height="89" rx="4.5" fill="#07346f"/>
<path d="M551.5,792.5 574.5,792.5 574.5,786.8 575.5,786.8 575.5,786.6 576.5,786.6 576.5,786.4 577.5,786.4 577.5,786.5 578.5,786.5 578.5,786.4 579.5,786.4 579.5,786.3 580.5,786.3 580.5,786.5 581.5,786.5 581.5,786.6 582.5,786.6 582.5,786.4 583.5,786.4 583.5,786.5 585.5,786.5 585.5,786.4 586.5,786.4 586.5,786.5 587.5,786.5 587.5,786.4 588.5,786.4 588.5,786.5 590.5,786.5 590.5,786.7 591.5,786.7 591.5,786.8 592.5,786.8 592.5,787.1 593.5,787.1 593.5,788.4 594.5,788.4 594.5,791.2 595.5,791.2 595.5,791.4 596.5,791.4 596.5,791.7 597.5,791.7 597.5,791.9 598.5,791.9 598.5,792 599.5,792 599.5,792.2 600.5,792.2 600.5,791.2 601.5,791.2 601.5,790.2 602.5,790.2 602.5,790.1 604.5,790.1 604.5,790.2 606.5,790.2 606.5,790.1 608.5,790.1 608.5,790 612.5,790 612.5,789.4 613.5,789.4 613.5,788.6 615.5,788.6 615.5,788.7 617.5,788.7 617.5,788.6 618.5,788.6 618.5,788.7 619.5,788.7 619.5,789.7 620.5,789.7 620.5,791.7 621.5,791.7 621.5,792.5 640.5,792.5 640.5,791.4 641.5,791.4 641.5,791.5 642.5,791.5 642.5,791.6 643.5,791.6 643.5,791.7 644.5,791.7 644.5,791.8 645.5,791.8 645.5,792.5 652.5,792.5 L652.5,794.1 621.5,794.1 621.5,794.7 620.5,794.7 620.5,796.1 619.5,796.1 619.5,796.9 615.5,796.9 615.5,797 612.5,797 612.5,796.8 611.5,796.8 611.5,797 610.5,797 610.5,796.9 608.5,796.9 608.5,797 607.5,797 607.5,796.9 604.5,796.9 604.5,796.8 603.5,796.8 603.5,797 601.5,797 601.5,795.6 600.5,795.6 600.5,794.3 596.5,794.3 596.5,794.8 595.5,794.8 595.5,795.3 594.5,795.3 594.5,797.5 593.5,797.5 593.5,798.5 592.5,798.5 592.5,798.6 591.5,798.6 591.5,798.9 590.5,798.9 590.5,798.8 589.5,798.8 589.5,800.4 588.5,800.4 588.5,801.5 587.5,801.5 587.5,801.8 586.5,801.8 586.5,801.6 585.5,801.6 585.5,801.5 584.5,801.5 584.5,801.6 583.5,801.6 583.5,801.7 582.5,801.7 582.5,801.6 581.5,801.6 581.5,801.8 580.5,801.8 580.5,801.7 579.5,801.7 579.5,801.5 578.5,801.5 578.5,801.6 576.5,801.6 576.5,801.7 574.5,801.7 574.5,794.1 551.5,794.1Z" fill="#4094fd"/>
<text transform="translate(560.4,759.1) scale(1.06,1)" class="rl">Back...ax 01</text>
<rect x="1278.1" y="738.6" width="206.2" height="89" rx="4.5" fill="#07346f"/>
<path d="M1278.5,788.7 1279.5,788.7 1279.5,789.1 1280.5,789.1 1280.5,789 1281.5,789 1281.5,789.2 1282.5,789.2 1282.5,788.7 1283.5,788.7 1283.5,788.6 1284.5,788.6 1284.5,789.1 1285.5,789.1 1285.5,788.6 1286.5,788.6 1286.5,791.2 1287.5,791.2 1287.5,791.3 1288.5,791.3 1288.5,791.2 1289.5,791.2 1289.5,791.3 1290.5,791.3 1290.5,789 1291.5,789 1291.5,788.8 1292.5,788.8 1292.5,788.6 1293.5,788.6 1293.5,788.7 1294.5,788.7 1294.5,788.8 1295.5,788.8 1295.5,788.6 1296.5,788.6 1296.5,788.7 1297.5,788.7 1297.5,789.1 1298.5,789.1 1298.5,788.7 1300.5,788.7 1300.5,788.8 1301.5,788.8 1301.5,789.1 1302.5,789.1 1302.5,788.8 1303.5,788.8 1303.5,788.7 1305.5,788.7 1305.5,789.1 1306.5,789.1 1306.5,788.6 1307.5,788.6 1307.5,788.7 1308.5,788.7 1308.5,789 1309.5,789 1309.5,788.8 1311.5,788.8 1311.5,789 1312.5,789 1312.5,788.6 1313.5,788.6 1313.5,788.7 1314.5,788.7 1314.5,788.4 1315.5,788.4 1315.5,787.5 1316.5,787.5 1316.5,787.6 1317.5,787.6 1317.5,787.7 1318.5,787.7 1318.5,787.9 1319.5,787.9 1319.5,788.4 1322.5,788.4 1322.5,788.2 1323.5,788.2 1323.5,788.6 1324.5,788.6 1324.5,788.2 1325.5,788.2 1325.5,790.2 1326.5,790.2 1326.5,791.2 1327.5,791.2 1327.5,791.3 1328.5,791.3 1328.5,789.2 1329.5,789.2 1329.5,787.2 1330.5,787.2 1330.5,786.9 1331.5,786.9 1331.5,787.4 1332.5,787.4 1332.5,787.5 1333.5,787.5 1333.5,787.3 1334.5,787.3 1334.5,787.1 1336.5,787.1 1336.5,787.6 1337.5,787.6 1337.5,787.2 1338.5,787.2 1338.5,787.3 1339.5,787.3 1339.5,787.6 1340.5,787.6 1340.5,787.7 1341.5,787.7 1341.5,787.6 1342.5,787.6 1342.5,787.3 1344.5,787.3 1344.5,787.4 1345.5,787.4 1345.5,787.5 1346.5,787.5 1346.5,787.9 1347.5,787.9 1347.5,788 1348.5,788 1348.5,787.6 1349.5,787.6 1349.5,787.9 1350.5,787.9 1350.5,788.2 1351.5,788.2 1351.5,788.5 1352.5,788.5 1352.5,790.3 1353.5,790.3 1353.5,791.1 1355.5,791.1 1355.5,791 1357.5,791 1357.5,791.3 1358.5,791.3 1358.5,791.1 1359.5,791.1 1359.5,791.2 1360.5,791.2 1360.5,791.4 1361.5,791.4 1361.5,791.3 1363.5,791.3 1363.5,791.2 1364.5,791.2 1364.5,792.5 1367.5,792.5 1367.5,791.7 1385.5,791.7 1385.5,792.5 1391.5,792.5 1391.5,787.7 1394.5,787.7 1394.5,787.3 1396.5,787.3 1396.5,787.8 1397.5,787.8 1397.5,787.2 1398.5,787.2 1398.5,787.4 1399.5,787.4 1399.5,792.5 1405.5,792.5 1405.5,791.2 1406.5,791.2 1406.5,790.1 1407.5,790.1 1407.5,790.2 1408.5,790.2 1408.5,790.1 1409.5,790.1 1409.5,790.2 1410.5,790.2 1410.5,790.8 1411.5,790.8 1411.5,791.6 1412.5,791.6 1412.5,792.1 1413.5,792.1 1413.5,792.5 1418.5,792.5 1418.5,792 1424.5,792 1424.5,792.5 1444.5,792.5 1444.5,788.6 1445.5,788.6 1445.5,788.3 1446.5,788.3 1446.5,788.2 1447.5,788.2 1447.5,788.1 1448.5,788.1 1448.5,788.7 1449.5,788.7 1449.5,788.1 1450.5,788.1 1450.5,788.3 1451.5,788.3 1451.5,788 1452.5,788 1452.5,788.4 1453.5,788.4 1453.5,788.2 1454.5,788.2 1454.5,792.3 1457.5,792.3 1457.5,787 1458.5,787 1458.5,787.4 1459.5,787.4 1459.5,787.1 1460.5,787.1 1460.5,787.7 1461.5,787.7 1461.5,787.4 1462.5,787.4 1462.5,787.7 1463.5,787.7 1463.5,787.2 1464.5,787.2 1464.5,787.1 1465.5,787.1 1465.5,787.6 1466.5,787.6 1466.5,787.2 1467.5,787.2 1467.5,787.4 1468.5,787.4 1468.5,787.9 1469.5,787.9 1469.5,788 1470.5,788 1470.5,788.5 1471.5,788.5 1471.5,788.9 1472.5,788.9 1472.5,789.4 1473.5,789.4 1473.5,790.2 1474.5,790.2 1474.5,790.7 1475.5,790.7 1475.5,791 1476.5,791 1476.5,791.4 1477.5,791.4 1477.5,791.8 1485.5,791.8 L1485.5,794.8 1477.5,794.8 1477.5,795.2 1476.5,795.2 1476.5,795.6 1475.5,795.6 1475.5,796 1474.5,796 1474.5,796.5 1473.5,796.5 1473.5,796.9 1472.5,796.9 1472.5,797.3 1471.5,797.3 1471.5,797.4 1470.5,797.4 1470.5,797.8 1469.5,797.8 1469.5,798.4 1468.5,798.4 1468.5,798.5 1467.5,798.5 1467.5,799 1466.5,799 1466.5,798.7 1465.5,798.7 1465.5,798.8 1464.5,798.8 1464.5,799.1 1463.5,799.1 1463.5,798.5 1462.5,798.5 1462.5,798.9 1461.5,798.9 1461.5,798.8 1460.5,798.8 1460.5,799.1 1459.5,799.1 1459.5,798.7 1458.5,798.7 1458.5,798.5 1457.5,798.5 1457.5,794.3 1454.5,794.3 1454.5,798.5 1453.5,798.5 1453.5,798.8 1452.5,798.8 1452.5,798.9 1451.5,798.9 1451.5,798.5 1450.5,798.5 1450.5,798.6 1449.5,798.6 1449.5,798.7 1448.5,798.7 1448.5,798.9 1447.5,798.9 1447.5,798.6 1446.5,798.6 1446.5,799.1 1445.5,799.1 1445.5,798.8 1444.5,798.8 1444.5,794.1 1413.5,794.1 1413.5,794.4 1412.5,794.4 1412.5,794.9 1411.5,794.9 1411.5,795.3 1410.5,795.3 1410.5,795.7 1409.5,795.7 1409.5,796 1408.5,796 1408.5,796.1 1407.5,796.1 1407.5,796.2 1406.5,796.2 1406.5,795.2 1405.5,795.2 1405.5,794.1 1399.5,794.1 1399.5,799.5 1398.5,799.5 1398.5,799.4 1397.5,799.4 1397.5,800 1396.5,800 1396.5,799.3 1395.5,799.3 1395.5,799.8 1394.5,799.8 1394.5,800 1393.5,800 1393.5,799.4 1392.5,799.4 1392.5,799.6 1391.5,799.6 1391.5,794.1 1385.5,794.1 1385.5,794.9 1367.5,794.9 1367.5,794.1 1364.5,794.1 1364.5,795.3 1363.5,795.3 1363.5,795.4 1362.5,795.4 1362.5,795.3 1360.5,795.3 1360.5,795.4 1359.5,795.4 1359.5,795.5 1358.5,795.5 1358.5,795.3 1357.5,795.3 1357.5,795.5 1356.5,795.5 1356.5,795.4 1353.5,795.4 1353.5,796.6 1352.5,796.6 1352.5,798.2 1351.5,798.2 1351.5,798.3 1350.5,798.3 1350.5,798.1 1349.5,798.1 1349.5,798.7 1348.5,798.7 1348.5,798.6 1347.5,798.6 1347.5,798.8 1346.5,798.8 1346.5,798.5 1345.5,798.5 1345.5,799.1 1344.5,799.1 1344.5,799 1342.5,799 1342.5,798.5 1341.5,798.5 1341.5,799 1339.5,799 1339.5,798.6 1338.5,798.6 1338.5,798.7 1337.5,798.7 1337.5,799 1336.5,799 1336.5,798.5 1335.5,798.5 1335.5,798.7 1334.5,798.7 1334.5,798.5 1333.5,798.5 1333.5,798.6 1332.5,798.6 1332.5,798.7 1331.5,798.7 1331.5,798.6 1330.5,798.6 1330.5,799.1 1329.5,799.1 1329.5,797 1328.5,797 1328.5,795.2 1326.5,795.2 1326.5,796.5 1325.5,796.5 1325.5,798.8 1324.5,798.8 1324.5,798.5 1323.5,798.5 1323.5,798.8 1321.5,798.8 1321.5,798.4 1319.5,798.4 1319.5,798.6 1318.5,798.6 1318.5,798.1 1317.5,798.1 1317.5,798.7 1316.5,798.7 1316.5,798.2 1315.5,798.2 1315.5,797.9 1314.5,797.9 1314.5,797.1 1312.5,797.1 1312.5,797.5 1311.5,797.5 1311.5,797.4 1310.5,797.4 1310.5,797 1309.5,797 1309.5,797.4 1308.5,797.4 1308.5,797 1307.5,797 1307.5,797.3 1306.5,797.3 1306.5,797.1 1305.5,797.1 1305.5,797.3 1304.5,797.3 1304.5,797.2 1303.5,797.2 1303.5,797.1 1302.5,797.1 1302.5,797.5 1301.5,797.5 1301.5,797.2 1300.5,797.2 1300.5,797.5 1299.5,797.5 1299.5,797.2 1298.5,797.2 1298.5,797.4 1297.5,797.4 1297.5,797.3 1296.5,797.3 1296.5,797 1295.5,797 1295.5,797.4 1294.5,797.4 1294.5,797.5 1293.5,797.5 1293.5,797 1292.5,797 1292.5,797.2 1291.5,797.2 1291.5,797 1290.5,797 1290.5,795.2 1286.5,795.2 1286.5,798.3 1285.5,798.3 1285.5,798.2 1284.5,798.2 1284.5,798.5 1281.5,798.5 1281.5,798.1 1280.5,798.1 1280.5,797.9 1279.5,797.9 1279.5,798.3 1278.5,798.3Z" fill="#4094fd"/>
<text transform="translate(1286.8,759.1) scale(1.06,1)" class="rl">Back in the Day Sax 02</text>
<rect x="448" y="838" width="204.7" height="89" rx="4.5" fill="#07346f"/>
<path d="M448.5,888 449.5,888 449.5,887.5 450.5,887.5 450.5,888.6 451.5,888.6 451.5,887.8 452.5,887.8 452.5,888.1 453.5,888.1 453.5,887.9 454.5,887.9 454.5,888.2 455.5,888.2 455.5,888.3 456.5,888.3 456.5,888.6 457.5,888.6 457.5,888.4 458.5,888.4 458.5,888.9 459.5,888.9 459.5,888.3 460.5,888.3 460.5,888.6 461.5,888.6 461.5,888.5 462.5,888.5 462.5,887.4 463.5,887.4 463.5,888.8 464.5,888.8 464.5,890.5 465.5,890.5 465.5,891.9 493.5,891.9 493.5,890.8 494.5,890.8 494.5,889.6 495.5,889.6 495.5,890 496.5,890 496.5,890.6 497.5,890.6 497.5,891.4 498.5,891.4 498.5,891.9 505.5,891.9 505.5,890.6 506.5,890.6 506.5,889.4 507.5,889.4 507.5,889.9 508.5,889.9 508.5,890.7 509.5,890.7 509.5,889.5 510.5,889.5 510.5,891 511.5,891 511.5,891.9 518.5,891.9 518.5,891.4 519.5,891.4 519.5,889.2 520.5,889.2 520.5,888.5 521.5,888.5 521.5,888.8 522.5,888.8 522.5,888.3 523.5,888.3 523.5,887.1 524.5,887.1 524.5,887 525.5,887 525.5,888.3 526.5,888.3 526.5,886.9 527.5,886.9 527.5,888.1 528.5,888.1 528.5,887.1 530.5,887.1 530.5,887.6 531.5,887.6 531.5,888.2 532.5,888.2 532.5,887.5 533.5,887.5 533.5,888 534.5,888 534.5,887.5 535.5,887.5 535.5,890.3 536.5,890.3 536.5,891.9 544.5,891.9 544.5,887.2 545.5,887.2 545.5,888 546.5,888 546.5,887.7 547.5,887.7 547.5,887.3 548.5,887.3 548.5,888 549.5,888 549.5,888.5 550.5,888.5 550.5,886.9 551.5,886.9 551.5,887.2 552.5,887.2 552.5,887.6 553.5,887.6 553.5,889.1 554.5,889.1 554.5,889.2 555.5,889.2 555.5,890.6 556.5,890.6 556.5,891.9 561.5,891.9 561.5,888.6 562.5,888.6 562.5,888.9 563.5,888.9 563.5,888.6 564.5,888.6 564.5,888.3 565.5,888.3 565.5,887.5 566.5,887.5 566.5,888.3 567.5,888.3 567.5,887.8 568.5,887.8 568.5,888 569.5,888 569.5,888.3 570.5,888.3 570.5,887.8 571.5,887.8 571.5,887.4 572.5,887.4 572.5,887.7 573.5,887.7 573.5,888 574.5,888 574.5,890.3 575.5,890.3 575.5,891.9 595.5,891.9 595.5,891.3 596.5,891.3 596.5,890.2 597.5,890.2 597.5,888.8 598.5,888.8 598.5,887.9 599.5,887.9 599.5,889.8 600.5,889.8 600.5,890.6 601.5,890.6 601.5,891.9 609.5,891.9 609.5,889.7 610.5,889.7 610.5,887.4 611.5,887.4 611.5,888.4 612.5,888.4 612.5,887.7 613.5,887.7 613.5,888.4 614.5,888.4 614.5,887.8 615.5,887.8 615.5,887.5 616.5,887.5 616.5,887.8 617.5,887.8 617.5,888.9 618.5,888.9 618.5,887.9 619.5,887.9 619.5,887.6 620.5,887.6 620.5,888.2 622.5,888.2 622.5,888.7 623.5,888.7 623.5,888.6 624.5,888.6 624.5,887.6 625.5,887.6 625.5,887.7 626.5,887.7 626.5,888.2 627.5,888.2 627.5,888.5 628.5,888.5 628.5,888.6 629.5,888.6 629.5,888.7 630.5,888.7 630.5,887.6 631.5,887.6 631.5,888.6 632.5,888.6 632.5,888.5 633.5,888.5 633.5,887.8 634.5,887.8 634.5,888.5 635.5,888.5 635.5,888.6 636.5,888.6 636.5,888.4 637.5,888.4 637.5,888.8 638.5,888.8 638.5,888.1 639.5,888.1 639.5,887.9 640.5,887.9 640.5,888.5 641.5,888.5 641.5,887.5 642.5,887.5 642.5,888.5 643.5,888.5 643.5,888 644.5,888 644.5,888.3 645.5,888.3 645.5,887.8 647.5,887.8 647.5,887.9 648.5,887.9 648.5,887.4 649.5,887.4 649.5,887.7 650.5,887.7 650.5,888 651.5,888 651.5,887.5 652.5,887.5 L652.5,897.3 651.5,897.3 651.5,896.9 650.5,896.9 650.5,897.8 649.5,897.8 649.5,897 648.5,897 648.5,897.1 647.5,897.1 647.5,897.8 646.5,897.8 646.5,897.5 645.5,897.5 645.5,897.7 644.5,897.7 644.5,897 643.5,897 643.5,897.8 642.5,897.8 642.5,897.9 641.5,897.9 641.5,896.6 640.5,896.6 640.5,897.7 639.5,897.7 639.5,897.1 638.5,897.1 638.5,896.6 637.5,896.6 637.5,897.1 636.5,897.1 636.5,896.8 635.5,896.8 635.5,897.8 634.5,897.8 634.5,897.9 633.5,897.9 633.5,897.5 632.5,897.5 632.5,897.1 631.5,897.1 631.5,897.9 630.5,897.9 630.5,897.5 629.5,897.5 629.5,898 628.5,898 628.5,897 627.5,897 627.5,897.3 626.5,897.3 626.5,896.8 625.5,896.8 625.5,896.7 624.5,896.7 624.5,897.2 623.5,897.2 623.5,896.8 622.5,896.8 622.5,897.2 621.5,897.2 621.5,897.8 620.5,897.8 620.5,896.7 619.5,896.7 619.5,897.1 618.5,897.1 618.5,896.6 617.5,896.6 617.5,897.2 616.5,897.2 616.5,897.9 615.5,897.9 615.5,897.6 614.5,897.6 614.5,897.2 611.5,897.2 611.5,897.6 610.5,897.6 610.5,896 609.5,896 609.5,893.5 601.5,893.5 601.5,894.8 600.5,894.8 600.5,895.8 599.5,895.8 599.5,897.6 598.5,897.6 598.5,895.7 597.5,895.7 597.5,895.6 596.5,895.6 596.5,894.1 595.5,894.1 595.5,893.5 575.5,893.5 575.5,895.1 574.5,895.1 574.5,897.8 573.5,897.8 573.5,896.7 572.5,896.7 572.5,897.5 571.5,897.5 571.5,897.7 570.5,897.7 570.5,897 569.5,897 569.5,896.7 568.5,896.7 568.5,897.1 567.5,897.1 567.5,896.7 566.5,896.7 566.5,897.5 565.5,897.5 565.5,897.4 564.5,897.4 564.5,896.5 563.5,896.5 563.5,897 562.5,897 562.5,897.4 561.5,897.4 561.5,893.5 556.5,893.5 556.5,894.8 555.5,894.8 555.5,896.6 554.5,896.6 554.5,897 553.5,897 553.5,896.9 552.5,896.9 552.5,897.5 551.5,897.5 551.5,898.2 550.5,898.2 550.5,896.9 549.5,896.9 549.5,898.3 548.5,898.3 548.5,898.4 547.5,898.4 547.5,897.9 546.5,897.9 546.5,897.3 545.5,897.3 545.5,897.5 544.5,897.5 544.5,893.5 536.5,893.5 536.5,895.1 535.5,895.1 535.5,897.7 534.5,897.7 534.5,898.3 533.5,898.3 533.5,898.1 532.5,898.1 532.5,898.4 531.5,898.4 531.5,898 530.5,898 530.5,898.3 529.5,898.3 529.5,897.5 528.5,897.5 528.5,897.4 527.5,897.4 527.5,897.6 526.5,897.6 526.5,898.5 525.5,898.5 525.5,897.7 524.5,897.7 524.5,897.9 523.5,897.9 523.5,898 522.5,898 522.5,897.4 521.5,897.4 521.5,897.5 520.5,897.5 520.5,896.6 519.5,896.6 519.5,894 518.5,894 518.5,893.5 511.5,893.5 511.5,894.4 510.5,894.4 510.5,895.7 509.5,895.7 509.5,894.7 508.5,894.7 508.5,895.3 507.5,895.3 507.5,896.2 506.5,896.2 506.5,894.8 505.5,894.8 505.5,893.5 498.5,893.5 498.5,894 497.5,894 497.5,894.8 496.5,894.8 496.5,895.5 495.5,895.5 495.5,895.7 494.5,895.7 494.5,894.6 493.5,894.6 493.5,893.5 465.5,893.5 465.5,895.1 464.5,895.1 464.5,897.5 463.5,897.5 463.5,897.4 462.5,897.4 462.5,897.9 461.5,897.9 461.5,898.2 460.5,898.2 460.5,897.6 458.5,897.6 458.5,897.2 457.5,897.2 457.5,898 456.5,898 456.5,896.9 455.5,896.9 455.5,897.9 454.5,897.9 454.5,898 453.5,898 453.5,897.1 452.5,897.1 452.5,898.5 451.5,898.5 451.5,898 450.5,898 450.5,897.2 449.5,897.2 449.5,898.5 448.5,898.5Z" fill="#4094fd"/>
<text transform="translate(455.6,858.5) scale(1.06,1)" class="rl">Back in the...tric Piano 03</text>
<rect x="861.9" y="842.5" width="297.5" height="80" fill="#07346f"/>
<rect x="861.9" y="838" width="208.1" height="89" rx="4.5" fill="#07346f"/>
<rect x="1070" y="838" width="89.4" height="89" rx="4.5" fill="#07346f"/>
<path d="M861.5,889.2 862.5,889.2 862.5,889 863.5,889 863.5,889.6 864.5,889.6 864.5,889 865.5,889 865.5,889.1 866.5,889.1 866.5,889.5 867.5,889.5 867.5,889.2 868.5,889.2 868.5,889.6 869.5,889.6 869.5,889.8 870.5,889.8 870.5,889.4 871.5,889.4 871.5,889.3 872.5,889.3 872.5,889.2 874.5,889.2 874.5,889.3 875.5,889.3 875.5,889.4 876.5,889.4 876.5,889.1 877.5,889.1 877.5,889.6 878.5,889.6 878.5,889.3 879.5,889.3 879.5,889.6 880.5,889.6 880.5,889.3 881.5,889.3 881.5,889.5 882.5,889.5 882.5,889.6 883.5,889.6 883.5,891.2 885.5,891.2 885.5,884.2 886.5,884.2 886.5,891.2 902.5,891.2 902.5,891.1 919.5,891.1 919.5,891.9 932.5,891.9 932.5,891.2 933.5,891.2 933.5,891.6 934.5,891.6 934.5,891.9 942.5,891.9 942.5,891.2 943.5,891.2 943.5,891.6 944.5,891.6 944.5,891.9 950.5,891.9 950.5,890.1 951.5,890.1 951.5,888.9 952.5,888.9 952.5,889 953.5,889 953.5,888.9 954.5,888.9 954.5,888.6 955.5,888.6 955.5,889 957.5,889 957.5,889.3 958.5,889.3 958.5,888.6 959.5,888.6 959.5,888.5 960.5,888.5 960.5,888.8 961.5,888.8 961.5,889.1 962.5,889.1 962.5,889.8 965.5,889.8 965.5,889.6 966.5,889.6 966.5,889.8 967.5,889.8 967.5,889.9 968.5,889.9 968.5,890 969.5,890 969.5,890.1 970.5,890.1 970.5,889.8 971.5,889.8 971.5,890.1 972.5,890.1 972.5,889.8 973.5,889.8 973.5,889.7 974.5,889.7 974.5,890 975.5,890 975.5,889.8 976.5,889.8 976.5,889.6 977.5,889.6 977.5,890 978.5,890 978.5,889.7 981.5,889.7 981.5,891.5 984.5,891.5 984.5,884 985.5,884 985.5,891.5 986.5,891.5 986.5,891.2 987.5,891.2 987.5,891 988.5,891 988.5,890.7 989.5,890.7 989.5,891 990.5,891 990.5,891.2 991.5,891.2 991.5,891.4 992.5,891.4 992.5,891.7 993.5,891.7 993.5,891.4 994.5,891.4 994.5,891 995.5,891 995.5,890.7 996.5,890.7 996.5,891.1 1024.5,891.1 1024.5,887 1025.5,887 1025.5,890.1 1026.5,890.1 1026.5,891.1 1037.5,891.1 1037.5,891.9 1041.5,891.9 1041.5,891.2 1042.5,891.2 1042.5,889.6 1043.5,889.6 1043.5,889.1 1044.5,889.1 1044.5,889.4 1045.5,889.4 1045.5,889.3 1046.5,889.3 1046.5,889.8 1047.5,889.8 1047.5,889.2 1048.5,889.2 1048.5,889.7 1049.5,889.7 1049.5,889.2 1050.5,889.2 1050.5,889.7 1051.5,889.7 1051.5,889.4 1052.5,889.4 1052.5,889.8 1053.5,889.8 1053.5,889.6 1054.5,889.6 1054.5,889 1055.5,889 1055.5,889.1 1056.5,889.1 1056.5,889.8 1057.5,889.8 1057.5,889.2 1059.5,889.2 1059.5,889.6 1060.5,889.6 1060.5,889.8 1061.5,889.8 1061.5,889.1 1062.5,889.1 1062.5,889.2 1064.5,889.2 1064.5,889.5 1065.5,889.5 1065.5,889.6 1066.5,889.6 1066.5,889.3 1067.5,889.3 1067.5,891.9 1069.5,891.9 L1069.5,893.5 1067.5,893.5 1067.5,896.3 1066.5,896.3 1066.5,896.9 1065.5,896.9 1065.5,896.8 1064.5,896.8 1064.5,896 1063.5,896 1063.5,896.5 1062.5,896.5 1062.5,896.8 1061.5,896.8 1061.5,896.7 1060.5,896.7 1060.5,896.1 1059.5,896.1 1059.5,896.8 1058.5,896.8 1058.5,896.5 1057.5,896.5 1057.5,896.8 1056.5,896.8 1056.5,896.3 1055.5,896.3 1055.5,896.7 1054.5,896.7 1054.5,896.9 1053.5,896.9 1053.5,896.4 1052.5,896.4 1052.5,896 1051.5,896 1051.5,896.3 1050.5,896.3 1050.5,896.6 1049.5,896.6 1049.5,896.8 1048.5,896.8 1048.5,896.7 1047.5,896.7 1047.5,896.6 1046.5,896.6 1046.5,896.3 1045.5,896.3 1045.5,896.1 1044.5,896.1 1044.5,896.3 1043.5,896.3 1043.5,896.8 1042.5,896.8 1042.5,893.7 1041.5,893.7 1041.5,893.5 996.5,893.5 996.5,893.7 995.5,893.7 995.5,894 994.5,894 994.5,894.4 993.5,894.4 993.5,894.7 992.5,894.7 992.5,894.8 991.5,894.8 991.5,895 990.5,895 990.5,895.1 989.5,895.1 989.5,895.2 988.5,895.2 988.5,894.8 987.5,894.8 987.5,894.3 986.5,894.3 986.5,893.9 981.5,893.9 981.5,894.7 976.5,894.7 976.5,894.8 967.5,894.8 967.5,894.9 962.5,894.9 962.5,897.2 961.5,897.2 961.5,897.9 960.5,897.9 960.5,898 959.5,898 959.5,897.2 957.5,897.2 957.5,898 956.5,898 956.5,897.9 955.5,897.9 955.5,897.5 954.5,897.5 954.5,896.8 953.5,896.8 953.5,897.6 952.5,897.6 952.5,897.2 951.5,897.2 951.5,895.9 950.5,895.9 950.5,893.5 909.5,893.5 909.5,893.6 902.5,893.6 902.5,893.7 896.5,893.7 896.5,893.8 890.5,893.8 890.5,893.9 883.5,893.9 883.5,895.8 882.5,895.8 882.5,896.2 881.5,896.2 881.5,895.6 880.5,895.6 880.5,896.4 879.5,896.4 879.5,896.2 878.5,896.2 878.5,895.6 876.5,895.6 876.5,896.4 875.5,896.4 875.5,896.1 874.5,896.1 874.5,895.8 873.5,895.8 873.5,895.7 870.5,895.7 870.5,896 869.5,896 869.5,896.3 868.5,896.3 868.5,895.8 867.5,895.8 867.5,896 866.5,896 866.5,895.7 865.5,895.7 865.5,895.6 864.5,895.6 864.5,895.7 863.5,895.7 863.5,895.9 861.5,895.9Z" fill="#4094fd"/>
<path d="M1070.5,889.2 1071.5,889.2 1071.5,889 1072.5,889 1072.5,889.6 1073.5,889.6 1073.5,889 1074.5,889 1074.5,889.1 1075.5,889.1 1075.5,889.5 1076.5,889.5 1076.5,889.2 1077.5,889.2 1077.5,889.6 1078.5,889.6 1078.5,889.8 1079.5,889.8 1079.5,889.4 1080.5,889.4 1080.5,889.3 1081.5,889.3 1081.5,889.2 1083.5,889.2 1083.5,889.3 1084.5,889.3 1084.5,889.4 1085.5,889.4 1085.5,889.1 1086.5,889.1 1086.5,889.6 1087.5,889.6 1087.5,889.3 1088.5,889.3 1088.5,889.6 1089.5,889.6 1089.5,889.3 1090.5,889.3 1090.5,889.5 1091.5,889.5 1091.5,891.2 1093.5,891.2 1093.5,884.5 1094.5,884.5 1094.5,891.2 1110.5,891.2 1110.5,891.1 1127.5,891.1 1127.5,891.9 1140.5,891.9 1140.5,891.2 1141.5,891.2 1141.5,891.6 1142.5,891.6 1142.5,891.9 1150.5,891.9 1150.5,891.2 1151.5,891.2 1151.5,891.6 1152.5,891.6 1152.5,891.9 1158.5,891.9 1158.5,889.8 1159.5,889.8 L1159.5,896.1 1158.5,896.1 1158.5,893.5 1117.5,893.5 1117.5,893.6 1110.5,893.6 1110.5,893.7 1104.5,893.7 1104.5,893.8 1098.5,893.8 1098.5,893.9 1091.5,893.9 1091.5,896.1 1090.5,896.1 1090.5,895.7 1089.5,895.7 1089.5,895.8 1088.5,895.8 1088.5,895.9 1087.5,895.9 1087.5,896.1 1086.5,896.1 1086.5,896.3 1085.5,896.3 1085.5,896.1 1082.5,896.1 1082.5,895.8 1081.5,895.8 1081.5,896.1 1080.5,896.1 1080.5,896.4 1079.5,896.4 1079.5,896.3 1078.5,896.3 1078.5,895.6 1077.5,895.6 1077.5,895.9 1075.5,895.9 1075.5,896.3 1074.5,896.3 1074.5,896 1071.5,896 1071.5,895.6 1070.5,895.6Z" fill="#2364b4"/>
<text transform="translate(870.9,858.5) scale(1.06,1)" class="rl">Back in the D...tric Piano 01</text>
<rect x="1070" y="941.9" width="414.3" height="80" fill="#07346f"/>
<rect x="1070" y="937.4" width="207.2" height="89" rx="4.5" fill="#07346f"/>
<rect x="1277.2" y="937.4" width="207.1" height="89" rx="4.5" fill="#07346f"/>
<path d="M1069.5,991.1 1070.5,991.1 1070.5,990.9 1071.5,990.9 1071.5,990 1072.5,990 1072.5,989.9 1074.5,989.9 1074.5,989.6 1075.5,989.6 1075.5,989.9 1076.5,989.9 1076.5,989.7 1078.5,989.7 1078.5,989.9 1081.5,989.9 1081.5,990 1082.5,990 1082.5,989.6 1084.5,989.6 1084.5,989.8 1085.5,989.8 1085.5,989.9 1086.5,989.9 1086.5,989.7 1087.5,989.7 1087.5,989.8 1088.5,989.8 1088.5,989.9 1089.5,989.9 1089.5,989.8 1091.5,989.8 1091.5,989.6 1092.5,989.6 1092.5,989.8 1094.5,989.8 1094.5,990.1 1095.5,990.1 1095.5,990.9 1097.5,990.9 1097.5,990 1098.5,990 1098.5,989.6 1100.5,989.6 1100.5,989.7 1102.5,989.7 1102.5,989.9 1103.5,989.9 1103.5,989.6 1104.5,989.6 1104.5,989.9 1105.5,989.9 1105.5,989.8 1108.5,989.8 1108.5,990 1109.5,990 1109.5,989.8 1110.5,989.8 1110.5,989.7 1112.5,989.7 1112.5,989.9 1113.5,989.9 1113.5,989.6 1114.5,989.6 1114.5,989.7 1116.5,989.7 1116.5,990 1117.5,990 1117.5,989.6 1118.5,989.6 1118.5,989.9 1119.5,989.9 1119.5,990 1120.5,990 1120.5,989.8 1121.5,989.8 1121.5,990.9 1123.5,990.9 1123.5,989.7 1124.5,989.7 1124.5,990 1126.5,990 1126.5,989.8 1127.5,989.8 1127.5,989.9 1128.5,989.9 1128.5,990.1 1129.5,990.1 1129.5,990 1131.5,990 1131.5,989.9 1132.5,989.9 1132.5,989.8 1133.5,989.8 1133.5,989.6 1134.5,989.6 1134.5,989.8 1136.5,989.8 1136.5,989.6 1138.5,989.6 1138.5,990 1139.5,990 1139.5,989.8 1140.5,989.8 1140.5,989.6 1141.5,989.6 1141.5,990 1142.5,990 1142.5,989.7 1144.5,989.7 1144.5,989.6 1145.5,989.6 1145.5,989.7 1146.5,989.7 1146.5,989.9 1147.5,989.9 1147.5,990.9 1149.5,990.9 1149.5,990.1 1150.5,990.1 1150.5,989.8 1151.5,989.8 1151.5,989.9 1152.5,989.9 1152.5,990 1153.5,990 1153.5,989.7 1157.5,989.7 1157.5,989.9 1158.5,989.9 1158.5,989.7 1159.5,989.7 1159.5,989.8 1161.5,989.8 1161.5,990 1162.5,990 1162.5,989.8 1163.5,989.8 1163.5,989.9 1164.5,989.9 1164.5,989.8 1165.5,989.8 1165.5,989.9 1167.5,989.9 1167.5,989.6 1168.5,989.6 1168.5,990 1169.5,990 1169.5,990.1 1170.5,990.1 1170.5,989.7 1172.5,989.7 1172.5,988.8 1183.5,988.8 1183.5,989.7 1185.5,989.7 1185.5,988.8 1196.5,988.8 1196.5,989.7 1198.5,989.7 1198.5,988.8 1209.5,988.8 1209.5,989.7 1211.5,989.7 1211.5,988.8 1222.5,988.8 1222.5,989.7 1224.5,989.7 1224.5,988.8 1235.5,988.8 1235.5,989.7 1237.5,989.7 1237.5,988.8 1248.5,988.8 1248.5,989.7 1250.5,989.7 1250.5,988.8 1261.5,988.8 1261.5,989.7 1263.5,989.7 1263.5,988.8 1274.5,988.8 1274.5,989.7 1276.5,989.7 L1276.5,994.4 1274.5,994.4 1274.5,995.2 1263.5,995.2 1263.5,994.4 1261.5,994.4 1261.5,995.2 1250.5,995.2 1250.5,994.4 1248.5,994.4 1248.5,995.2 1237.5,995.2 1237.5,994.4 1235.5,994.4 1235.5,995.2 1224.5,995.2 1224.5,994.4 1222.5,994.4 1222.5,995.2 1211.5,995.2 1211.5,994.4 1209.5,994.4 1209.5,995.2 1198.5,995.2 1198.5,994.4 1196.5,994.4 1196.5,995.2 1185.5,995.2 1185.5,994.4 1183.5,994.4 1183.5,995.2 1172.5,995.2 1172.5,994.4 1170.5,994.4 1170.5,994 1169.5,994 1169.5,994.1 1168.5,994.1 1168.5,994.4 1167.5,994.4 1167.5,994.2 1165.5,994.2 1165.5,994.3 1164.5,994.3 1164.5,994.2 1163.5,994.2 1163.5,994.3 1162.5,994.3 1162.5,994.1 1161.5,994.1 1161.5,994.3 1159.5,994.3 1159.5,994.4 1158.5,994.4 1158.5,994.2 1157.5,994.2 1157.5,994.4 1153.5,994.4 1153.5,994.1 1152.5,994.1 1152.5,994.2 1151.5,994.2 1151.5,994.3 1150.5,994.3 1150.5,994 1149.5,994 1149.5,993.2 1147.5,993.2 1147.5,994.2 1146.5,994.2 1146.5,994.4 1143.5,994.4 1143.5,994.3 1142.5,994.3 1142.5,994.1 1141.5,994.1 1141.5,994.5 1140.5,994.5 1140.5,994.3 1139.5,994.3 1139.5,994.1 1138.5,994.1 1138.5,994.4 1136.5,994.4 1136.5,994.3 1134.5,994.3 1134.5,994.5 1133.5,994.5 1133.5,994.3 1132.5,994.3 1132.5,994.2 1131.5,994.2 1131.5,994.1 1129.5,994.1 1129.5,994 1128.5,994 1128.5,994.2 1127.5,994.2 1127.5,994.3 1126.5,994.3 1126.5,994.1 1124.5,994.1 1124.5,994.4 1123.5,994.4 1123.5,993.2 1121.5,993.2 1121.5,994.3 1120.5,994.3 1120.5,994.1 1119.5,994.1 1119.5,994.2 1118.5,994.2 1118.5,994.4 1117.5,994.4 1117.5,994.1 1116.5,994.1 1116.5,994.3 1115.5,994.3 1115.5,994.4 1113.5,994.4 1113.5,994.2 1112.5,994.2 1112.5,994.4 1110.5,994.4 1110.5,994.3 1109.5,994.3 1109.5,994.1 1108.5,994.1 1108.5,994.3 1105.5,994.3 1105.5,994.2 1104.5,994.2 1104.5,994.4 1103.5,994.4 1103.5,994.2 1102.5,994.2 1102.5,994.3 1100.5,994.3 1100.5,994.4 1098.5,994.4 1098.5,994.1 1097.5,994.1 1097.5,993.2 1095.5,993.2 1095.5,994 1094.5,994 1094.5,994.3 1092.5,994.3 1092.5,994.4 1091.5,994.4 1091.5,994.2 1088.5,994.2 1088.5,994.3 1087.5,994.3 1087.5,994.4 1086.5,994.4 1086.5,994.1 1085.5,994.1 1085.5,994.3 1084.5,994.3 1084.5,994.4 1083.5,994.4 1083.5,994.5 1082.5,994.5 1082.5,994.1 1081.5,994.1 1081.5,994.2 1079.5,994.2 1079.5,994.1 1078.5,994.1 1078.5,994.4 1076.5,994.4 1076.5,994.2 1075.5,994.2 1075.5,994.5 1074.5,994.5 1074.5,994.2 1072.5,994.2 1072.5,994.1 1071.5,994.1 1071.5,993.2 1070.5,993.2 1070.5,993 1069.5,993Z" fill="#4094fd"/>
<path d="M1277.5,990.9 1278.5,990.9 1278.5,990 1280.5,990 1280.5,989.9 1282.5,989.9 1282.5,989.6 1283.5,989.6 1283.5,989.9 1284.5,989.9 1284.5,989.7 1286.5,989.7 1286.5,989.9 1289.5,989.9 1289.5,990 1290.5,990 1290.5,989.6 1292.5,989.6 1292.5,989.8 1293.5,989.8 1293.5,989.9 1294.5,989.9 1294.5,989.7 1295.5,989.7 1295.5,989.8 1296.5,989.8 1296.5,989.9 1297.5,989.9 1297.5,989.8 1299.5,989.8 1299.5,989.6 1300.5,989.6 1300.5,989.8 1302.5,989.8 1302.5,990.9 1304.5,990.9 1304.5,990.1 1305.5,990.1 1305.5,990 1306.5,990 1306.5,989.6 1308.5,989.6 1308.5,989.7 1310.5,989.7 1310.5,989.9 1311.5,989.9 1311.5,989.6 1312.5,989.6 1312.5,989.9 1313.5,989.9 1313.5,989.8 1316.5,989.8 1316.5,990 1317.5,990 1317.5,989.8 1318.5,989.8 1318.5,989.7 1320.5,989.7 1320.5,989.9 1321.5,989.9 1321.5,989.6 1322.5,989.6 1322.5,989.7 1324.5,989.7 1324.5,990 1325.5,990 1325.5,989.6 1326.5,989.6 1326.5,989.9 1327.5,989.9 1327.5,990 1328.5,990 1328.5,990.9 1330.5,990.9 1330.5,990 1331.5,990 1331.5,989.7 1332.5,989.7 1332.5,990 1334.5,990 1334.5,989.8 1335.5,989.8 1335.5,989.9 1336.5,989.9 1336.5,990.1 1337.5,990.1 1337.5,990 1339.5,990 1339.5,989.9 1340.5,989.9 1340.5,989.8 1341.5,989.8 1341.5,989.6 1342.5,989.6 1342.5,989.8 1344.5,989.8 1344.5,989.6 1346.5,989.6 1346.5,990 1347.5,990 1347.5,989.8 1348.5,989.8 1348.5,989.6 1349.5,989.6 1349.5,990 1350.5,990 1350.5,989.7 1352.5,989.7 1352.5,989.6 1353.5,989.6 1353.5,989.7 1354.5,989.7 1354.5,990.9 1356.5,990.9 1356.5,990.1 1358.5,990.1 1358.5,989.8 1359.5,989.8 1359.5,989.9 1360.5,989.9 1360.5,990 1361.5,990 1361.5,989.7 1365.5,989.7 1365.5,989.9 1366.5,989.9 1366.5,989.7 1367.5,989.7 1367.5,989.8 1369.5,989.8 1369.5,990 1370.5,990 1370.5,989.8 1371.5,989.8 1371.5,989.9 1372.5,989.9 1372.5,989.8 1373.5,989.8 1373.5,989.9 1375.5,989.9 1375.5,989.6 1376.5,989.6 1376.5,990 1377.5,990 1377.5,989.7 1379.5,989.7 1379.5,988.8 1390.5,988.8 1390.5,989.7 1392.5,989.7 1392.5,988.8 1403.5,988.8 1403.5,989.7 1405.5,989.7 1405.5,988.8 1416.5,988.8 1416.5,989.7 1418.5,989.7 1418.5,988.8 1429.5,988.8 1429.5,989.7 1431.5,989.7 1431.5,988.8 1442.5,988.8 1442.5,989.7 1444.5,989.7 1444.5,988.8 1455.5,988.8 1455.5,989.7 1457.5,989.7 1457.5,988.8 1468.5,988.8 1468.5,989.7 1470.5,989.7 1470.5,988.8 1481.5,988.8 1481.5,989.7 1483.5,989.7 1483.5,991.1 1484.5,991.1 1484.5,990.9 1485.5,990.9 1485.5,989.9 1486.5,989.9 L1486.5,994.2 1485.5,994.2 1485.5,993.2 1484.5,993.2 1484.5,993 1483.5,993 1483.5,994.4 1481.5,994.4 1481.5,995.2 1470.5,995.2 1470.5,994.4 1468.5,994.4 1468.5,995.2 1457.5,995.2 1457.5,994.4 1455.5,994.4 1455.5,995.2 1444.5,995.2 1444.5,994.4 1442.5,994.4 1442.5,995.2 1431.5,995.2 1431.5,994.4 1429.5,994.4 1429.5,995.2 1418.5,995.2 1418.5,994.4 1416.5,994.4 1416.5,995.2 1405.5,995.2 1405.5,994.4 1403.5,994.4 1403.5,995.2 1392.5,995.2 1392.5,994.4 1390.5,994.4 1390.5,995.2 1379.5,995.2 1379.5,994.4 1377.5,994.4 1377.5,994.1 1376.5,994.1 1376.5,994.4 1375.5,994.4 1375.5,994.2 1373.5,994.2 1373.5,994.3 1372.5,994.3 1372.5,994.2 1371.5,994.2 1371.5,994.3 1370.5,994.3 1370.5,994.1 1369.5,994.1 1369.5,994.3 1367.5,994.3 1367.5,994.4 1366.5,994.4 1366.5,994.2 1365.5,994.2 1365.5,994.4 1361.5,994.4 1361.5,994.1 1360.5,994.1 1360.5,994.2 1359.5,994.2 1359.5,994.3 1358.5,994.3 1358.5,994 1356.5,994 1356.5,993.2 1354.5,993.2 1354.5,994.4 1351.5,994.4 1351.5,994.3 1350.5,994.3 1350.5,994.1 1349.5,994.1 1349.5,994.5 1348.5,994.5 1348.5,994.3 1347.5,994.3 1347.5,994.1 1346.5,994.1 1346.5,994.4 1344.5,994.4 1344.5,994.3 1342.5,994.3 1342.5,994.5 1341.5,994.5 1341.5,994.3 1340.5,994.3 1340.5,994.2 1339.5,994.2 1339.5,994.1 1337.5,994.1 1337.5,994 1336.5,994 1336.5,994.2 1335.5,994.2 1335.5,994.3 1334.5,994.3 1334.5,994.1 1332.5,994.1 1332.5,994.4 1331.5,994.4 1331.5,994.1 1330.5,994.1 1330.5,993.2 1328.5,993.2 1328.5,994.1 1327.5,994.1 1327.5,994.2 1326.5,994.2 1326.5,994.4 1325.5,994.4 1325.5,994.1 1324.5,994.1 1324.5,994.3 1323.5,994.3 1323.5,994.4 1321.5,994.4 1321.5,994.2 1320.5,994.2 1320.5,994.4 1318.5,994.4 1318.5,994.3 1317.5,994.3 1317.5,994.1 1316.5,994.1 1316.5,994.3 1313.5,994.3 1313.5,994.2 1312.5,994.2 1312.5,994.4 1311.5,994.4 1311.5,994.2 1310.5,994.2 1310.5,994.3 1308.5,994.3 1308.5,994.4 1306.5,994.4 1306.5,994.1 1305.5,994.1 1305.5,994 1304.5,994 1304.5,993.2 1302.5,993.2 1302.5,994.3 1300.5,994.3 1300.5,994.4 1299.5,994.4 1299.5,994.2 1296.5,994.2 1296.5,994.3 1295.5,994.3 1295.5,994.4 1294.5,994.4 1294.5,994.1 1293.5,994.1 1293.5,994.3 1292.5,994.3 1292.5,994.4 1291.5,994.4 1291.5,994.5 1290.5,994.5 1290.5,994.1 1289.5,994.1 1289.5,994.2 1287.5,994.2 1287.5,994.1 1286.5,994.1 1286.5,994.4 1284.5,994.4 1284.5,994.2 1283.5,994.2 1283.5,994.5 1282.5,994.5 1282.5,994.2 1280.5,994.2 1280.5,994.1 1278.5,994.1 1278.5,993.2 1277.5,993.2Z" fill="#2364b4"/>
<text transform="translate(1079,957.9) scale(1.06,1)" class="rl">Back in the Day Organ</text>
<rect x="443.8" y="137" width="4.4" height="895" fill="#000"/>
<path d="M445.9,137.4 V103.6 H462.4 V120 L445.9,137.4Z" fill="#2b2b2b"/>
<text x="450.6" y="116.9" class="rn">1</text>
<path d="M446,138 V137 L462.5,120.2 V103.7 H445.1" fill="none" stroke="#e6e6e6" stroke-width="1.5" stroke-linejoin="miter"/>
<rect x="444.9" y="136.6" width="2.2" height="896" fill="#f6f6f6"/>
<path d="M1452.6,1024 A23.6,23.6 0 0 0 1476.2,1000.4" fill="none" stroke="#fff" stroke-width="4.4" stroke-linecap="round"/>
</svg>
<svg id="chrome" width="1484" height="1032">
<g fill="none" stroke="#fff" stroke-width="2.6" stroke-linecap="butt">
<path d="M1407.6,17.7 A12.6,12.6 0 0 1 1424.6,17.7"/>
<path d="M1410.9,21 A7.6,7.6 0 0 1 1421.3,21"/>
</g><path d="M1413.2,23.9 A4,4 0 0 1 1419,23.9 L1416.1,26.9Z" fill="#fff"/>
<rect x="1431" y="12.7" width="31.6" height="15.2" rx="4.6" fill="none" stroke="#8c8c8c" stroke-width="1.3"/>
<rect x="1433.2" y="14.9" width="27.2" height="10.8" rx="2.8" fill="#fff"/>
<path d="M1463.9,17.8 q1.9,.4 1.9,2.5 q0,2.1 -1.9,2.5Z" fill="#8c8c8c"/>
<path d="M33.8,45.6 H43.6 L54,56.2 V72.4 a2.8,2.8 0 0 1 -2.8,2.8 H33.8 a2.8,2.8 0 0 1 -2.8,-2.8 V48.4 a2.8,2.8 0 0 1 2.8,-2.8Z" fill="#bdbdbd"/>
<path d="M44.2,45 V56.6 H54.6" fill="none" stroke="#171717" stroke-width="1.4"/>
<g fill="none" stroke="#c6c6c6" stroke-width="1.8">
<rect x="109.1" y="51.1" width="17.4" height="18.3" rx="2.8"/>
<rect x="97.1" y="56.4" width="7.4" height="7.8" rx="1.6"/>
<rect x="131.8" y="56.4" width="7.4" height="7.8" rx="1.6"/></g>
<rect x="169.1" y="46" width="8.9" height="19.1" rx="4.45" fill="#c6c6c6"/>
<g fill="none" stroke="#c6c6c6" stroke-width="1.7" stroke-linecap="round">
<path d="M165,57.6 V60.4 a8.55,8.55 0 0 0 17.1,0 V57.6"/>
<path d="M173.55,69.2 V73.4 M167.4,73.6 H179.8"/></g>
<g fill="none" stroke="#c6c6c6" stroke-width="1.7" stroke-linecap="round">
<path d="M243.1,49.4 V71.6 M252.5,49.4 V71.6 M261.7,49.4 V71.6"/></g>
<g fill="#111" stroke="#c6c6c6" stroke-width="1.6">
<circle cx="243.1" cy="64.2" r="2.7"/><circle cx="252.5" cy="56.1" r="2.7"/><circle cx="261.7" cy="64.2" r="2.7"/></g>
<rect x="698.3" y="39.4" width="87.8" height="42" fill="#0d2914"/>
<rect x="652" y="48.3" width="24.1" height="24.2" rx="2.2" fill="#b6b6b6"/>
<path d="M733.4,48.6 Q732.4,48 732.4,49.3 V72 Q732.4,73.2 733.5,72.6 L754,61.3 Q754.8,60.7 754,60.1Z" fill="#35c759"/>
<circle cx="820" cy="60.7" r="14.7" fill="#ff2d21"/>
<rect x="887.2" y="53.4" width="182" height="13.8" rx="6.9" fill="#0e0e0e"/>
<circle cx="1027.3" cy="60.2" r="12" fill="#1b1b1b" stroke="#3c3c3c" stroke-width="1.2"/>
<g fill="none" stroke="#d2d2d2" stroke-width="2.1" stroke-linejoin="round" stroke-linecap="round">
<path d="M1113.3,50 Q1115.2,46.6 1117.1,50 L1128.2,69.4 Q1129.6,72.3 1126.4,72.3 H1105.2 Q1102,72.3 1103.4,69.4Z"/>
<path d="M1106.2,66 H1124.6"/>
<path d="M1115.2,53.8 V62.4"/>
</g>
<path d="M1118.2,63.1 L1126.4,55" stroke="#171717" stroke-width="4.6" stroke-linecap="butt"/>
<path d="M1115.9,65.4 L1127.4,54" stroke="#d2d2d2" stroke-width="2.1" stroke-linecap="round"/>
<g fill="none" stroke="#d0d0d0" stroke-width="2.2" stroke-linecap="round">
<path d="M1295.4,72.5 H1310.2 A12.2,12.2 0 0 0 1322.4,60.3 A12.2,12.2 0 0 0 1310.2,48.1 A12.2,12.2 0 0 0 1298,60.3 C1298,63.8 1300.2,67 1303.8,68.8"/>
<path d="M1317.8,72.5 H1324.8"/></g>
<g fill="none" stroke="#cccccc">
<circle cx="1375.1" cy="60.2" r="10.8" stroke-width="1.9"/>
<path d="M1386.56,62.01 L1389.22,62.44 M1385.44,65.47 L1387.84,66.69 M1383.30,68.40 L1385.21,70.31 M1380.37,70.54 L1381.59,72.94 M1376.92,71.66 L1377.34,74.32 M1373.29,71.66 L1372.86,74.32 M1369.83,70.54 L1368.61,72.94 M1366.90,68.40 L1364.99,70.31 M1364.76,65.47 L1362.36,66.69 M1363.64,62.02 L1360.98,62.44 M1363.64,58.39 L1360.98,57.96 M1364.76,54.93 L1362.36,53.71 M1366.90,52.00 L1364.99,50.09 M1369.83,49.86 L1368.61,47.46 M1373.28,48.74 L1372.86,46.08 M1376.91,48.74 L1377.34,46.08 M1380.37,49.86 L1381.59,47.46 M1383.30,52.00 L1385.21,50.09 M1385.44,54.93 L1387.84,53.71 M1386.56,58.38 L1389.22,57.96 " stroke-width="2.6"/>
<path d="M1377.70,60.20 L1385.70,60.20 M1373.80,62.45 L1369.80,69.38 M1373.80,57.95 L1369.80,51.02 " stroke-width="1.8"/>
<circle cx="1375.1" cy="60.2" r="2.4" stroke-width="1.5"/></g>
<path d="M1457,119.2 H1473.2 M1465.1,111.1 V127.3" stroke="#e4e4e4" stroke-width="2.2" fill="none"/>
</svg>
<svg width="1484" height="1032"><g>
<path d="M380.1,167.7 C386,167.7 390.3,170.6 390.3,177 V182 C390.3,187 388.4,190.4 384.8,192.7 C384.2,194.6 385.2,195.8 387.6,196.6 C390,197.4 393.6,198.6 393.6,200.4 V208.1 H360.4 C361.4,202.8 366.6,198.8 372.6,196.8 C375,196 376,194.6 375.4,192.7 C371.8,190.4 369.9,187 369.9,182 V177 C369.9,170.6 374.2,167.7 380.1,167.7Z" fill="#1c69cf"/>
<rect x="393.4" y="188.3" width="9" height="23" rx="4.2" fill="#06143a"/>
<rect x="394.6" y="189.5" width="6.6" height="20.6" rx="3.3" fill="#1c69cf"/>
<rect x="394.6" y="189.5" width="6.6" height="7" rx="3.2" fill="#5f8fd8"/>
<rect x="396.2" y="191.4" width="3.4" height="2.6" rx=".8" fill="#06143a"/>
<path d="M394.6,197.4 H401.2 M394.6,199.6 H401.2" stroke="#06143a" stroke-width=".9"/>
<path d="M394.6,198.5 H401.2" stroke="#6c9be0" stroke-width="1.2"/>
</g><g transform="translate(0,0)">
<rect x="359.5" y="282.6" width="3.7" height="12.4" rx=".8" fill="#1c69cf"/>
<rect x="398" y="282.6" width="3.7" height="12.4" rx=".8" fill="#1c69cf"/>
<rect x="364.7" y="273.6" width="31.9" height="32.1" rx="5.5" fill="#1c69cf"/>
<path d="M373.6,273.4 A7,7 0 0 0 387.6,273.4Z" fill="#06143a"/>
<path d="M375.4,273.6 A5.2,5.2 0 0 0 385.8,273.6" fill="none" stroke="#7ba4e4" stroke-width="1.1"/>
<circle cx="380.6" cy="270.9" r="4.4" fill="#06143a"/>
<circle cx="380.6" cy="270.8" r="3.5" fill="#1c69cf"/>
<circle cx="373.3" cy="285.6" r="3.3" fill="#1c69cf" stroke="#06143a" stroke-width="1.9"/>
<circle cx="388" cy="285.6" r="3.3" fill="#1c69cf" stroke="#06143a" stroke-width="1.9"/>
<path d="M380.6,286.4 L383.3,292.8 H377.9Z" fill="#06143a"/>
<rect x="372.3" y="294.7" width="16.8" height="5.4" rx="2.7" fill="#06143a"/>
<rect x="374.2" y="296" width="13" height="2.8" rx="1.2" fill="#5b8ad6"/>
<path d="M376.7,295.8 V299 M379.3,295.8 V299 M381.9,295.8 V299 M384.5,295.8 V299" stroke="#06143a" stroke-width=".8"/>
</g><g transform="translate(0,99.4)">
<rect x="359.5" y="282.6" width="3.7" height="12.4" rx=".8" fill="#1c69cf"/>
<rect x="398" y="282.6" width="3.7" height="12.4" rx=".8" fill="#1c69cf"/>
<rect x="364.7" y="273.6" width="31.9" height="32.1" rx="5.5" fill="#1c69cf"/>
<path d="M373.6,273.4 A7,7 0 0 0 387.6,273.4Z" fill="#06143a"/>
<path d="M375.4,273.6 A5.2,5.2 0 0 0 385.8,273.6" fill="none" stroke="#7ba4e4" stroke-width="1.1"/>
<circle cx="380.6" cy="270.9" r="4.4" fill="#06143a"/>
<circle cx="380.6" cy="270.8" r="3.5" fill="#1c69cf"/>
<circle cx="373.3" cy="285.6" r="3.3" fill="#1c69cf" stroke="#06143a" stroke-width="1.9"/>
<circle cx="388" cy="285.6" r="3.3" fill="#1c69cf" stroke="#06143a" stroke-width="1.9"/>
<path d="M380.6,286.4 L383.3,292.8 H377.9Z" fill="#06143a"/>
<rect x="372.3" y="294.7" width="16.8" height="5.4" rx="2.7" fill="#06143a"/>
<rect x="374.2" y="296" width="13" height="2.8" rx="1.2" fill="#5b8ad6"/>
<path d="M376.7,295.8 V299 M379.3,295.8 V299 M381.9,295.8 V299 M384.5,295.8 V299" stroke="#06143a" stroke-width=".8"/>
</g><g>
<ellipse cx="380.6" cy="487" rx="20.6" ry="7.3" fill="#1c69cf"/>
<path d="M369.6,482 C369.6,474.5 374.5,469.7 380.6,469.7 C386.7,469.7 391.6,474.5 391.6,482 C391.6,486.5 369.6,486.5 369.6,482Z" fill="#1c69cf" stroke="#06143a" stroke-width="1.2"/>
<ellipse cx="380.6" cy="481.2" rx="8.6" ry="3.1" fill="#0a1526" stroke="#5b8ad6" stroke-width=".8"/>
<rect x="373" y="498" width="2.5" height="5.8" rx=".6" fill="#3f7ad6"/>
<rect x="379.2" y="498" width="2.5" height="7" rx=".6" fill="#3f7ad6"/>
<rect x="385.6" y="498" width="2.5" height="5.8" rx=".6" fill="#3f7ad6"/>
</g><g>
<rect x="358.4" y="566.2" width="44.4" height="39.8" rx="1.8" fill="#05112e" stroke="#4176cc" stroke-width="1.1"/>
<rect x="358.4" y="601.4" width="44.4" height="4.8" fill="#1c69cf"/>
<rect x="362" y="569.8" width="18.3" height="6.2" rx=".6" fill="#1c69cf"/>
<rect x="362.00" y="579.70" width="3.4" height="3.4" fill="#3f79d2"/><rect x="362.00" y="584.74" width="3.4" height="3.4" fill="#3f79d2"/><rect x="362.00" y="589.78" width="3.4" height="3.4" fill="#3f79d2"/><rect x="362.00" y="594.82" width="3.4" height="3.4" fill="#3f79d2"/><rect x="367.04" y="579.70" width="3.4" height="3.4" fill="#3f79d2"/><rect x="367.04" y="584.74" width="3.4" height="3.4" fill="#3f79d2"/><rect x="367.04" y="589.78" width="3.4" height="3.4" fill="#3f79d2"/><rect x="367.04" y="594.82" width="3.4" height="3.4" fill="#3f79d2"/><rect x="372.08" y="579.70" width="3.4" height="3.4" fill="#3f79d2"/><rect x="372.08" y="584.74" width="3.4" height="3.4" fill="#3f79d2"/><rect x="372.08" y="589.78" width="3.4" height="3.4" fill="#3f79d2"/><rect x="372.08" y="594.82" width="3.4" height="3.4" fill="#3f79d2"/><rect x="377.12" y="579.70" width="3.4" height="3.4" fill="#3f79d2"/><rect x="377.12" y="584.74" width="3.4" height="3.4" fill="#3f79d2"/><rect x="377.12" y="589.78" width="3.4" height="3.4" fill="#3f79d2"/><rect x="377.12" y="594.82" width="3.4" height="3.4" fill="#3f79d2"/><rect x="385.6" y="569.4" width="3.3" height="1.3" fill="#5a86cf"/><rect x="385.6" y="574.5" width="3.3" height="1.3" fill="#5a86cf"/><rect x="385.6" y="592.2" width="3.3" height="1.3" fill="#5a86cf"/><rect x="385.6" y="597.2" width="3.3" height="1.3" fill="#5a86cf"/><rect x="390.8" y="569.4" width="3.3" height="1.3" fill="#5a86cf"/><rect x="390.8" y="574.5" width="3.3" height="1.3" fill="#5a86cf"/><rect x="390.8" y="592.2" width="3.3" height="1.3" fill="#5a86cf"/><rect x="390.8" y="597.2" width="3.3" height="1.3" fill="#5a86cf"/><rect x="395.9" y="569.4" width="3.3" height="1.3" fill="#5a86cf"/><rect x="395.9" y="574.5" width="3.3" height="1.3" fill="#5a86cf"/><rect x="395.9" y="592.2" width="3.3" height="1.3" fill="#5a86cf"/><rect x="395.9" y="597.2" width="3.3" height="1.3" fill="#5a86cf"/>
<circle cx="392.6" cy="584" r="3.3" fill="#1c69cf"/>
</g><g>
<path d="M397.6,669.2 L376.4,691.6" stroke="#1c69cf" stroke-width="3" stroke-linecap="butt"/>
<path d="M396.6,668.2 L399.2,664.6 Q401,662.6 402.6,664.4 Q404,666.2 402.4,668 L399.4,671Z" fill="#1c69cf"/>
<path d="M395.4,664.4 l1.5,1.5 M397.4,662.6 l1.5,1.5 M401,670.6 l1.4,1.4 M402.8,668.6 l1.4,1.4" stroke="#6c9be0" stroke-width=".9"/>
<path d="M374.8,682.6 C372.6,681.8 370.6,683.6 369.6,686.4 C368.4,689.6 365.6,691.4 362,692.6 C357.4,694.2 355,697.6 355.8,701.6 C356.8,706.6 362,710.4 367,709.6 C370.6,709 372.4,706.6 373.6,703.6 C374.8,700.6 376.4,698.6 379,697.6 C380.6,697 380.8,695.4 379.8,694.6 L376.4,695.2 L372.8,690.8 Z" fill="#1c69cf"/>
<path d="M366.6,694 L372.4,690.2 L376.4,695.4 L373,698.6 C371.4,700.4 371.6,703.4 369.6,705.4 L364.8,700.2 Z" fill="#06143a"/>
<path d="M366.6,696.6 l2.2,-1.4 M367.8,700 l2.2,-1.4" stroke="#6c9be0" stroke-width="1"/>
<rect x="359.6" y="702.2" width="4.6" height="2.4" rx=".5" transform="rotate(38 361.9 703.4)" fill="#06143a"/>
</g><g>
<path d="M376.2,760.4 Q379,760.2 381.4,762.6 Q384,765 387.4,764.4 Q390.8,764 391,768.4 Q390.8,771 389.6,773.4 L378.6,801 Q376.6,808.6 371.6,809.2 Q367.6,809 368.4,803.6 Q369,801 371,798 L387.4,771.6 Q389,768.4 387.6,767 Q385.2,767.4 382.6,766 Q379.4,763.2 376.2,760.4Z" fill="#1c69cf"/>
<path d="M387.4,771.6 L389.6,773.4 L378.6,801 Q376.6,808.6 371.6,809.2 Q367.6,809 368.4,803.6 Q369,801 371,798Z" fill="#2f6fd0"/>
<path d="M387.3,788.2 Q389.6,791.6 390.1,796.4 C386,797.5 383.5,800 381,804 C379,807.5 376,809.5 372,809.3 L375,801.6 C378.4,796.6 382,792 387.3,788.2Z" fill="#1c69cf" stroke="#19191b" stroke-width=".7"/>
<path d="M372.6,802.4 L384.4,780.4" stroke="#06143a" stroke-width="1.1"/>
<g fill="#6c9be0"><circle cx="383.4" cy="783.6" r="1"/><circle cx="381.2" cy="787.4" r="1"/><circle cx="379" cy="791.4" r="1"/><circle cx="376.8" cy="795.4" r="1"/><circle cx="374.6" cy="799.4" r="1"/></g>
<path d="M376.4,803.4 l4.6,-7.4" stroke="#6c9be0" stroke-width="1.2" stroke-dasharray="1.2 1"/>
</g><g fill="none" stroke="#4479d0" stroke-width="1.2">
<path d="M361.6,864.4 H399.6 Q401.2,864.4 401.6,866 L403,876.4 V879 Q403,881 401,881 H360.2 Q358.2,881 358.2,879 V876.4 L359.6,866 Q360,864.4 361.6,864.4Z" fill="#05112e"/>
<path d="M358.6,877.6 H402.6"/>
<path d="M360.8,881 V904 H362.6 V881 M398.6,881 V904 H400.4 V881" stroke-width="1.1"/>
<path d="M366.8,868.4 H394.4 L393,874.6 H368.2Z" fill="#1c69cf" stroke="none"/>
<circle cx="372.2" cy="871.4" r="1.5" fill="#06143a" stroke="none"/><circle cx="377.4" cy="871.4" r="1.5" fill="#06143a" stroke="none"/>
</g><g fill="#1c69cf">
<path d="M368.8,963.2 H392.8 L394.6,971.6 H367Z"/>
<rect x="361.5" y="971.2" width="38.2" height="7.2"/>
<rect x="365.2" y="972.8" width="30" height="4.2" fill="#06143a"/>
<rect x="366.8" y="974.4" width="27" height="1.1" fill="#8fb0e6"/>
<rect x="365.6" y="979.6" width="29.8" height="6.6"/>
<path d="M360.3,979.4 H364.8 L363.4,1004 H361.2Z"/>
<path d="M396.2,979.4 H400.9 L400,1004 H397.6Z"/>
</g></svg>
<div id="fx">FX</div>
<div id="help">?</div>
</div></body></html>
